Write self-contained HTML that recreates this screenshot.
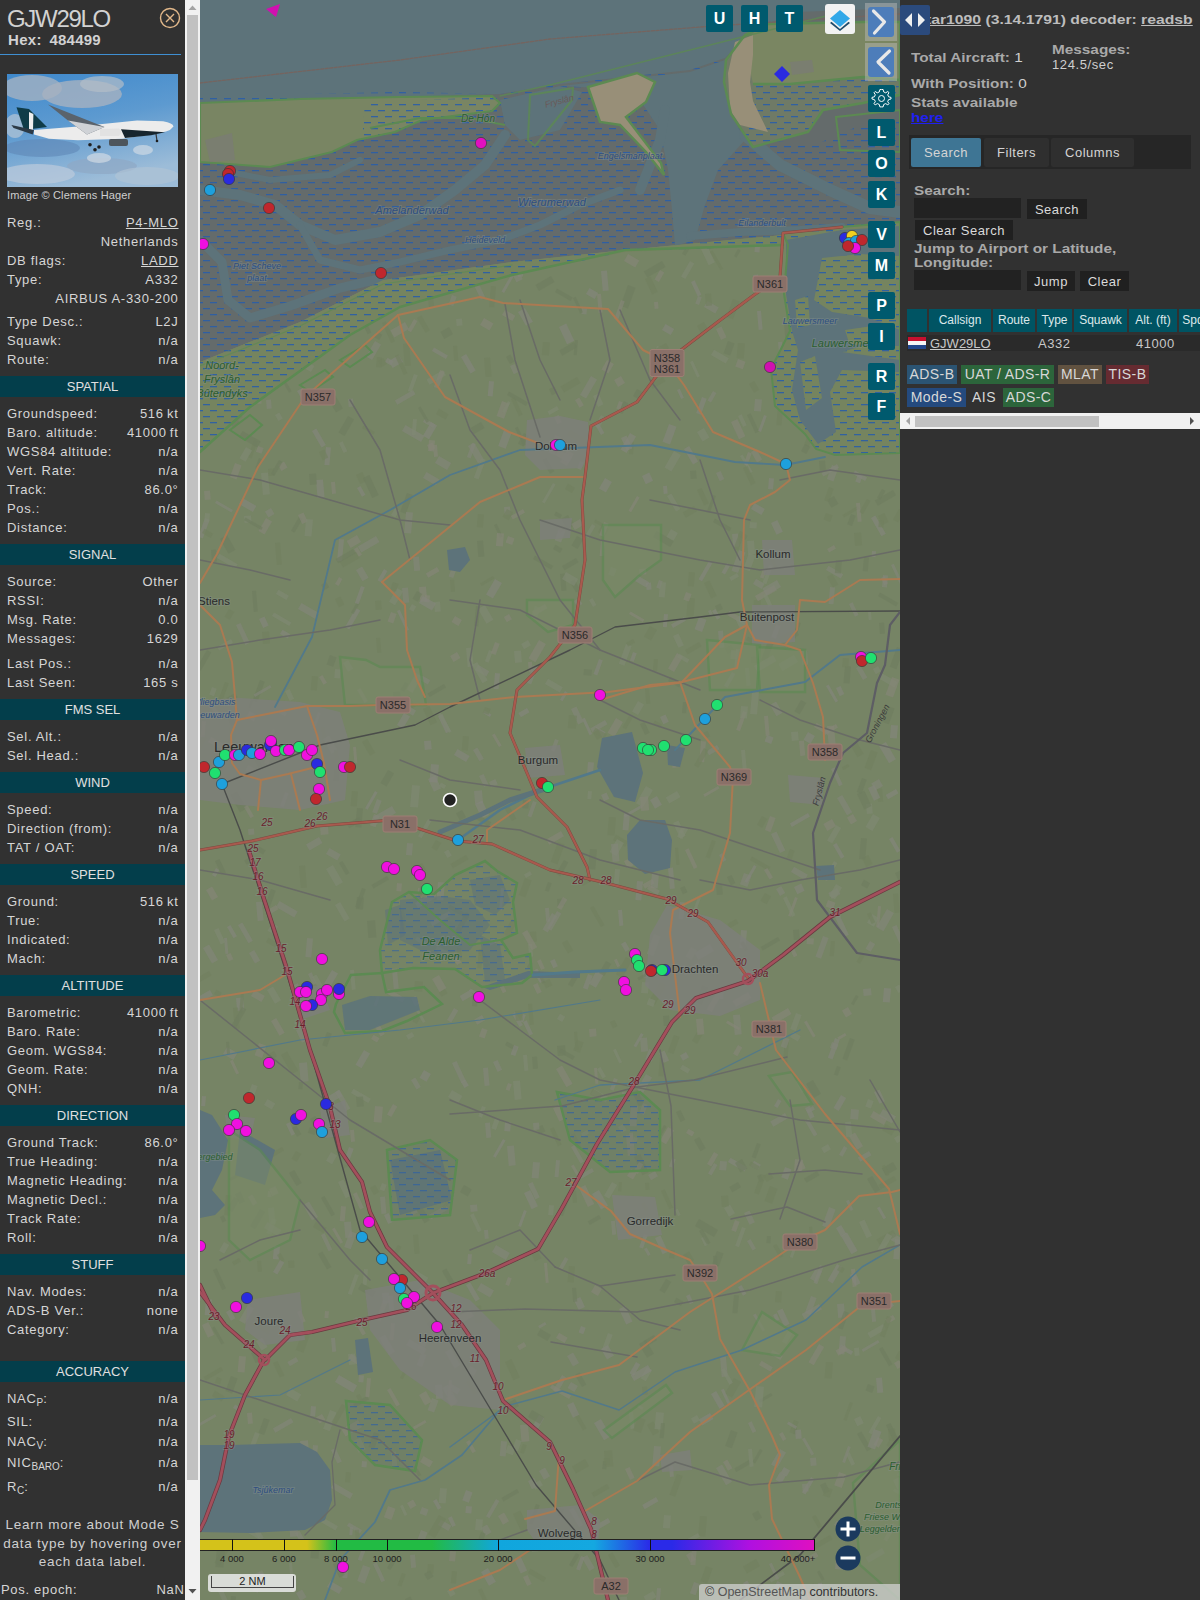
<!DOCTYPE html>
<html><head><meta charset="utf-8">
<style>
html,body{margin:0;padding:0;width:1200px;height:1600px;overflow:hidden;background:#313131;font-family:"Liberation Sans",sans-serif;}
#sb{position:absolute;left:0;top:0;width:185px;height:1600px;background:#313131;color:#d6d6d6;font-size:13px;}
#vscroll{position:absolute;left:185px;top:0;width:15px;height:1600px;background:#f1f1f1;}
#vthumb{position:absolute;left:2px;top:15px;width:11px;height:1465px;background:#c1c1c1;}
#map{position:absolute;left:200px;top:0;width:700px;height:1600px;background:#73825f;overflow:hidden;}
#rp{position:absolute;left:900px;top:0;width:300px;height:1600px;background:#313131;color:#c8c8c8;font-size:13px;}
.r{position:absolute;left:7px;width:171px;height:19px;line-height:19px;white-space:nowrap;letter-spacing:0.7px}
.r sub{font-size:10px;vertical-align:-3px;line-height:0;letter-spacing:0}
.r .v{position:absolute;right:-0.5px;top:0;}
.hd{position:absolute;left:0;width:185px;height:21px;line-height:21px;background:#033e4b;text-align:center;color:#e0e0e0;font-size:13px;}

.b{position:absolute;font-weight:bold;font-size:13px;line-height:15px;color:#a9a9a9;white-space:nowrap;transform-origin:0 50%}
.n{position:absolute;font-size:13px;line-height:18px;color:#cfcfcf;white-space:nowrap}
.tab{position:absolute;top:138px;height:29px;line-height:29px;text-align:center;color:#d4d4d4;font-size:13px;letter-spacing:0.5px;border-radius:2px}
.btn{position:absolute;height:20px;line-height:22px;background:#202020;text-align:center;color:#dadada;font-size:13px;letter-spacing:0.5px}
.th{position:absolute;top:309px;height:23px;line-height:23px;background:#005463;color:#dce8ea;font-size:12px;text-align:center;white-space:nowrap}
.bd{position:absolute;height:19px;line-height:19px;color:#d8d8d8;font-size:14px;text-align:center;letter-spacing:0.4px;white-space:nowrap}
</style></head><body>
<div id="sb">
<div style="position:absolute;left:7px;top:6px;font-size:24px;line-height:26px;color:#d2d2d2;letter-spacing:-1.3px">GJW29LO</div>
<div style="position:absolute;left:8px;top:32px;font:bold 15px 'Liberation Sans',sans-serif;line-height:15px;color:#d2d2d2;white-space:pre;letter-spacing:0.3px">Hex:</div><div style="position:absolute;left:49.5px;top:32px;font:bold 15px 'Liberation Sans',sans-serif;line-height:15px;color:#d2d2d2;letter-spacing:0.2px">484499</div>
<svg style="position:absolute;left:159px;top:7px" width="22" height="22"><circle cx="11" cy="11" r="9.5" fill="none" stroke="#e2b88a" stroke-width="1.4"/><path d="M7,7 L15,15 M15,7 L7,15" stroke="#e2b88a" stroke-width="1.4"/></svg>
<div style="position:absolute;left:0;top:54px;width:181px;height:1px;background:#3f8fd2"></div>
<svg width="171" height="113" viewBox="0 0 171 113" style="position:absolute;left:7px;top:74px">
<defs><linearGradient id="sky" x1="0" y1="0" x2="0.3" y2="1"><stop offset="0" stop-color="#3f89cc"/><stop offset="0.5" stop-color="#5d9ad0"/><stop offset="1" stop-color="#9cbcd8"/></linearGradient></defs>
<rect width="171" height="113" fill="url(#sky)"/>
<ellipse cx="25" cy="14" rx="30" ry="13" fill="#9eafc2" opacity="0.85"/>
<ellipse cx="75" cy="20" rx="40" ry="14" fill="#a6b2c0" opacity="0.8"/>
<ellipse cx="95" cy="10" rx="22" ry="8" fill="#b4bec8" opacity="0.7"/>
<ellipse cx="8" cy="52" rx="10" ry="12" fill="#b6c6d6" opacity="0.7"/>
<ellipse cx="35" cy="74" rx="38" ry="9" fill="#5f87b6" opacity="0.6"/>
<ellipse cx="95" cy="92" rx="35" ry="8" fill="#8ea8c4" opacity="0.7"/>
<ellipse cx="30" cy="100" rx="38" ry="10" fill="#bccbdb" opacity="0.7"/>
<ellipse cx="140" cy="102" rx="32" ry="9" fill="#b2c4d6" opacity="0.6"/>
<ellipse cx="136" cy="76" rx="10" ry="5" fill="#c6d4e2" opacity="0.8"/>
<ellipse cx="92" cy="84" rx="12" ry="5" fill="#d0dae4" opacity="0.7"/>
<path d="M9.5,33.3 L22,35 L40,53 L17,56 Z" fill="#0f3c48"/>
<path d="M22,38 L26.4,40 L26,56 L22,56 Z" fill="#eeeeee"/>
<path d="M4.4,51 L27,56 L25.7,60.4 L6.6,54 Z" fill="#2c3a46"/>
<path d="M27,56 L71,52.4 L130,46.5 L156,47.2 Q166,49 166.5,52.4 Q164,56 159,57.5 L144,60.4 L115,64.8 L71,66.3 L42,64.8 L27,60.4 Z" fill="#ececec"/>
<path d="M114,55.3 L158,58.2 L144,61.2 L118,64.1 Z" fill="#17252e"/>
<path d="M41,30.4 L46,32.5 L97.5,53 L80,60.4 L61,46.5 Z" fill="#5a636c"/>
<path d="M61,46.5 L97.5,53 L80,60.4 Z" fill="#cfd2d6"/>
<path d="M93,55 L112,54.6 Q116,58 112,62 L93,62 Z" fill="#e2e2e2"/>
<rect x="102" y="65" width="19" height="7" rx="2" fill="#4d555c"/>
<circle cx="83" cy="70.7" r="1.8" fill="#1e1e1e"/><circle cx="92" cy="73" r="1.8" fill="#1e1e1e"/><circle cx="88" cy="75.8" r="1.8" fill="#1e1e1e"/>
<path d="M149,60 L150,67" stroke="#333" stroke-width="1.2"/><circle cx="150" cy="67" r="1.3" fill="#1e1e1e"/>
</svg>

<div style="position:absolute;left:7px;top:188px;font-size:11px;line-height:14px;color:#cfcfcf;letter-spacing:0.15px">Image © Clemens Hager</div>
<div class="r" style="top:213px">Reg.:<span class="v"><u>P4-MLO</u></span></div>
<div class="r" style="top:232px"><span class="v">Netherlands</span></div>
<div class="r" style="top:251px">DB flags:<span class="v"><u>LADD</u></span></div>
<div class="r" style="top:269.5px">Type:<span class="v">A332</span></div>
<div class="r" style="top:288.5px"><span class="v">AIRBUS A-330-200</span></div>
<div class="r" style="top:311.5px">Type Desc.:<span class="v">L2J</span></div>
<div class="r" style="top:330.5px">Squawk:<span class="v">n/a</span></div>
<div class="r" style="top:349.5px">Route:<span class="v">n/a</span></div>
<div class="r" style="top:404px">Groundspeed:<span class="v">516 kt</span></div>
<div class="r" style="top:423px">Baro. altitude:<span class="v">41000 ft</span></div>
<div class="r" style="top:442px">WGS84 altitude:<span class="v">n/a</span></div>
<div class="r" style="top:461px">Vert. Rate:<span class="v">n/a</span></div>
<div class="r" style="top:480px">Track:<span class="v">86.0°</span></div>
<div class="r" style="top:499px">Pos.:<span class="v">n/a</span></div>
<div class="r" style="top:518px">Distance:<span class="v">n/a</span></div>
<div class="r" style="top:572px">Source:<span class="v">Other</span></div>
<div class="r" style="top:591px">RSSI:<span class="v">n/a</span></div>
<div class="r" style="top:610px">Msg. Rate:<span class="v">0.0</span></div>
<div class="r" style="top:629px">Messages:<span class="v">1629</span></div>
<div class="r" style="top:654px">Last Pos.:<span class="v">n/a</span></div>
<div class="r" style="top:673px">Last Seen:<span class="v">165 s</span></div>
<div class="r" style="top:727px">Sel. Alt.:<span class="v">n/a</span></div>
<div class="r" style="top:746px">Sel. Head.:<span class="v">n/a</span></div>
<div class="r" style="top:800px">Speed:<span class="v">n/a</span></div>
<div class="r" style="top:819px">Direction (from):<span class="v">n/a</span></div>
<div class="r" style="top:838px">TAT / OAT:<span class="v">n/a</span></div>
<div class="r" style="top:892px">Ground:<span class="v">516 kt</span></div>
<div class="r" style="top:911px">True:<span class="v">n/a</span></div>
<div class="r" style="top:930px">Indicated:<span class="v">n/a</span></div>
<div class="r" style="top:949px">Mach:<span class="v">n/a</span></div>
<div class="r" style="top:1003px">Barometric:<span class="v">41000 ft</span></div>
<div class="r" style="top:1022px">Baro. Rate:<span class="v">n/a</span></div>
<div class="r" style="top:1041px">Geom. WGS84:<span class="v">n/a</span></div>
<div class="r" style="top:1060px">Geom. Rate:<span class="v">n/a</span></div>
<div class="r" style="top:1079px">QNH:<span class="v">n/a</span></div>
<div class="r" style="top:1133px">Ground Track:<span class="v">86.0°</span></div>
<div class="r" style="top:1152px">True Heading:<span class="v">n/a</span></div>
<div class="r" style="top:1171px">Magnetic Heading:<span class="v">n/a</span></div>
<div class="r" style="top:1190px">Magnetic Decl.:<span class="v">n/a</span></div>
<div class="r" style="top:1209px">Track Rate:<span class="v">n/a</span></div>
<div class="r" style="top:1228px">Roll:<span class="v">n/a</span></div>
<div class="r" style="top:1282px">Nav. Modes:<span class="v">n/a</span></div>
<div class="r" style="top:1301px">ADS-B Ver.:<span class="v">none</span></div>
<div class="r" style="top:1320px">Category:<span class="v">n/a</span></div>
<div class="r" style="top:1389px">NAC<sub>P</sub>:<span class="v">n/a</span></div>
<div class="r" style="top:1412px">SIL:<span class="v">n/a</span></div>
<div class="r" style="top:1431.5px">NAC<sub>V</sub>:<span class="v">n/a</span></div>
<div class="r" style="top:1453px">NIC<sub>BARO</sub>:<span class="v">n/a</span></div>
<div class="r" style="top:1476.5px">R<sub>C</sub>:<span class="v">n/a</span></div>
<div class="hd" style="top:376px">SPATIAL</div>
<div class="hd" style="top:544px">SIGNAL</div>
<div class="hd" style="top:699px">FMS SEL</div>
<div class="hd" style="top:772px">WIND</div>
<div class="hd" style="top:864px">SPEED</div>
<div class="hd" style="top:975px">ALTITUDE</div>
<div class="hd" style="top:1105px">DIRECTION</div>
<div class="hd" style="top:1254px">STUFF</div>
<div class="hd" style="top:1361px">ACCURACY</div>
<div style="position:absolute;left:0;top:1516px;width:185px;text-align:center;font-size:13.5px;line-height:18.5px;color:#cfcfcf;letter-spacing:0.75px">Learn more about Mode S<br>data type by hovering over<br>each data label.</div>
<div class="r" style="top:1580px;left:1px;width:183px">Pos. epoch:<span class="v">NaN</span></div>
</div>
<div id="vscroll"><div id="vthumb"></div><svg style="position:absolute;left:0;top:0" width="15" height="1600"><path d="M3.5,10 L7.5,5.5 L11.5,10 Z" fill="#a3a3a3"/><path d="M3.5,1589 L7.5,1593.5 L11.5,1589 Z" fill="#505050"/></svg></div>
<div id="map"><svg width="700" height="1600" viewBox="200 0 700 1600" style="position:absolute;left:0;top:0">
<defs>
<pattern id="dash" width="14" height="12" patternUnits="userSpaceOnUse"><rect x="0" y="2" width="7" height="1.3" fill="#2a5ea8" opacity="0.9"/><rect x="7" y="8" width="7" height="1.3" fill="#2a5ea8" opacity="0.9"/></pattern>
</defs>
<rect x="200" y="0" width="700" height="1600" fill="#768465"/>
<rect x="427" y="445" width="6" height="7" fill="#868678" opacity="0.65" transform="rotate(-25 427 445)"/>
<rect x="456" y="319" width="6" height="7" fill="#7f8873" opacity="0.65" transform="rotate(-5 456 319)"/>
<rect x="249" y="363" width="5" height="19" fill="#84867c" opacity="0.65" transform="rotate(30 249 363)"/>
<rect x="641" y="1033" width="3" height="15" fill="#84867c" opacity="0.65" transform="rotate(30 641 1033)"/>
<rect x="233" y="1408" width="4" height="8" fill="#84867c" opacity="0.65" transform="rotate(-60 233 1408)"/>
<rect x="592" y="1168" width="4" height="15" fill="#82867a" opacity="0.65" transform="rotate(60 592 1168)"/>
<rect x="268" y="1208" width="6" height="16" fill="#7f8873" opacity="0.65" transform="rotate(-5 268 1208)"/>
<rect x="744" y="873" width="8" height="12" fill="#82867a" opacity="0.65" transform="rotate(20 744 873)"/>
<rect x="689" y="572" width="6" height="14" fill="#72805f" opacity="0.65" transform="rotate(5 689 572)"/>
<rect x="402" y="1573" width="4" height="13" fill="#72805f" opacity="0.65" transform="rotate(20 402 1573)"/>
<rect x="853" y="814" width="8" height="7" fill="#868678" opacity="0.65" transform="rotate(60 853 814)"/>
<rect x="438" y="716" width="5" height="19" fill="#84867c" opacity="0.65" transform="rotate(-25 438 716)"/>
<rect x="861" y="885" width="6" height="7" fill="#6f7d60" opacity="0.65" transform="rotate(-60 861 885)"/>
<rect x="653" y="1591" width="7" height="11" fill="#7f8873" opacity="0.65" transform="rotate(60 653 1591)"/>
<rect x="216" y="868" width="4" height="8" fill="#84867c" opacity="0.65" transform="rotate(30 216 868)"/>
<rect x="738" y="416" width="4" height="12" fill="#7f8873" opacity="0.65" transform="rotate(-25 738 416)"/>
<rect x="316" y="786" width="4" height="8" fill="#7f8873" opacity="0.65" transform="rotate(-60 316 786)"/>
<rect x="694" y="1582" width="6" height="12" fill="#82867a" opacity="0.65" transform="rotate(20 694 1582)"/>
<rect x="258" y="446" width="6" height="6" fill="#868678" opacity="0.65" transform="rotate(20 258 446)"/>
<rect x="384" y="246" width="5" height="12" fill="#868678" opacity="0.65" transform="rotate(60 384 246)"/>
<rect x="867" y="1179" width="6" height="16" fill="#6f7d60" opacity="0.65" transform="rotate(-30 867 1179)"/>
<rect x="520" y="1425" width="8" height="17" fill="#868678" opacity="0.65" transform="rotate(-5 520 1425)"/>
<rect x="479" y="776" width="5" height="12" fill="#82867a" opacity="0.65" transform="rotate(-25 479 776)"/>
<rect x="889" y="839" width="4" height="16" fill="#84867c" opacity="0.65" transform="rotate(-30 889 839)"/>
<rect x="597" y="970" width="8" height="16" fill="#84867c" opacity="0.65" transform="rotate(30 597 970)"/>
<rect x="630" y="442" width="4" height="12" fill="#72805f" opacity="0.65" transform="rotate(5 630 442)"/>
<rect x="286" y="1395" width="8" height="13" fill="#7f8873" opacity="0.65" transform="rotate(-60 286 1395)"/>
<rect x="260" y="379" width="5" height="10" fill="#6f7d60" opacity="0.65" transform="rotate(20 260 379)"/>
<rect x="561" y="519" width="8" height="12" fill="#6f7d60" opacity="0.65" transform="rotate(-30 561 519)"/>
<rect x="731" y="645" width="6" height="7" fill="#72805f" opacity="0.65" transform="rotate(60 731 645)"/>
<rect x="836" y="724" width="4" height="15" fill="#868678" opacity="0.65" transform="rotate(60 836 724)"/>
<rect x="646" y="1074" width="7" height="18" fill="#82867a" opacity="0.65" transform="rotate(30 646 1074)"/>
<rect x="773" y="1246" width="4" height="14" fill="#72805f" opacity="0.65" transform="rotate(-30 773 1246)"/>
<rect x="893" y="1315" width="5" height="9" fill="#868678" opacity="0.65" transform="rotate(60 893 1315)"/>
<rect x="513" y="1514" width="8" height="21" fill="#72805f" opacity="0.65" transform="rotate(-25 513 1514)"/>
<rect x="354" y="549" width="4" height="9" fill="#868678" opacity="0.65" transform="rotate(-30 354 549)"/>
<rect x="536" y="1128" width="7" height="7" fill="#6f7d60" opacity="0.65" transform="rotate(-25 536 1128)"/>
<rect x="837" y="1304" width="7" height="14" fill="#82867a" opacity="0.65" transform="rotate(-5 837 1304)"/>
<rect x="752" y="692" width="7" height="22" fill="#7f8873" opacity="0.65" transform="rotate(5 752 692)"/>
<rect x="481" y="1528" width="7" height="9" fill="#82867a" opacity="0.65" transform="rotate(-30 481 1528)"/>
<rect x="306" y="1471" width="7" height="8" fill="#868678" opacity="0.65" transform="rotate(5 306 1471)"/>
<rect x="660" y="717" width="6" height="8" fill="#84867c" opacity="0.65" transform="rotate(-25 660 717)"/>
<rect x="569" y="1510" width="5" height="20" fill="#82867a" opacity="0.65" transform="rotate(-30 569 1510)"/>
<rect x="376" y="638" width="4" height="15" fill="#72805f" opacity="0.65" transform="rotate(-5 376 638)"/>
<rect x="784" y="323" width="7" height="20" fill="#6f7d60" opacity="0.65" transform="rotate(-5 784 323)"/>
<rect x="779" y="1434" width="4" height="8" fill="#868678" opacity="0.65" transform="rotate(-30 779 1434)"/>
<rect x="811" y="1296" width="6" height="18" fill="#82867a" opacity="0.65" transform="rotate(20 811 1296)"/>
<rect x="299" y="1082" width="4" height="7" fill="#6f7d60" opacity="0.65" transform="rotate(5 299 1082)"/>
<rect x="749" y="384" width="6" height="10" fill="#72805f" opacity="0.65" transform="rotate(-30 749 384)"/>
<rect x="741" y="930" width="6" height="18" fill="#84867c" opacity="0.65" transform="rotate(5 741 930)"/>
<rect x="428" y="1564" width="6" height="9" fill="#72805f" opacity="0.65" transform="rotate(5 428 1564)"/>
<rect x="556" y="1338" width="6" height="10" fill="#868678" opacity="0.65" transform="rotate(-60 556 1338)"/>
<rect x="846" y="1454" width="4" height="13" fill="#7f8873" opacity="0.65" transform="rotate(-25 846 1454)"/>
<rect x="475" y="670" width="6" height="13" fill="#82867a" opacity="0.65" transform="rotate(-60 475 670)"/>
<rect x="749" y="1460" width="4" height="17" fill="#6f7d60" opacity="0.65" transform="rotate(60 749 1460)"/>
<rect x="300" y="1441" width="8" height="10" fill="#84867c" opacity="0.65" transform="rotate(-5 300 1441)"/>
<rect x="819" y="461" width="6" height="10" fill="#6f7d60" opacity="0.65" transform="rotate(-5 819 461)"/>
<rect x="896" y="789" width="5" height="12" fill="#84867c" opacity="0.65" transform="rotate(60 896 789)"/>
<rect x="214" y="994" width="5" height="6" fill="#72805f" opacity="0.65" transform="rotate(-60 214 994)"/>
<rect x="559" y="327" width="8" height="19" fill="#84867c" opacity="0.65" transform="rotate(-25 559 327)"/>
<rect x="386" y="294" width="7" height="10" fill="#82867a" opacity="0.65" transform="rotate(-5 386 294)"/>
<rect x="795" y="1159" width="8" height="12" fill="#868678" opacity="0.65" transform="rotate(5 795 1159)"/>
<rect x="690" y="362" width="3" height="17" fill="#7f8873" opacity="0.65" transform="rotate(-25 690 362)"/>
<rect x="388" y="263" width="3" height="10" fill="#868678" opacity="0.65" transform="rotate(30 388 263)"/>
<rect x="247" y="1413" width="5" height="11" fill="#868678" opacity="0.65" transform="rotate(-5 247 1413)"/>
<rect x="849" y="604" width="4" height="14" fill="#82867a" opacity="0.65" transform="rotate(-25 849 604)"/>
<rect x="878" y="596" width="4" height="21" fill="#6f7d60" opacity="0.65" transform="rotate(-60 878 596)"/>
<rect x="572" y="520" width="5" height="17" fill="#72805f" opacity="0.65" transform="rotate(60 572 520)"/>
<rect x="763" y="1593" width="3" height="6" fill="#868678" opacity="0.65" transform="rotate(30 763 1593)"/>
<rect x="560" y="574" width="5" height="17" fill="#6f7d60" opacity="0.65" transform="rotate(-5 560 574)"/>
<rect x="660" y="982" width="7" height="22" fill="#72805f" opacity="0.65" transform="rotate(30 660 982)"/>
<rect x="888" y="706" width="7" height="17" fill="#6f7d60" opacity="0.65" transform="rotate(20 888 706)"/>
<rect x="483" y="713" width="3" height="8" fill="#84867c" opacity="0.65" transform="rotate(-60 483 713)"/>
<rect x="502" y="315" width="6" height="12" fill="#868678" opacity="0.65" transform="rotate(-60 502 315)"/>
<rect x="619" y="1182" width="3" height="9" fill="#72805f" opacity="0.65" transform="rotate(5 619 1182)"/>
<rect x="203" y="735" width="5" height="22" fill="#72805f" opacity="0.65" transform="rotate(30 203 735)"/>
<rect x="224" y="1440" width="4" height="9" fill="#72805f" opacity="0.65" transform="rotate(-5 224 1440)"/>
<rect x="259" y="619" width="6" height="10" fill="#84867c" opacity="0.65" transform="rotate(-25 259 619)"/>
<rect x="385" y="362" width="5" height="7" fill="#84867c" opacity="0.65" transform="rotate(-60 385 362)"/>
<rect x="413" y="557" width="6" height="14" fill="#82867a" opacity="0.65" transform="rotate(-5 413 557)"/>
<rect x="735" y="1220" width="5" height="11" fill="#868678" opacity="0.65" transform="rotate(20 735 1220)"/>
<rect x="231" y="1376" width="7" height="16" fill="#6f7d60" opacity="0.65" transform="rotate(20 231 1376)"/>
<rect x="837" y="1264" width="6" height="19" fill="#84867c" opacity="0.65" transform="rotate(30 837 1264)"/>
<rect x="260" y="297" width="6" height="21" fill="#7f8873" opacity="0.65" transform="rotate(5 260 297)"/>
<rect x="591" y="1094" width="6" height="17" fill="#7f8873" opacity="0.65" transform="rotate(-60 591 1094)"/>
<rect x="202" y="1325" width="7" height="14" fill="#868678" opacity="0.65" transform="rotate(-25 202 1325)"/>
<rect x="662" y="330" width="7" height="10" fill="#84867c" opacity="0.65" transform="rotate(-60 662 330)"/>
<rect x="364" y="1269" width="4" height="16" fill="#7f8873" opacity="0.65" transform="rotate(5 364 1269)"/>
<rect x="792" y="344" width="8" height="11" fill="#84867c" opacity="0.65" transform="rotate(30 792 344)"/>
<rect x="254" y="440" width="4" height="18" fill="#72805f" opacity="0.65" transform="rotate(20 254 440)"/>
<rect x="209" y="322" width="4" height="17" fill="#6f7d60" opacity="0.65" transform="rotate(30 209 322)"/>
<rect x="673" y="636" width="6" height="13" fill="#7f8873" opacity="0.65" transform="rotate(-25 673 636)"/>
<rect x="895" y="987" width="5" height="7" fill="#7f8873" opacity="0.65" transform="rotate(-30 895 987)"/>
<rect x="403" y="344" width="6" height="22" fill="#72805f" opacity="0.65" transform="rotate(-5 403 344)"/>
<rect x="347" y="1526" width="4" height="15" fill="#82867a" opacity="0.65" transform="rotate(-60 347 1526)"/>
<rect x="867" y="420" width="7" height="14" fill="#84867c" opacity="0.65" transform="rotate(60 867 420)"/>
<rect x="362" y="1461" width="5" height="6" fill="#84867c" opacity="0.65" transform="rotate(5 362 1461)"/>
<rect x="677" y="791" width="7" height="13" fill="#7f8873" opacity="0.65" transform="rotate(60 677 791)"/>
<rect x="285" y="691" width="5" height="11" fill="#7f8873" opacity="0.65" transform="rotate(-25 285 691)"/>
<rect x="858" y="506" width="3" height="18" fill="#72805f" opacity="0.65" transform="rotate(60 858 506)"/>
<rect x="245" y="771" width="7" height="7" fill="#7f8873" opacity="0.65" transform="rotate(-60 245 771)"/>
<rect x="798" y="622" width="3" height="17" fill="#6f7d60" opacity="0.65" transform="rotate(20 798 622)"/>
<rect x="375" y="601" width="6" height="9" fill="#72805f" opacity="0.65" transform="rotate(-5 375 601)"/>
<rect x="819" y="1344" width="6" height="21" fill="#868678" opacity="0.65" transform="rotate(30 819 1344)"/>
<rect x="704" y="307" width="7" height="13" fill="#82867a" opacity="0.65" transform="rotate(-60 704 307)"/>
<rect x="540" y="1480" width="6" height="9" fill="#7f8873" opacity="0.65" transform="rotate(60 540 1480)"/>
<rect x="397" y="588" width="7" height="16" fill="#7f8873" opacity="0.65" transform="rotate(30 397 588)"/>
<rect x="411" y="998" width="5" height="9" fill="#82867a" opacity="0.65" transform="rotate(-25 411 998)"/>
<rect x="346" y="1472" width="5" height="10" fill="#72805f" opacity="0.65" transform="rotate(5 346 1472)"/>
<rect x="499" y="985" width="4" height="9" fill="#868678" opacity="0.65" transform="rotate(-25 499 985)"/>
<rect x="424" y="741" width="7" height="9" fill="#84867c" opacity="0.65" transform="rotate(-5 424 741)"/>
<rect x="468" y="1254" width="4" height="10" fill="#84867c" opacity="0.65" transform="rotate(5 468 1254)"/>
<rect x="394" y="1556" width="4" height="14" fill="#6f7d60" opacity="0.65" transform="rotate(30 394 1556)"/>
<rect x="265" y="1460" width="5" height="16" fill="#7f8873" opacity="0.65" transform="rotate(-60 265 1460)"/>
<rect x="794" y="1427" width="3" height="7" fill="#6f7d60" opacity="0.65" transform="rotate(5 794 1427)"/>
<rect x="878" y="906" width="3" height="21" fill="#868678" opacity="0.65" transform="rotate(5 878 906)"/>
<rect x="881" y="578" width="4" height="8" fill="#868678" opacity="0.65" transform="rotate(-25 881 578)"/>
<rect x="859" y="1222" width="6" height="18" fill="#7f8873" opacity="0.65" transform="rotate(-25 859 1222)"/>
<rect x="586" y="294" width="7" height="10" fill="#84867c" opacity="0.65" transform="rotate(-60 586 294)"/>
<rect x="874" y="1092" width="6" height="13" fill="#84867c" opacity="0.65" transform="rotate(-25 874 1092)"/>
<rect x="249" y="953" width="6" height="12" fill="#82867a" opacity="0.65" transform="rotate(-30 249 953)"/>
<rect x="207" y="650" width="5" height="21" fill="#6f7d60" opacity="0.65" transform="rotate(30 207 650)"/>
<rect x="533" y="559" width="4" height="21" fill="#6f7d60" opacity="0.65" transform="rotate(-60 533 559)"/>
<rect x="239" y="504" width="7" height="16" fill="#84867c" opacity="0.65" transform="rotate(-60 239 504)"/>
<rect x="359" y="817" width="5" height="14" fill="#6f7d60" opacity="0.65" transform="rotate(60 359 817)"/>
<rect x="703" y="733" width="5" height="6" fill="#72805f" opacity="0.65" transform="rotate(-25 703 733)"/>
<rect x="344" y="1559" width="5" height="19" fill="#82867a" opacity="0.65" transform="rotate(5 344 1559)"/>
<rect x="355" y="1274" width="4" height="21" fill="#7f8873" opacity="0.65" transform="rotate(20 355 1274)"/>
<rect x="828" y="900" width="8" height="7" fill="#868678" opacity="0.65" transform="rotate(20 828 900)"/>
<rect x="845" y="314" width="3" height="16" fill="#7f8873" opacity="0.65" transform="rotate(-30 845 314)"/>
<rect x="697" y="490" width="5" height="17" fill="#72805f" opacity="0.65" transform="rotate(-25 697 490)"/>
<rect x="898" y="1507" width="5" height="9" fill="#868678" opacity="0.65" transform="rotate(5 898 1507)"/>
<rect x="222" y="1144" width="5" height="12" fill="#72805f" opacity="0.65" transform="rotate(5 222 1144)"/>
<rect x="318" y="244" width="4" height="12" fill="#84867c" opacity="0.65" transform="rotate(30 318 244)"/>
<rect x="466" y="1285" width="5" height="19" fill="#84867c" opacity="0.65" transform="rotate(-30 466 1285)"/>
<rect x="694" y="506" width="6" height="13" fill="#72805f" opacity="0.65" transform="rotate(60 694 506)"/>
<rect x="716" y="885" width="6" height="10" fill="#6f7d60" opacity="0.65" transform="rotate(-5 716 885)"/>
<rect x="228" y="287" width="3" height="21" fill="#72805f" opacity="0.65" transform="rotate(30 228 287)"/>
<rect x="723" y="1462" width="5" height="10" fill="#868678" opacity="0.65" transform="rotate(-30 723 1462)"/>
<rect x="384" y="1215" width="5" height="10" fill="#84867c" opacity="0.65" transform="rotate(-25 384 1215)"/>
<rect x="217" y="558" width="5" height="21" fill="#7f8873" opacity="0.65" transform="rotate(-60 217 558)"/>
<rect x="839" y="1348" width="4" height="14" fill="#84867c" opacity="0.65" transform="rotate(-60 839 1348)"/>
<rect x="776" y="1291" width="6" height="11" fill="#72805f" opacity="0.65" transform="rotate(5 776 1291)"/>
<rect x="453" y="1304" width="3" height="9" fill="#82867a" opacity="0.65" transform="rotate(30 453 1304)"/>
<rect x="485" y="1123" width="5" height="15" fill="#82867a" opacity="0.65" transform="rotate(-5 485 1123)"/>
<rect x="818" y="1583" width="4" height="7" fill="#84867c" opacity="0.65" transform="rotate(-5 818 1583)"/>
<rect x="549" y="1205" width="5" height="10" fill="#7f8873" opacity="0.65" transform="rotate(5 549 1205)"/>
<rect x="634" y="1157" width="7" height="20" fill="#6f7d60" opacity="0.65" transform="rotate(-25 634 1157)"/>
<rect x="746" y="640" width="4" height="10" fill="#72805f" opacity="0.65" transform="rotate(-60 746 640)"/>
<rect x="339" y="577" width="4" height="8" fill="#868678" opacity="0.65" transform="rotate(30 339 577)"/>
<rect x="428" y="779" width="8" height="14" fill="#82867a" opacity="0.65" transform="rotate(-25 428 779)"/>
<rect x="657" y="1588" width="4" height="14" fill="#82867a" opacity="0.65" transform="rotate(5 657 1588)"/>
<rect x="840" y="295" width="4" height="8" fill="#82867a" opacity="0.65" transform="rotate(30 840 295)"/>
<rect x="851" y="746" width="7" height="13" fill="#72805f" opacity="0.65" transform="rotate(-30 851 746)"/>
<rect x="274" y="1051" width="6" height="9" fill="#72805f" opacity="0.65" transform="rotate(60 274 1051)"/>
<rect x="299" y="517" width="4" height="16" fill="#6f7d60" opacity="0.65" transform="rotate(30 299 517)"/>
<rect x="770" y="1354" width="5" height="12" fill="#868678" opacity="0.65" transform="rotate(-60 770 1354)"/>
<rect x="255" y="283" width="5" height="14" fill="#7f8873" opacity="0.65" transform="rotate(-25 255 283)"/>
<rect x="757" y="1143" width="4" height="15" fill="#6f7d60" opacity="0.65" transform="rotate(20 757 1143)"/>
<rect x="478" y="609" width="8" height="17" fill="#7f8873" opacity="0.65" transform="rotate(-30 478 609)"/>
<rect x="419" y="1010" width="5" height="13" fill="#72805f" opacity="0.65" transform="rotate(30 419 1010)"/>
<rect x="474" y="791" width="8" height="13" fill="#82867a" opacity="0.65" transform="rotate(-5 474 791)"/>
<rect x="279" y="363" width="6" height="12" fill="#82867a" opacity="0.65" transform="rotate(20 279 363)"/>
<rect x="210" y="990" width="6" height="21" fill="#84867c" opacity="0.65" transform="rotate(60 210 990)"/>
<rect x="716" y="473" width="5" height="9" fill="#82867a" opacity="0.65" transform="rotate(-25 716 473)"/>
<rect x="276" y="907" width="7" height="21" fill="#82867a" opacity="0.65" transform="rotate(-60 276 907)"/>
<rect x="289" y="1523" width="8" height="14" fill="#84867c" opacity="0.65" transform="rotate(-5 289 1523)"/>
<rect x="260" y="1209" width="6" height="20" fill="#6f7d60" opacity="0.65" transform="rotate(30 260 1209)"/>
<rect x="635" y="1076" width="4" height="14" fill="#868678" opacity="0.65" transform="rotate(30 635 1076)"/>
<rect x="229" y="1516" width="4" height="12" fill="#82867a" opacity="0.65" transform="rotate(30 229 1516)"/>
<rect x="879" y="1349" width="4" height="20" fill="#6f7d60" opacity="0.65" transform="rotate(-30 879 1349)"/>
<rect x="668" y="681" width="5" height="13" fill="#6f7d60" opacity="0.65" transform="rotate(-60 668 681)"/>
<rect x="654" y="659" width="4" height="12" fill="#72805f" opacity="0.65" transform="rotate(5 654 659)"/>
<rect x="553" y="483" width="3" height="22" fill="#7f8873" opacity="0.65" transform="rotate(30 553 483)"/>
<rect x="513" y="1081" width="7" height="19" fill="#7f8873" opacity="0.65" transform="rotate(-5 513 1081)"/>
<rect x="275" y="415" width="5" height="7" fill="#7f8873" opacity="0.65" transform="rotate(-30 275 415)"/>
<rect x="228" y="417" width="8" height="11" fill="#6f7d60" opacity="0.65" transform="rotate(-25 228 417)"/>
<rect x="238" y="925" width="5" height="21" fill="#82867a" opacity="0.65" transform="rotate(-30 238 925)"/>
<rect x="800" y="1595" width="7" height="19" fill="#82867a" opacity="0.65" transform="rotate(20 800 1595)"/>
<rect x="887" y="909" width="8" height="21" fill="#82867a" opacity="0.65" transform="rotate(30 887 909)"/>
<rect x="246" y="717" width="7" height="9" fill="#868678" opacity="0.65" transform="rotate(-60 246 717)"/>
<rect x="834" y="861" width="4" height="21" fill="#7f8873" opacity="0.65" transform="rotate(30 834 861)"/>
<rect x="614" y="1078" width="4" height="12" fill="#82867a" opacity="0.65" transform="rotate(20 614 1078)"/>
<rect x="482" y="1106" width="4" height="11" fill="#7f8873" opacity="0.65" transform="rotate(20 482 1106)"/>
<rect x="754" y="600" width="7" height="7" fill="#72805f" opacity="0.65" transform="rotate(5 754 600)"/>
<rect x="589" y="1029" width="7" height="8" fill="#868678" opacity="0.65" transform="rotate(-5 589 1029)"/>
<rect x="717" y="745" width="5" height="12" fill="#82867a" opacity="0.65" transform="rotate(60 717 745)"/>
<rect x="432" y="351" width="4" height="16" fill="#84867c" opacity="0.65" transform="rotate(-60 432 351)"/>
<rect x="774" y="585" width="6" height="22" fill="#868678" opacity="0.65" transform="rotate(60 774 585)"/>
<rect x="713" y="1256" width="4" height="11" fill="#6f7d60" opacity="0.65" transform="rotate(-5 713 1256)"/>
<rect x="492" y="735" width="3" height="14" fill="#868678" opacity="0.65" transform="rotate(-30 492 735)"/>
<rect x="216" y="244" width="5" height="8" fill="#72805f" opacity="0.65" transform="rotate(30 216 244)"/>
<rect x="489" y="650" width="4" height="12" fill="#7f8873" opacity="0.65" transform="rotate(20 489 650)"/>
<rect x="294" y="1514" width="4" height="8" fill="#84867c" opacity="0.65" transform="rotate(-25 294 1514)"/>
<rect x="647" y="1425" width="7" height="12" fill="#72805f" opacity="0.65" transform="rotate(-30 647 1425)"/>
<rect x="239" y="1356" width="7" height="16" fill="#868678" opacity="0.65" transform="rotate(5 239 1356)"/>
<rect x="621" y="944" width="5" height="9" fill="#84867c" opacity="0.65" transform="rotate(-30 621 944)"/>
<rect x="243" y="274" width="4" height="9" fill="#84867c" opacity="0.65" transform="rotate(-30 243 274)"/>
<rect x="629" y="1133" width="4" height="13" fill="#868678" opacity="0.65" transform="rotate(-5 629 1133)"/>
<rect x="769" y="478" width="5" height="11" fill="#84867c" opacity="0.65" transform="rotate(5 769 478)"/>
<rect x="701" y="249" width="7" height="18" fill="#7f8873" opacity="0.65" transform="rotate(-25 701 249)"/>
<rect x="719" y="855" width="4" height="8" fill="#82867a" opacity="0.65" transform="rotate(-30 719 855)"/>
<rect x="286" y="1452" width="8" height="21" fill="#72805f" opacity="0.65" transform="rotate(-30 286 1452)"/>
<rect x="386" y="993" width="5" height="19" fill="#868678" opacity="0.65" transform="rotate(-60 386 993)"/>
<rect x="407" y="1503" width="7" height="7" fill="#868678" opacity="0.65" transform="rotate(-30 407 1503)"/>
<rect x="319" y="1470" width="7" height="9" fill="#82867a" opacity="0.65" transform="rotate(60 319 1470)"/>
<rect x="334" y="769" width="6" height="12" fill="#6f7d60" opacity="0.65" transform="rotate(5 334 769)"/>
<rect x="530" y="962" width="3" height="6" fill="#6f7d60" opacity="0.65" transform="rotate(30 530 962)"/>
<rect x="599" y="659" width="4" height="16" fill="#84867c" opacity="0.65" transform="rotate(20 599 659)"/>
<rect x="301" y="277" width="4" height="21" fill="#72805f" opacity="0.65" transform="rotate(20 301 277)"/>
<rect x="691" y="282" width="4" height="16" fill="#84867c" opacity="0.65" transform="rotate(-25 691 282)"/>
<rect x="716" y="329" width="6" height="12" fill="#868678" opacity="0.65" transform="rotate(-25 716 329)"/>
<rect x="816" y="1268" width="7" height="12" fill="#82867a" opacity="0.65" transform="rotate(30 816 1268)"/>
<rect x="342" y="286" width="8" height="21" fill="#6f7d60" opacity="0.65" transform="rotate(-25 342 286)"/>
<rect x="778" y="1099" width="4" height="8" fill="#84867c" opacity="0.65" transform="rotate(30 778 1099)"/>
<rect x="406" y="698" width="4" height="12" fill="#72805f" opacity="0.65" transform="rotate(-30 406 698)"/>
<rect x="701" y="741" width="5" height="21" fill="#868678" opacity="0.65" transform="rotate(5 701 741)"/>
<rect x="796" y="1081" width="3" height="13" fill="#7f8873" opacity="0.65" transform="rotate(-25 796 1081)"/>
<rect x="443" y="1198" width="6" height="9" fill="#84867c" opacity="0.65" transform="rotate(-60 443 1198)"/>
<rect x="319" y="242" width="4" height="18" fill="#84867c" opacity="0.65" transform="rotate(-30 319 242)"/>
<rect x="443" y="370" width="6" height="19" fill="#7f8873" opacity="0.65" transform="rotate(60 443 370)"/>
<rect x="870" y="941" width="6" height="9" fill="#82867a" opacity="0.65" transform="rotate(30 870 941)"/>
<rect x="549" y="389" width="6" height="7" fill="#6f7d60" opacity="0.65" transform="rotate(-25 549 389)"/>
<rect x="640" y="724" width="5" height="12" fill="#6f7d60" opacity="0.65" transform="rotate(-25 640 724)"/>
<rect x="495" y="1118" width="5" height="11" fill="#7f8873" opacity="0.65" transform="rotate(20 495 1118)"/>
<rect x="466" y="1442" width="4" height="13" fill="#868678" opacity="0.65" transform="rotate(-30 466 1442)"/>
<rect x="444" y="684" width="4" height="19" fill="#6f7d60" opacity="0.65" transform="rotate(60 444 684)"/>
<rect x="319" y="837" width="7" height="15" fill="#82867a" opacity="0.65" transform="rotate(60 319 837)"/>
<rect x="523" y="1444" width="4" height="9" fill="#72805f" opacity="0.65" transform="rotate(20 523 1444)"/>
<rect x="706" y="1566" width="7" height="16" fill="#72805f" opacity="0.65" transform="rotate(20 706 1566)"/>
<rect x="365" y="1540" width="4" height="21" fill="#84867c" opacity="0.65" transform="rotate(20 365 1540)"/>
<rect x="874" y="378" width="5" height="22" fill="#72805f" opacity="0.65" transform="rotate(-60 874 378)"/>
<rect x="504" y="507" width="6" height="8" fill="#82867a" opacity="0.65" transform="rotate(-5 504 507)"/>
<rect x="525" y="257" width="7" height="13" fill="#82867a" opacity="0.65" transform="rotate(-60 525 257)"/>
<rect x="524" y="433" width="6" height="12" fill="#6f7d60" opacity="0.65" transform="rotate(30 524 433)"/>
<rect x="836" y="825" width="6" height="18" fill="#7f8873" opacity="0.65" transform="rotate(30 836 825)"/>
<rect x="668" y="1127" width="7" height="16" fill="#868678" opacity="0.65" transform="rotate(30 668 1127)"/>
<rect x="676" y="1112" width="5" height="11" fill="#6f7d60" opacity="0.65" transform="rotate(-25 676 1112)"/>
<rect x="826" y="570" width="5" height="17" fill="#82867a" opacity="0.65" transform="rotate(-60 826 570)"/>
<rect x="795" y="897" width="3" height="20" fill="#868678" opacity="0.65" transform="rotate(20 795 897)"/>
<rect x="826" y="686" width="3" height="19" fill="#84867c" opacity="0.65" transform="rotate(-30 826 686)"/>
<rect x="376" y="536" width="7" height="21" fill="#82867a" opacity="0.65" transform="rotate(60 376 536)"/>
<rect x="271" y="1021" width="6" height="17" fill="#868678" opacity="0.65" transform="rotate(-30 271 1021)"/>
<rect x="647" y="1367" width="6" height="13" fill="#7f8873" opacity="0.65" transform="rotate(30 647 1367)"/>
<rect x="893" y="490" width="6" height="21" fill="#6f7d60" opacity="0.65" transform="rotate(60 893 490)"/>
<rect x="646" y="583" width="5" height="7" fill="#84867c" opacity="0.65" transform="rotate(-5 646 583)"/>
<rect x="841" y="1095" width="6" height="15" fill="#84867c" opacity="0.65" transform="rotate(30 841 1095)"/>
<rect x="412" y="785" width="8" height="22" fill="#7f8873" opacity="0.65" transform="rotate(5 412 785)"/>
<rect x="348" y="416" width="7" height="19" fill="#6f7d60" opacity="0.65" transform="rotate(30 348 416)"/>
<rect x="528" y="1004" width="4" height="21" fill="#72805f" opacity="0.65" transform="rotate(-5 528 1004)"/>
<rect x="528" y="640" width="6" height="8" fill="#7f8873" opacity="0.65" transform="rotate(60 528 640)"/>
<rect x="749" y="553" width="7" height="17" fill="#7f8873" opacity="0.65" transform="rotate(20 749 553)"/>
<rect x="537" y="1335" width="7" height="12" fill="#6f7d60" opacity="0.65" transform="rotate(-60 537 1335)"/>
<rect x="424" y="899" width="6" height="7" fill="#72805f" opacity="0.65" transform="rotate(20 424 899)"/>
<rect x="850" y="1402" width="3" height="19" fill="#72805f" opacity="0.65" transform="rotate(20 850 1402)"/>
<rect x="571" y="709" width="6" height="17" fill="#82867a" opacity="0.65" transform="rotate(-25 571 709)"/>
<rect x="659" y="580" width="4" height="8" fill="#82867a" opacity="0.65" transform="rotate(20 659 580)"/>
<rect x="743" y="711" width="4" height="20" fill="#868678" opacity="0.65" transform="rotate(20 743 711)"/>
<rect x="627" y="1176" width="8" height="7" fill="#868678" opacity="0.65" transform="rotate(-60 627 1176)"/>
<rect x="338" y="1182" width="6" height="18" fill="#7f8873" opacity="0.65" transform="rotate(-25 338 1182)"/>
<rect x="589" y="600" width="4" height="8" fill="#7f8873" opacity="0.65" transform="rotate(-30 589 600)"/>
<rect x="539" y="1471" width="7" height="10" fill="#82867a" opacity="0.65" transform="rotate(-30 539 1471)"/>
<rect x="312" y="676" width="6" height="14" fill="#72805f" opacity="0.65" transform="rotate(5 312 676)"/>
<rect x="462" y="810" width="8" height="7" fill="#6f7d60" opacity="0.65" transform="rotate(60 462 810)"/>
<rect x="645" y="279" width="6" height="17" fill="#72805f" opacity="0.65" transform="rotate(-25 645 279)"/>
<rect x="557" y="899" width="7" height="7" fill="#6f7d60" opacity="0.65" transform="rotate(-5 557 899)"/>
<rect x="638" y="701" width="7" height="12" fill="#7f8873" opacity="0.65" transform="rotate(30 638 701)"/>
<rect x="399" y="705" width="4" height="7" fill="#72805f" opacity="0.65" transform="rotate(-60 399 705)"/>
<rect x="449" y="911" width="5" height="22" fill="#868678" opacity="0.65" transform="rotate(60 449 911)"/>
<rect x="882" y="1130" width="7" height="11" fill="#72805f" opacity="0.65" transform="rotate(-60 882 1130)"/>
<rect x="289" y="1563" width="3" height="22" fill="#7f8873" opacity="0.65" transform="rotate(-5 289 1563)"/>
<rect x="582" y="308" width="5" height="6" fill="#82867a" opacity="0.65" transform="rotate(5 582 308)"/>
<rect x="626" y="1135" width="7" height="21" fill="#868678" opacity="0.65" transform="rotate(-5 626 1135)"/>
<rect x="632" y="1092" width="6" height="16" fill="#6f7d60" opacity="0.65" transform="rotate(-25 632 1092)"/>
<rect x="349" y="1147" width="5" height="18" fill="#84867c" opacity="0.65" transform="rotate(20 349 1147)"/>
<rect x="808" y="813" width="4" height="21" fill="#84867c" opacity="0.65" transform="rotate(60 808 813)"/>
<rect x="810" y="429" width="5" height="17" fill="#72805f" opacity="0.65" transform="rotate(20 810 429)"/>
<rect x="495" y="673" width="5" height="16" fill="#84867c" opacity="0.65" transform="rotate(5 495 673)"/>
<rect x="597" y="294" width="4" height="19" fill="#868678" opacity="0.65" transform="rotate(-5 597 294)"/>
<rect x="513" y="259" width="5" height="15" fill="#6f7d60" opacity="0.65" transform="rotate(20 513 259)"/>
<rect x="533" y="801" width="4" height="16" fill="#82867a" opacity="0.65" transform="rotate(20 533 801)"/>
<rect x="639" y="821" width="3" height="17" fill="#84867c" opacity="0.65" transform="rotate(30 639 821)"/>
<rect x="809" y="415" width="3" height="18" fill="#82867a" opacity="0.65" transform="rotate(5 809 415)"/>
<rect x="713" y="495" width="3" height="18" fill="#6f7d60" opacity="0.65" transform="rotate(20 713 495)"/>
<rect x="711" y="355" width="6" height="17" fill="#7f8873" opacity="0.65" transform="rotate(-60 711 355)"/>
<rect x="839" y="312" width="3" height="7" fill="#6f7d60" opacity="0.65" transform="rotate(-25 839 312)"/>
<rect x="472" y="665" width="6" height="21" fill="#7f8873" opacity="0.65" transform="rotate(-30 472 665)"/>
<rect x="421" y="1530" width="7" height="14" fill="#82867a" opacity="0.65" transform="rotate(20 421 1530)"/>
<rect x="876" y="399" width="8" height="9" fill="#7f8873" opacity="0.65" transform="rotate(5 876 399)"/>
<rect x="470" y="1309" width="8" height="19" fill="#868678" opacity="0.65" transform="rotate(60 470 1309)"/>
<rect x="405" y="322" width="8" height="17" fill="#868678" opacity="0.65" transform="rotate(60 405 322)"/>
<rect x="809" y="1227" width="3" height="8" fill="#72805f" opacity="0.65" transform="rotate(-5 809 1227)"/>
<rect x="883" y="575" width="5" height="12" fill="#82867a" opacity="0.65" transform="rotate(5 883 575)"/>
<rect x="398" y="242" width="4" height="13" fill="#868678" opacity="0.65" transform="rotate(-30 398 242)"/>
<rect x="402" y="431" width="7" height="22" fill="#82867a" opacity="0.65" transform="rotate(-60 402 431)"/>
<rect x="883" y="1324" width="6" height="18" fill="#7f8873" opacity="0.65" transform="rotate(60 883 1324)"/>
<rect x="574" y="974" width="5" height="12" fill="#6f7d60" opacity="0.65" transform="rotate(30 574 974)"/>
<rect x="417" y="318" width="5" height="17" fill="#72805f" opacity="0.65" transform="rotate(-30 417 318)"/>
<rect x="754" y="865" width="3" height="19" fill="#84867c" opacity="0.65" transform="rotate(30 754 865)"/>
<rect x="479" y="949" width="4" height="19" fill="#72805f" opacity="0.65" transform="rotate(5 479 949)"/>
<rect x="554" y="515" width="4" height="7" fill="#6f7d60" opacity="0.65" transform="rotate(-60 554 515)"/>
<rect x="454" y="1008" width="5" height="14" fill="#82867a" opacity="0.65" transform="rotate(30 454 1008)"/>
<rect x="231" y="1596" width="5" height="8" fill="#6f7d60" opacity="0.65" transform="rotate(5 231 1596)"/>
<rect x="751" y="452" width="6" height="12" fill="#868678" opacity="0.65" transform="rotate(-30 751 452)"/>
<rect x="266" y="518" width="7" height="15" fill="#868678" opacity="0.65" transform="rotate(30 266 518)"/>
<rect x="383" y="1300" width="5" height="21" fill="#868678" opacity="0.65" transform="rotate(20 383 1300)"/>
<rect x="378" y="292" width="4" height="9" fill="#84867c" opacity="0.65" transform="rotate(-30 378 292)"/>
<rect x="236" y="998" width="7" height="13" fill="#84867c" opacity="0.65" transform="rotate(-5 236 998)"/>
<rect x="846" y="1201" width="3" height="11" fill="#82867a" opacity="0.65" transform="rotate(-25 846 1201)"/>
<rect x="869" y="1151" width="5" height="13" fill="#82867a" opacity="0.65" transform="rotate(60 869 1151)"/>
<rect x="876" y="1589" width="4" height="7" fill="#72805f" opacity="0.65" transform="rotate(60 876 1589)"/>
<rect x="241" y="992" width="3" height="21" fill="#72805f" opacity="0.65" transform="rotate(5 241 992)"/>
<rect x="239" y="437" width="7" height="21" fill="#6f7d60" opacity="0.65" transform="rotate(-60 239 437)"/>
<rect x="613" y="840" width="6" height="14" fill="#72805f" opacity="0.65" transform="rotate(-60 613 840)"/>
<rect x="473" y="750" width="5" height="13" fill="#82867a" opacity="0.65" transform="rotate(-30 473 750)"/>
<rect x="528" y="1481" width="7" height="9" fill="#82867a" opacity="0.65" transform="rotate(-25 528 1481)"/>
<rect x="854" y="1419" width="7" height="8" fill="#7f8873" opacity="0.65" transform="rotate(-25 854 1419)"/>
<rect x="848" y="764" width="3" height="7" fill="#72805f" opacity="0.65" transform="rotate(60 848 764)"/>
<rect x="776" y="889" width="6" height="8" fill="#82867a" opacity="0.65" transform="rotate(-30 776 889)"/>
<rect x="326" y="854" width="7" height="13" fill="#82867a" opacity="0.65" transform="rotate(-60 326 854)"/>
<rect x="493" y="576" width="3" height="15" fill="#72805f" opacity="0.65" transform="rotate(60 493 576)"/>
<rect x="763" y="595" width="4" height="13" fill="#7f8873" opacity="0.65" transform="rotate(-25 763 595)"/>
<rect x="307" y="938" width="6" height="19" fill="#82867a" opacity="0.65" transform="rotate(5 307 938)"/>
<rect x="785" y="402" width="7" height="22" fill="#7f8873" opacity="0.65" transform="rotate(-60 785 402)"/>
<rect x="899" y="1498" width="3" height="11" fill="#82867a" opacity="0.65" transform="rotate(-30 899 1498)"/>
<rect x="783" y="1571" width="4" height="16" fill="#7f8873" opacity="0.65" transform="rotate(60 783 1571)"/>
<rect x="558" y="842" width="7" height="21" fill="#72805f" opacity="0.65" transform="rotate(20 558 842)"/>
<rect x="452" y="295" width="5" height="10" fill="#82867a" opacity="0.65" transform="rotate(20 452 295)"/>
<rect x="790" y="949" width="4" height="9" fill="#868678" opacity="0.65" transform="rotate(-25 790 949)"/>
<rect x="780" y="1449" width="7" height="18" fill="#82867a" opacity="0.65" transform="rotate(30 780 1449)"/>
<rect x="296" y="1151" width="6" height="9" fill="#72805f" opacity="0.65" transform="rotate(30 296 1151)"/>
<rect x="207" y="1181" width="6" height="19" fill="#84867c" opacity="0.65" transform="rotate(60 207 1181)"/>
<rect x="435" y="1385" width="7" height="14" fill="#84867c" opacity="0.65" transform="rotate(-5 435 1385)"/>
<rect x="837" y="888" width="7" height="10" fill="#82867a" opacity="0.65" transform="rotate(60 837 888)"/>
<rect x="226" y="1195" width="6" height="20" fill="#72805f" opacity="0.65" transform="rotate(5 226 1195)"/>
<rect x="878" y="337" width="5" height="10" fill="#72805f" opacity="0.65" transform="rotate(-5 878 337)"/>
<rect x="603" y="1461" width="4" height="8" fill="#6f7d60" opacity="0.65" transform="rotate(5 603 1461)"/>
<rect x="513" y="275" width="7" height="8" fill="#82867a" opacity="0.65" transform="rotate(-25 513 275)"/>
<rect x="357" y="488" width="4" height="10" fill="#84867c" opacity="0.65" transform="rotate(-30 357 488)"/>
<rect x="268" y="1191" width="4" height="6" fill="#868678" opacity="0.65" transform="rotate(5 268 1191)"/>
<rect x="566" y="1196" width="4" height="20" fill="#6f7d60" opacity="0.65" transform="rotate(20 566 1196)"/>
<rect x="232" y="407" width="5" height="14" fill="#72805f" opacity="0.65" transform="rotate(-25 232 407)"/>
<rect x="285" y="792" width="4" height="15" fill="#82867a" opacity="0.65" transform="rotate(20 285 792)"/>
<rect x="668" y="868" width="5" height="21" fill="#84867c" opacity="0.65" transform="rotate(-5 668 868)"/>
<rect x="686" y="1052" width="6" height="7" fill="#84867c" opacity="0.65" transform="rotate(60 686 1052)"/>
<rect x="437" y="567" width="5" height="13" fill="#868678" opacity="0.65" transform="rotate(60 437 567)"/>
<rect x="771" y="1393" width="3" height="14" fill="#6f7d60" opacity="0.65" transform="rotate(60 771 1393)"/>
<rect x="374" y="814" width="6" height="12" fill="#868678" opacity="0.65" transform="rotate(20 374 814)"/>
<rect x="248" y="829" width="6" height="6" fill="#82867a" opacity="0.65" transform="rotate(-5 248 829)"/>
<rect x="879" y="1296" width="8" height="16" fill="#84867c" opacity="0.65" transform="rotate(-30 879 1296)"/>
<rect x="806" y="1084" width="8" height="16" fill="#6f7d60" opacity="0.65" transform="rotate(-30 806 1084)"/>
<rect x="635" y="581" width="6" height="13" fill="#84867c" opacity="0.65" transform="rotate(-60 635 581)"/>
<rect x="279" y="713" width="4" height="7" fill="#868678" opacity="0.65" transform="rotate(-60 279 713)"/>
<rect x="259" y="1043" width="8" height="13" fill="#868678" opacity="0.65" transform="rotate(20 259 1043)"/>
<rect x="820" y="1485" width="6" height="10" fill="#6f7d60" opacity="0.65" transform="rotate(-25 820 1485)"/>
<rect x="718" y="631" width="5" height="17" fill="#82867a" opacity="0.65" transform="rotate(-5 718 631)"/>
<rect x="341" y="1206" width="5" height="15" fill="#868678" opacity="0.65" transform="rotate(5 341 1206)"/>
<rect x="528" y="662" width="4" height="10" fill="#868678" opacity="0.65" transform="rotate(-5 528 662)"/>
<rect x="879" y="779" width="8" height="9" fill="#82867a" opacity="0.65" transform="rotate(60 879 779)"/>
<rect x="590" y="908" width="4" height="22" fill="#72805f" opacity="0.65" transform="rotate(-30 590 908)"/>
<rect x="740" y="456" width="3" height="20" fill="#7f8873" opacity="0.65" transform="rotate(-30 740 456)"/>
<rect x="562" y="1375" width="5" height="18" fill="#868678" opacity="0.65" transform="rotate(30 562 1375)"/>
<rect x="893" y="1162" width="8" height="13" fill="#6f7d60" opacity="0.65" transform="rotate(60 893 1162)"/>
<rect x="298" y="515" width="6" height="10" fill="#868678" opacity="0.65" transform="rotate(-25 298 515)"/>
<rect x="717" y="1251" width="7" height="14" fill="#6f7d60" opacity="0.65" transform="rotate(20 717 1251)"/>
<rect x="489" y="381" width="5" height="15" fill="#84867c" opacity="0.65" transform="rotate(5 489 381)"/>
<rect x="478" y="1590" width="4" height="20" fill="#72805f" opacity="0.65" transform="rotate(-25 478 1590)"/>
<rect x="466" y="855" width="5" height="18" fill="#72805f" opacity="0.65" transform="rotate(60 466 855)"/>
<rect x="473" y="995" width="5" height="11" fill="#6f7d60" opacity="0.65" transform="rotate(5 473 995)"/>
<rect x="466" y="648" width="6" height="19" fill="#7f8873" opacity="0.65" transform="rotate(-5 466 648)"/>
<rect x="607" y="360" width="8" height="11" fill="#868678" opacity="0.65" transform="rotate(30 607 360)"/>
<rect x="871" y="518" width="5" height="21" fill="#84867c" opacity="0.65" transform="rotate(-30 871 518)"/>
<rect x="233" y="1008" width="5" height="21" fill="#72805f" opacity="0.65" transform="rotate(-5 233 1008)"/>
<rect x="562" y="943" width="6" height="12" fill="#72805f" opacity="0.65" transform="rotate(-30 562 943)"/>
<rect x="616" y="718" width="8" height="17" fill="#868678" opacity="0.65" transform="rotate(30 616 718)"/>
<rect x="269" y="749" width="5" height="15" fill="#868678" opacity="0.65" transform="rotate(20 269 749)"/>
<rect x="816" y="1552" width="5" height="13" fill="#868678" opacity="0.65" transform="rotate(60 816 1552)"/>
<rect x="684" y="1255" width="3" height="12" fill="#72805f" opacity="0.65" transform="rotate(-25 684 1255)"/>
<rect x="778" y="937" width="4" height="20" fill="#6f7d60" opacity="0.65" transform="rotate(60 778 937)"/>
<rect x="774" y="1587" width="7" height="13" fill="#82867a" opacity="0.65" transform="rotate(-60 774 1587)"/>
<rect x="771" y="523" width="7" height="13" fill="#84867c" opacity="0.65" transform="rotate(-25 771 523)"/>
<rect x="447" y="1591" width="6" height="7" fill="#7f8873" opacity="0.65" transform="rotate(-30 447 1591)"/>
<rect x="751" y="657" width="6" height="6" fill="#72805f" opacity="0.65" transform="rotate(-5 751 657)"/>
<rect x="790" y="1037" width="6" height="9" fill="#7f8873" opacity="0.65" transform="rotate(-60 790 1037)"/>
<rect x="810" y="1458" width="6" height="8" fill="#82867a" opacity="0.65" transform="rotate(-5 810 1458)"/>
<rect x="621" y="438" width="6" height="14" fill="#84867c" opacity="0.65" transform="rotate(-25 621 438)"/>
<rect x="253" y="1529" width="5" height="13" fill="#7f8873" opacity="0.65" transform="rotate(-30 253 1529)"/>
<rect x="655" y="1171" width="6" height="8" fill="#82867a" opacity="0.65" transform="rotate(60 655 1171)"/>
<rect x="393" y="285" width="6" height="20" fill="#868678" opacity="0.65" transform="rotate(-25 393 285)"/>
<rect x="444" y="852" width="5" height="7" fill="#7f8873" opacity="0.65" transform="rotate(-30 444 852)"/>
<rect x="508" y="1083" width="4" height="7" fill="#868678" opacity="0.65" transform="rotate(20 508 1083)"/>
<rect x="420" y="1462" width="7" height="11" fill="#868678" opacity="0.65" transform="rotate(-60 420 1462)"/>
<rect x="872" y="914" width="8" height="10" fill="#7f8873" opacity="0.65" transform="rotate(30 872 914)"/>
<rect x="489" y="782" width="7" height="6" fill="#82867a" opacity="0.65" transform="rotate(-25 489 782)"/>
<rect x="321" y="727" width="4" height="22" fill="#72805f" opacity="0.65" transform="rotate(-5 321 727)"/>
<rect x="593" y="396" width="6" height="12" fill="#7f8873" opacity="0.65" transform="rotate(-25 593 396)"/>
<rect x="873" y="814" width="8" height="15" fill="#7f8873" opacity="0.65" transform="rotate(30 873 814)"/>
<rect x="527" y="708" width="5" height="10" fill="#84867c" opacity="0.65" transform="rotate(60 527 708)"/>
<rect x="763" y="569" width="4" height="9" fill="#868678" opacity="0.65" transform="rotate(20 763 569)"/>
<rect x="588" y="875" width="7" height="10" fill="#72805f" opacity="0.65" transform="rotate(60 588 875)"/>
<rect x="352" y="791" width="6" height="15" fill="#72805f" opacity="0.65" transform="rotate(5 352 791)"/>
<rect x="553" y="549" width="5" height="8" fill="#6f7d60" opacity="0.65" transform="rotate(-60 553 549)"/>
<rect x="617" y="839" width="8" height="15" fill="#7f8873" opacity="0.65" transform="rotate(30 617 839)"/>
<rect x="288" y="1261" width="6" height="7" fill="#72805f" opacity="0.65" transform="rotate(-5 288 1261)"/>
<rect x="220" y="1217" width="4" height="6" fill="#6f7d60" opacity="0.65" transform="rotate(-25 220 1217)"/>
<rect x="686" y="1296" width="4" height="9" fill="#84867c" opacity="0.65" transform="rotate(-25 686 1296)"/>
<rect x="593" y="732" width="6" height="11" fill="#84867c" opacity="0.65" transform="rotate(-60 593 732)"/>
<rect x="262" y="632" width="7" height="12" fill="#72805f" opacity="0.65" transform="rotate(-5 262 632)"/>
<rect x="791" y="872" width="6" height="16" fill="#82867a" opacity="0.65" transform="rotate(-60 791 872)"/>
<rect x="323" y="739" width="7" height="17" fill="#7f8873" opacity="0.65" transform="rotate(-30 323 739)"/>
<rect x="661" y="1191" width="4" height="20" fill="#72805f" opacity="0.65" transform="rotate(-25 661 1191)"/>
<rect x="327" y="397" width="8" height="18" fill="#6f7d60" opacity="0.65" transform="rotate(-30 327 397)"/>
<rect x="483" y="1068" width="5" height="18" fill="#82867a" opacity="0.65" transform="rotate(-5 483 1068)"/>
<rect x="717" y="991" width="6" height="21" fill="#868678" opacity="0.65" transform="rotate(30 717 991)"/>
<rect x="599" y="1215" width="4" height="13" fill="#6f7d60" opacity="0.65" transform="rotate(60 599 1215)"/>
<rect x="855" y="392" width="7" height="16" fill="#84867c" opacity="0.65" transform="rotate(-30 855 392)"/>
<rect x="882" y="1166" width="3" height="11" fill="#72805f" opacity="0.65" transform="rotate(-25 882 1166)"/>
<rect x="492" y="1252" width="8" height="16" fill="#82867a" opacity="0.65" transform="rotate(-60 492 1252)"/>
<rect x="569" y="715" width="8" height="13" fill="#72805f" opacity="0.65" transform="rotate(5 569 715)"/>
<rect x="556" y="1160" width="4" height="17" fill="#82867a" opacity="0.65" transform="rotate(5 556 1160)"/>
<rect x="733" y="299" width="7" height="19" fill="#72805f" opacity="0.65" transform="rotate(20 733 299)"/>
<rect x="582" y="1558" width="6" height="15" fill="#82867a" opacity="0.65" transform="rotate(-30 582 1558)"/>
<rect x="318" y="712" width="3" height="16" fill="#82867a" opacity="0.65" transform="rotate(20 318 712)"/>
<rect x="680" y="902" width="5" height="17" fill="#84867c" opacity="0.65" transform="rotate(5 680 902)"/>
<rect x="293" y="1112" width="6" height="8" fill="#6f7d60" opacity="0.65" transform="rotate(20 293 1112)"/>
<rect x="611" y="567" width="6" height="8" fill="#7f8873" opacity="0.65" transform="rotate(20 611 567)"/>
<rect x="674" y="451" width="8" height="19" fill="#7f8873" opacity="0.65" transform="rotate(30 674 451)"/>
<rect x="280" y="634" width="5" height="9" fill="#84867c" opacity="0.65" transform="rotate(-60 280 634)"/>
<rect x="413" y="390" width="5" height="21" fill="#82867a" opacity="0.65" transform="rotate(60 413 390)"/>
<rect x="512" y="1014" width="4" height="15" fill="#84867c" opacity="0.65" transform="rotate(-30 512 1014)"/>
<rect x="528" y="1573" width="5" height="18" fill="#72805f" opacity="0.65" transform="rotate(-60 528 1573)"/>
<rect x="276" y="905" width="5" height="9" fill="#868678" opacity="0.65" transform="rotate(60 276 905)"/>
<rect x="206" y="1491" width="6" height="16" fill="#6f7d60" opacity="0.65" transform="rotate(-60 206 1491)"/>
<rect x="657" y="346" width="7" height="6" fill="#7f8873" opacity="0.65" transform="rotate(20 657 346)"/>
<rect x="407" y="493" width="6" height="20" fill="#6f7d60" opacity="0.65" transform="rotate(20 407 493)"/>
<rect x="272" y="1218" width="5" height="16" fill="#7f8873" opacity="0.65" transform="rotate(20 272 1218)"/>
<rect x="653" y="724" width="4" height="8" fill="#72805f" opacity="0.65" transform="rotate(-60 653 724)"/>
<rect x="368" y="296" width="6" height="16" fill="#6f7d60" opacity="0.65" transform="rotate(-5 368 296)"/>
<rect x="834" y="1525" width="5" height="14" fill="#82867a" opacity="0.65" transform="rotate(-60 834 1525)"/>
<rect x="622" y="1092" width="4" height="10" fill="#82867a" opacity="0.65" transform="rotate(5 622 1092)"/>
<rect x="646" y="786" width="8" height="20" fill="#7f8873" opacity="0.65" transform="rotate(30 646 786)"/>
<rect x="353" y="747" width="3" height="16" fill="#868678" opacity="0.65" transform="rotate(-5 353 747)"/>
<rect x="300" y="338" width="3" height="17" fill="#72805f" opacity="0.65" transform="rotate(-25 300 338)"/>
<rect x="507" y="1146" width="7" height="20" fill="#82867a" opacity="0.65" transform="rotate(-5 507 1146)"/>
<rect x="407" y="843" width="6" height="12" fill="#82867a" opacity="0.65" transform="rotate(5 407 843)"/>
<rect x="260" y="680" width="5" height="22" fill="#6f7d60" opacity="0.65" transform="rotate(20 260 680)"/>
<rect x="882" y="1548" width="6" height="19" fill="#84867c" opacity="0.65" transform="rotate(60 882 1548)"/>
<rect x="626" y="644" width="6" height="21" fill="#7f8873" opacity="0.65" transform="rotate(20 626 644)"/>
<rect x="410" y="707" width="7" height="6" fill="#82867a" opacity="0.65" transform="rotate(30 410 707)"/>
<rect x="675" y="848" width="3" height="17" fill="#72805f" opacity="0.65" transform="rotate(-5 675 848)"/>
<rect x="452" y="567" width="5" height="10" fill="#82867a" opacity="0.65" transform="rotate(20 452 567)"/>
<rect x="878" y="516" width="7" height="10" fill="#72805f" opacity="0.65" transform="rotate(-25 878 516)"/>
<rect x="331" y="1152" width="7" height="10" fill="#7f8873" opacity="0.65" transform="rotate(30 331 1152)"/>
<rect x="579" y="1188" width="7" height="21" fill="#868678" opacity="0.65" transform="rotate(-25 579 1188)"/>
<rect x="796" y="1164" width="7" height="8" fill="#868678" opacity="0.65" transform="rotate(-25 796 1164)"/>
<rect x="639" y="1546" width="6" height="13" fill="#6f7d60" opacity="0.65" transform="rotate(-5 639 1546)"/>
<rect x="581" y="1556" width="4" height="14" fill="#84867c" opacity="0.65" transform="rotate(20 581 1556)"/>
<rect x="461" y="1082" width="5" height="7" fill="#84867c" opacity="0.65" transform="rotate(-30 461 1082)"/>
<rect x="691" y="1540" width="5" height="8" fill="#82867a" opacity="0.65" transform="rotate(-5 691 1540)"/>
<rect x="836" y="359" width="8" height="9" fill="#84867c" opacity="0.65" transform="rotate(60 836 359)"/>
<rect x="318" y="1254" width="5" height="18" fill="#6f7d60" opacity="0.65" transform="rotate(-30 318 1254)"/>
<rect x="778" y="407" width="5" height="18" fill="#72805f" opacity="0.65" transform="rotate(5 778 407)"/>
<rect x="230" y="1061" width="3" height="15" fill="#868678" opacity="0.65" transform="rotate(-25 230 1061)"/>
<rect x="224" y="1478" width="4" height="12" fill="#6f7d60" opacity="0.65" transform="rotate(5 224 1478)"/>
<rect x="215" y="1585" width="5" height="19" fill="#7f8873" opacity="0.65" transform="rotate(-25 215 1585)"/>
<rect x="252" y="591" width="4" height="21" fill="#6f7d60" opacity="0.65" transform="rotate(-5 252 591)"/>
<rect x="785" y="1040" width="4" height="22" fill="#72805f" opacity="0.65" transform="rotate(5 785 1040)"/>
<rect x="210" y="706" width="4" height="14" fill="#84867c" opacity="0.65" transform="rotate(-30 210 706)"/>
<rect x="252" y="1084" width="6" height="16" fill="#7f8873" opacity="0.65" transform="rotate(20 252 1084)"/>
<rect x="685" y="850" width="4" height="21" fill="#868678" opacity="0.65" transform="rotate(-25 685 850)"/>
<rect x="453" y="958" width="5" height="8" fill="#868678" opacity="0.65" transform="rotate(-30 453 958)"/>
<rect x="348" y="1354" width="7" height="11" fill="#7f8873" opacity="0.65" transform="rotate(-5 348 1354)"/>
<rect x="856" y="668" width="5" height="14" fill="#82867a" opacity="0.65" transform="rotate(-30 856 668)"/>
<rect x="374" y="1432" width="6" height="16" fill="#6f7d60" opacity="0.65" transform="rotate(20 374 1432)"/>
<rect x="391" y="612" width="6" height="10" fill="#868678" opacity="0.65" transform="rotate(20 391 612)"/>
<rect x="895" y="286" width="6" height="18" fill="#82867a" opacity="0.65" transform="rotate(-5 895 286)"/>
<rect x="643" y="1103" width="5" height="11" fill="#82867a" opacity="0.65" transform="rotate(20 643 1103)"/>
<rect x="677" y="653" width="7" height="18" fill="#868678" opacity="0.65" transform="rotate(30 677 653)"/>
<rect x="445" y="989" width="5" height="7" fill="#72805f" opacity="0.65" transform="rotate(60 445 989)"/>
<rect x="819" y="1304" width="6" height="20" fill="#82867a" opacity="0.65" transform="rotate(60 819 1304)"/>
<rect x="306" y="519" width="7" height="17" fill="#7f8873" opacity="0.65" transform="rotate(5 306 519)"/>
<rect x="477" y="1290" width="8" height="15" fill="#82867a" opacity="0.65" transform="rotate(-60 477 1290)"/>
<rect x="704" y="583" width="6" height="17" fill="#72805f" opacity="0.65" transform="rotate(-25 704 583)"/>
<rect x="845" y="1033" width="3" height="9" fill="#868678" opacity="0.65" transform="rotate(60 845 1033)"/>
<rect x="891" y="725" width="7" height="13" fill="#84867c" opacity="0.65" transform="rotate(5 891 725)"/>
<rect x="423" y="478" width="7" height="15" fill="#82867a" opacity="0.65" transform="rotate(-60 423 478)"/>
<rect x="366" y="267" width="3" height="13" fill="#868678" opacity="0.65" transform="rotate(-60 366 267)"/>
<rect x="805" y="1121" width="4" height="18" fill="#82867a" opacity="0.65" transform="rotate(-30 805 1121)"/>
<rect x="256" y="1341" width="7" height="11" fill="#82867a" opacity="0.65" transform="rotate(-30 256 1341)"/>
<rect x="332" y="970" width="7" height="16" fill="#84867c" opacity="0.65" transform="rotate(30 332 970)"/>
<rect x="425" y="1420" width="3" height="14" fill="#868678" opacity="0.65" transform="rotate(60 425 1420)"/>
<rect x="322" y="1414" width="7" height="7" fill="#868678" opacity="0.65" transform="rotate(60 322 1414)"/>
<rect x="743" y="1583" width="5" height="21" fill="#84867c" opacity="0.65" transform="rotate(-30 743 1583)"/>
<rect x="848" y="1007" width="8" height="7" fill="#868678" opacity="0.65" transform="rotate(60 848 1007)"/>
<rect x="310" y="265" width="4" height="14" fill="#84867c" opacity="0.65" transform="rotate(60 310 265)"/>
<rect x="770" y="816" width="6" height="15" fill="#868678" opacity="0.65" transform="rotate(20 770 816)"/>
<rect x="660" y="1058" width="5" height="18" fill="#72805f" opacity="0.65" transform="rotate(5 660 1058)"/>
<rect x="734" y="1295" width="5" height="18" fill="#6f7d60" opacity="0.65" transform="rotate(5 734 1295)"/>
<rect x="592" y="731" width="6" height="10" fill="#72805f" opacity="0.65" transform="rotate(-30 592 731)"/>
<rect x="591" y="376" width="7" height="22" fill="#82867a" opacity="0.65" transform="rotate(30 591 376)"/>
<rect x="481" y="1572" width="8" height="16" fill="#84867c" opacity="0.65" transform="rotate(-30 481 1572)"/>
<rect x="580" y="519" width="7" height="10" fill="#868678" opacity="0.65" transform="rotate(60 580 519)"/>
<rect x="716" y="1468" width="7" height="20" fill="#82867a" opacity="0.65" transform="rotate(-30 716 1468)"/>
<rect x="446" y="1205" width="5" height="20" fill="#82867a" opacity="0.65" transform="rotate(60 446 1205)"/>
<rect x="831" y="769" width="4" height="19" fill="#84867c" opacity="0.65" transform="rotate(-25 831 769)"/>
<rect x="662" y="261" width="7" height="21" fill="#6f7d60" opacity="0.65" transform="rotate(60 662 261)"/>
<rect x="242" y="1007" width="5" height="21" fill="#6f7d60" opacity="0.65" transform="rotate(30 242 1007)"/>
<rect x="221" y="268" width="7" height="10" fill="#72805f" opacity="0.65" transform="rotate(30 221 268)"/>
<rect x="428" y="819" width="4" height="20" fill="#7f8873" opacity="0.65" transform="rotate(30 428 819)"/>
<rect x="887" y="1316" width="5" height="21" fill="#72805f" opacity="0.65" transform="rotate(20 887 1316)"/>
<rect x="776" y="624" width="5" height="14" fill="#82867a" opacity="0.65" transform="rotate(20 776 624)"/>
<rect x="424" y="1070" width="8" height="9" fill="#84867c" opacity="0.65" transform="rotate(30 424 1070)"/>
<rect x="796" y="1240" width="3" height="18" fill="#7f8873" opacity="0.65" transform="rotate(20 796 1240)"/>
<rect x="504" y="430" width="8" height="17" fill="#84867c" opacity="0.65" transform="rotate(20 504 430)"/>
<rect x="882" y="253" width="8" height="8" fill="#6f7d60" opacity="0.65" transform="rotate(60 882 253)"/>
<rect x="268" y="469" width="6" height="7" fill="#72805f" opacity="0.65" transform="rotate(-5 268 469)"/>
<rect x="817" y="1572" width="3" height="10" fill="#6f7d60" opacity="0.65" transform="rotate(-30 817 1572)"/>
<rect x="227" y="927" width="4" height="13" fill="#84867c" opacity="0.65" transform="rotate(-30 227 927)"/>
<rect x="234" y="1456" width="3" height="8" fill="#7f8873" opacity="0.65" transform="rotate(20 234 1456)"/>
<rect x="568" y="243" width="4" height="15" fill="#6f7d60" opacity="0.65" transform="rotate(-25 568 243)"/>
<rect x="571" y="1382" width="8" height="7" fill="#82867a" opacity="0.65" transform="rotate(30 571 1382)"/>
<rect x="712" y="611" width="4" height="10" fill="#84867c" opacity="0.65" transform="rotate(-30 712 611)"/>
<rect x="338" y="305" width="7" height="21" fill="#72805f" opacity="0.65" transform="rotate(-30 338 305)"/>
<rect x="428" y="296" width="5" height="11" fill="#72805f" opacity="0.65" transform="rotate(-5 428 296)"/>
<rect x="888" y="1429" width="7" height="12" fill="#72805f" opacity="0.65" transform="rotate(-5 888 1429)"/>
<rect x="468" y="446" width="7" height="20" fill="#82867a" opacity="0.65" transform="rotate(-30 468 446)"/>
<rect x="367" y="921" width="8" height="17" fill="#6f7d60" opacity="0.65" transform="rotate(-5 367 921)"/>
<rect x="894" y="1363" width="6" height="7" fill="#868678" opacity="0.65" transform="rotate(-30 894 1363)"/>
<rect x="836" y="307" width="6" height="11" fill="#6f7d60" opacity="0.65" transform="rotate(5 836 307)"/>
<rect x="584" y="669" width="8" height="6" fill="#6f7d60" opacity="0.65" transform="rotate(5 584 669)"/>
<rect x="557" y="1046" width="8" height="10" fill="#6f7d60" opacity="0.65" transform="rotate(-5 557 1046)"/>
<rect x="449" y="327" width="8" height="10" fill="#6f7d60" opacity="0.65" transform="rotate(60 449 327)"/>
<rect x="250" y="1324" width="6" height="21" fill="#72805f" opacity="0.65" transform="rotate(-60 250 1324)"/>
<rect x="836" y="884" width="7" height="14" fill="#7f8873" opacity="0.65" transform="rotate(30 836 884)"/>
<rect x="900" y="330" width="7" height="12" fill="#82867a" opacity="0.65" transform="rotate(20 900 330)"/>
<rect x="769" y="565" width="4" height="19" fill="#7f8873" opacity="0.65" transform="rotate(20 769 565)"/>
<rect x="648" y="1365" width="7" height="20" fill="#84867c" opacity="0.65" transform="rotate(60 648 1365)"/>
<rect x="467" y="1372" width="7" height="8" fill="#82867a" opacity="0.65" transform="rotate(-60 467 1372)"/>
<rect x="463" y="736" width="6" height="14" fill="#72805f" opacity="0.65" transform="rotate(5 463 736)"/>
<rect x="664" y="614" width="4" height="13" fill="#84867c" opacity="0.65" transform="rotate(5 664 614)"/>
<rect x="644" y="1234" width="4" height="14" fill="#84867c" opacity="0.65" transform="rotate(20 644 1234)"/>
<rect x="457" y="948" width="4" height="12" fill="#72805f" opacity="0.65" transform="rotate(-5 457 948)"/>
<rect x="377" y="996" width="3" height="10" fill="#868678" opacity="0.65" transform="rotate(20 377 996)"/>
<rect x="415" y="981" width="8" height="10" fill="#72805f" opacity="0.65" transform="rotate(5 415 981)"/>
<rect x="264" y="1105" width="7" height="9" fill="#7f8873" opacity="0.65" transform="rotate(-60 264 1105)"/>
<rect x="633" y="745" width="3" height="13" fill="#72805f" opacity="0.65" transform="rotate(-30 633 745)"/>
<rect x="699" y="642" width="5" height="16" fill="#72805f" opacity="0.65" transform="rotate(60 699 642)"/>
<rect x="367" y="1396" width="4" height="16" fill="#6f7d60" opacity="0.65" transform="rotate(60 367 1396)"/>
<rect x="244" y="516" width="7" height="7" fill="#7f8873" opacity="0.65" transform="rotate(-5 244 516)"/>
<rect x="475" y="804" width="8" height="16" fill="#84867c" opacity="0.65" transform="rotate(-25 475 804)"/>
<rect x="615" y="869" width="5" height="19" fill="#7f8873" opacity="0.65" transform="rotate(5 615 869)"/>
<rect x="323" y="329" width="5" height="8" fill="#84867c" opacity="0.65" transform="rotate(30 323 329)"/>
<rect x="718" y="786" width="3" height="17" fill="#868678" opacity="0.65" transform="rotate(60 718 786)"/>
<rect x="738" y="1287" width="4" height="10" fill="#84867c" opacity="0.65" transform="rotate(-30 738 1287)"/>
<rect x="271" y="360" width="7" height="15" fill="#84867c" opacity="0.65" transform="rotate(30 271 360)"/>
<rect x="698" y="897" width="3" height="17" fill="#7f8873" opacity="0.65" transform="rotate(20 698 897)"/>
<rect x="899" y="1351" width="7" height="8" fill="#72805f" opacity="0.65" transform="rotate(30 899 1351)"/>
<rect x="563" y="248" width="8" height="10" fill="#72805f" opacity="0.65" transform="rotate(-25 563 248)"/>
<rect x="419" y="587" width="7" height="15" fill="#868678" opacity="0.65" transform="rotate(-5 419 587)"/>
<rect x="677" y="657" width="4" height="12" fill="#7f8873" opacity="0.65" transform="rotate(-60 677 657)"/>
<rect x="413" y="419" width="4" height="16" fill="#7f8873" opacity="0.65" transform="rotate(5 413 419)"/>
<rect x="697" y="432" width="8" height="11" fill="#7f8873" opacity="0.65" transform="rotate(-30 697 432)"/>
<rect x="710" y="252" width="3" height="21" fill="#72805f" opacity="0.65" transform="rotate(-30 710 252)"/>
<rect x="391" y="1323" width="4" height="17" fill="#868678" opacity="0.65" transform="rotate(5 391 1323)"/>
<rect x="484" y="1230" width="4" height="9" fill="#82867a" opacity="0.65" transform="rotate(-5 484 1230)"/>
<rect x="801" y="409" width="4" height="20" fill="#868678" opacity="0.65" transform="rotate(5 801 409)"/>
<rect x="326" y="1494" width="6" height="19" fill="#7f8873" opacity="0.65" transform="rotate(30 326 1494)"/>
<rect x="672" y="1158" width="4" height="9" fill="#82867a" opacity="0.65" transform="rotate(20 672 1158)"/>
<rect x="744" y="1213" width="6" height="13" fill="#82867a" opacity="0.65" transform="rotate(-25 744 1213)"/>
<rect x="866" y="804" width="6" height="10" fill="#7f8873" opacity="0.65" transform="rotate(-5 866 804)"/>
<rect x="308" y="317" width="6" height="7" fill="#7f8873" opacity="0.65" transform="rotate(-60 308 317)"/>
<rect x="731" y="1430" width="7" height="17" fill="#6f7d60" opacity="0.65" transform="rotate(20 731 1430)"/>
<rect x="417" y="591" width="6" height="9" fill="#6f7d60" opacity="0.65" transform="rotate(30 417 591)"/>
<rect x="474" y="285" width="5" height="16" fill="#82867a" opacity="0.65" transform="rotate(-25 474 285)"/>
<rect x="339" y="443" width="4" height="11" fill="#7f8873" opacity="0.65" transform="rotate(-25 339 443)"/>
<rect x="227" y="718" width="6" height="9" fill="#6f7d60" opacity="0.65" transform="rotate(-25 227 718)"/>
<rect x="404" y="713" width="7" height="14" fill="#84867c" opacity="0.65" transform="rotate(30 404 713)"/>
<rect x="539" y="1415" width="6" height="15" fill="#84867c" opacity="0.65" transform="rotate(30 539 1415)"/>
<rect x="298" y="609" width="7" height="20" fill="#82867a" opacity="0.65" transform="rotate(-60 298 609)"/>
<rect x="223" y="1054" width="8" height="12" fill="#82867a" opacity="0.65" transform="rotate(-60 223 1054)"/>
<rect x="235" y="693" width="5" height="10" fill="#6f7d60" opacity="0.65" transform="rotate(60 235 693)"/>
<rect x="325" y="1311" width="4" height="7" fill="#868678" opacity="0.65" transform="rotate(5 325 1311)"/>
<rect x="267" y="990" width="7" height="16" fill="#7f8873" opacity="0.65" transform="rotate(-30 267 990)"/>
<rect x="224" y="938" width="3" height="16" fill="#82867a" opacity="0.65" transform="rotate(-5 224 938)"/>
<rect x="605" y="720" width="5" height="17" fill="#82867a" opacity="0.65" transform="rotate(60 605 720)"/>
<rect x="319" y="1521" width="5" height="19" fill="#7f8873" opacity="0.65" transform="rotate(-60 319 1521)"/>
<rect x="304" y="368" width="7" height="8" fill="#7f8873" opacity="0.65" transform="rotate(-60 304 368)"/>
<rect x="575" y="400" width="5" height="9" fill="#868678" opacity="0.65" transform="rotate(-30 575 400)"/>
<rect x="555" y="739" width="4" height="12" fill="#82867a" opacity="0.65" transform="rotate(20 555 739)"/>
<rect x="836" y="1228" width="6" height="10" fill="#84867c" opacity="0.65" transform="rotate(-30 836 1228)"/>
<rect x="274" y="313" width="7" height="17" fill="#82867a" opacity="0.65" transform="rotate(30 274 313)"/>
<rect x="261" y="473" width="7" height="22" fill="#7f8873" opacity="0.65" transform="rotate(-5 261 473)"/>
<rect x="637" y="389" width="6" height="8" fill="#6f7d60" opacity="0.65" transform="rotate(30 637 389)"/>
<rect x="364" y="1050" width="7" height="17" fill="#84867c" opacity="0.65" transform="rotate(30 364 1050)"/>
<rect x="251" y="699" width="3" height="9" fill="#6f7d60" opacity="0.65" transform="rotate(20 251 699)"/>
<rect x="770" y="705" width="7" height="13" fill="#82867a" opacity="0.65" transform="rotate(-30 770 705)"/>
<rect x="422" y="1507" width="7" height="7" fill="#82867a" opacity="0.65" transform="rotate(20 422 1507)"/>
<rect x="714" y="1163" width="4" height="12" fill="#82867a" opacity="0.65" transform="rotate(30 714 1163)"/>
<rect x="339" y="539" width="5" height="22" fill="#84867c" opacity="0.65" transform="rotate(5 339 539)"/>
<rect x="226" y="955" width="5" height="7" fill="#868678" opacity="0.65" transform="rotate(-25 226 955)"/>
<rect x="339" y="1090" width="7" height="19" fill="#84867c" opacity="0.65" transform="rotate(60 339 1090)"/>
<rect x="608" y="1333" width="5" height="18" fill="#7f8873" opacity="0.65" transform="rotate(20 608 1333)"/>
<rect x="382" y="1183" width="5" height="7" fill="#7f8873" opacity="0.65" transform="rotate(20 382 1183)"/>
<rect x="505" y="1362" width="7" height="20" fill="#72805f" opacity="0.65" transform="rotate(-25 505 1362)"/>
<rect x="248" y="1305" width="7" height="18" fill="#82867a" opacity="0.65" transform="rotate(30 248 1305)"/>
<rect x="339" y="863" width="4" height="14" fill="#6f7d60" opacity="0.65" transform="rotate(-30 339 863)"/>
<rect x="474" y="1306" width="7" height="17" fill="#72805f" opacity="0.65" transform="rotate(-5 474 1306)"/>
<rect x="484" y="358" width="6" height="19" fill="#72805f" opacity="0.65" transform="rotate(-5 484 358)"/>
<rect x="755" y="246" width="5" height="6" fill="#84867c" opacity="0.65" transform="rotate(5 755 246)"/>
<rect x="493" y="1062" width="5" height="11" fill="#82867a" opacity="0.65" transform="rotate(-25 493 1062)"/>
<rect x="448" y="1389" width="6" height="11" fill="#84867c" opacity="0.65" transform="rotate(-60 448 1389)"/>
<rect x="331" y="1450" width="5" height="15" fill="#82867a" opacity="0.65" transform="rotate(-25 331 1450)"/>
<rect x="351" y="1093" width="5" height="20" fill="#7f8873" opacity="0.65" transform="rotate(-60 351 1093)"/>
<rect x="433" y="445" width="4" height="12" fill="#868678" opacity="0.65" transform="rotate(-5 433 445)"/>
<rect x="416" y="673" width="7" height="19" fill="#868678" opacity="0.65" transform="rotate(30 416 673)"/>
<rect x="800" y="1557" width="5" height="6" fill="#82867a" opacity="0.65" transform="rotate(-25 800 1557)"/>
<rect x="862" y="858" width="7" height="10" fill="#72805f" opacity="0.65" transform="rotate(-25 862 858)"/>
<rect x="889" y="1239" width="7" height="17" fill="#82867a" opacity="0.65" transform="rotate(-60 889 1239)"/>
<rect x="666" y="343" width="6" height="13" fill="#72805f" opacity="0.65" transform="rotate(60 666 343)"/>
<rect x="414" y="1205" width="6" height="21" fill="#6f7d60" opacity="0.65" transform="rotate(-30 414 1205)"/>
<rect x="835" y="917" width="5" height="22" fill="#84867c" opacity="0.65" transform="rotate(-25 835 917)"/>
<rect x="590" y="849" width="7" height="20" fill="#6f7d60" opacity="0.65" transform="rotate(5 590 849)"/>
<rect x="225" y="682" width="4" height="21" fill="#72805f" opacity="0.65" transform="rotate(20 225 682)"/>
<rect x="331" y="1488" width="6" height="22" fill="#82867a" opacity="0.65" transform="rotate(-60 331 1488)"/>
<rect x="639" y="569" width="7" height="6" fill="#868678" opacity="0.65" transform="rotate(-5 639 569)"/>
<rect x="654" y="1335" width="6" height="12" fill="#6f7d60" opacity="0.65" transform="rotate(60 654 1335)"/>
<rect x="684" y="617" width="4" height="15" fill="#84867c" opacity="0.65" transform="rotate(60 684 617)"/>
<rect x="826" y="513" width="7" height="7" fill="#72805f" opacity="0.65" transform="rotate(20 826 513)"/>
<rect x="677" y="1474" width="6" height="22" fill="#72805f" opacity="0.65" transform="rotate(20 677 1474)"/>
<rect x="391" y="1452" width="5" height="16" fill="#7f8873" opacity="0.65" transform="rotate(-5 391 1452)"/>
<rect x="276" y="594" width="5" height="12" fill="#7f8873" opacity="0.65" transform="rotate(-60 276 594)"/>
<rect x="279" y="1499" width="6" height="14" fill="#7f8873" opacity="0.65" transform="rotate(20 279 1499)"/>
<rect x="745" y="668" width="4" height="18" fill="#7f8873" opacity="0.65" transform="rotate(-5 745 668)"/>
<rect x="727" y="615" width="5" height="21" fill="#868678" opacity="0.65" transform="rotate(-60 727 615)"/>
<rect x="796" y="405" width="5" height="6" fill="#868678" opacity="0.65" transform="rotate(-60 796 405)"/>
<rect x="448" y="1518" width="4" height="10" fill="#84867c" opacity="0.65" transform="rotate(-25 448 1518)"/>
<rect x="728" y="1162" width="5" height="19" fill="#84867c" opacity="0.65" transform="rotate(-60 728 1162)"/>
<rect x="316" y="480" width="7" height="18" fill="#84867c" opacity="0.65" transform="rotate(-5 316 480)"/>
<rect x="476" y="1519" width="7" height="11" fill="#7f8873" opacity="0.65" transform="rotate(5 476 1519)"/>
<rect x="764" y="716" width="4" height="20" fill="#868678" opacity="0.65" transform="rotate(-5 764 716)"/>
<rect x="669" y="1466" width="4" height="11" fill="#84867c" opacity="0.65" transform="rotate(-5 669 1466)"/>
<rect x="247" y="244" width="6" height="10" fill="#7f8873" opacity="0.65" transform="rotate(-5 247 244)"/>
<rect x="350" y="1231" width="7" height="17" fill="#82867a" opacity="0.65" transform="rotate(20 350 1231)"/>
<rect x="356" y="1396" width="4" height="8" fill="#72805f" opacity="0.65" transform="rotate(-30 356 1396)"/>
<rect x="720" y="1357" width="6" height="20" fill="#82867a" opacity="0.65" transform="rotate(-5 720 1357)"/>
<rect x="629" y="614" width="3" height="16" fill="#868678" opacity="0.65" transform="rotate(-60 629 614)"/>
<rect x="625" y="1469" width="5" height="12" fill="#868678" opacity="0.65" transform="rotate(-25 625 1469)"/>
<rect x="452" y="1191" width="3" height="19" fill="#72805f" opacity="0.65" transform="rotate(30 452 1191)"/>
<rect x="202" y="1096" width="4" height="10" fill="#84867c" opacity="0.65" transform="rotate(5 202 1096)"/>
<rect x="613" y="1050" width="3" height="15" fill="#7f8873" opacity="0.65" transform="rotate(-25 613 1050)"/>
<rect x="539" y="640" width="8" height="21" fill="#868678" opacity="0.65" transform="rotate(30 539 640)"/>
<rect x="353" y="1319" width="4" height="19" fill="#868678" opacity="0.65" transform="rotate(-30 353 1319)"/>
<rect x="356" y="475" width="7" height="10" fill="#72805f" opacity="0.65" transform="rotate(-25 356 475)"/>
<rect x="868" y="612" width="3" height="8" fill="#7f8873" opacity="0.65" transform="rotate(-5 868 612)"/>
<rect x="358" y="1420" width="8" height="19" fill="#868678" opacity="0.65" transform="rotate(60 358 1420)"/>
<rect x="660" y="582" width="6" height="15" fill="#7f8873" opacity="0.65" transform="rotate(5 660 582)"/>
<rect x="878" y="1437" width="6" height="9" fill="#868678" opacity="0.65" transform="rotate(30 878 1437)"/>
<rect x="278" y="465" width="7" height="7" fill="#868678" opacity="0.65" transform="rotate(-30 278 465)"/>
<rect x="507" y="509" width="7" height="9" fill="#72805f" opacity="0.65" transform="rotate(30 507 509)"/>
<rect x="592" y="1194" width="8" height="18" fill="#84867c" opacity="0.65" transform="rotate(-30 592 1194)"/>
<rect x="244" y="520" width="3" height="20" fill="#6f7d60" opacity="0.65" transform="rotate(-60 244 520)"/>
<rect x="590" y="1094" width="6" height="11" fill="#72805f" opacity="0.65" transform="rotate(-60 590 1094)"/>
<rect x="274" y="1246" width="6" height="13" fill="#84867c" opacity="0.65" transform="rotate(5 274 1246)"/>
<rect x="741" y="706" width="7" height="12" fill="#7f8873" opacity="0.65" transform="rotate(5 741 706)"/>
<rect x="893" y="1480" width="7" height="14" fill="#82867a" opacity="0.65" transform="rotate(-25 893 1480)"/>
<rect x="570" y="582" width="5" height="12" fill="#6f7d60" opacity="0.65" transform="rotate(-30 570 582)"/>
<rect x="856" y="503" width="4" height="19" fill="#868678" opacity="0.65" transform="rotate(-5 856 503)"/>
<rect x="742" y="1227" width="4" height="20" fill="#7f8873" opacity="0.65" transform="rotate(20 742 1227)"/>
<rect x="297" y="391" width="7" height="15" fill="#84867c" opacity="0.65" transform="rotate(-30 297 391)"/>
<rect x="769" y="1564" width="3" height="18" fill="#82867a" opacity="0.65" transform="rotate(-25 769 1564)"/>
<rect x="801" y="700" width="6" height="13" fill="#6f7d60" opacity="0.65" transform="rotate(30 801 700)"/>
<rect x="205" y="518" width="5" height="20" fill="#84867c" opacity="0.65" transform="rotate(20 205 518)"/>
<rect x="861" y="838" width="6" height="21" fill="#6f7d60" opacity="0.65" transform="rotate(5 861 838)"/>
<rect x="733" y="1015" width="7" height="20" fill="#82867a" opacity="0.65" transform="rotate(-5 733 1015)"/>
<rect x="656" y="1412" width="8" height="17" fill="#7f8873" opacity="0.65" transform="rotate(5 656 1412)"/>
<rect x="624" y="401" width="5" height="12" fill="#6f7d60" opacity="0.65" transform="rotate(30 624 401)"/>
<rect x="760" y="1449" width="3" height="15" fill="#6f7d60" opacity="0.65" transform="rotate(30 760 1449)"/>
<rect x="644" y="1249" width="3" height="8" fill="#82867a" opacity="0.65" transform="rotate(-30 644 1249)"/>
<rect x="227" y="306" width="4" height="21" fill="#82867a" opacity="0.65" transform="rotate(-30 227 306)"/>
<rect x="851" y="1109" width="8" height="10" fill="#82867a" opacity="0.65" transform="rotate(5 851 1109)"/>
<rect x="213" y="1270" width="4" height="22" fill="#6f7d60" opacity="0.65" transform="rotate(-25 213 1270)"/>
<rect x="331" y="1338" width="4" height="14" fill="#84867c" opacity="0.65" transform="rotate(-5 331 1338)"/>
<rect x="841" y="243" width="7" height="15" fill="#84867c" opacity="0.65" transform="rotate(-25 841 243)"/>
<rect x="694" y="1140" width="6" height="13" fill="#6f7d60" opacity="0.65" transform="rotate(-30 694 1140)"/>
<rect x="592" y="524" width="4" height="14" fill="#7f8873" opacity="0.65" transform="rotate(30 592 524)"/>
<rect x="286" y="1124" width="4" height="13" fill="#84867c" opacity="0.65" transform="rotate(-25 286 1124)"/>
<rect x="582" y="719" width="3" height="18" fill="#84867c" opacity="0.65" transform="rotate(-25 582 719)"/>
<rect x="457" y="652" width="7" height="8" fill="#868678" opacity="0.65" transform="rotate(60 457 652)"/>
<rect x="738" y="249" width="3" height="8" fill="#6f7d60" opacity="0.65" transform="rotate(30 738 249)"/>
<rect x="564" y="860" width="5" height="16" fill="#6f7d60" opacity="0.65" transform="rotate(30 564 860)"/>
<rect x="841" y="1236" width="7" height="21" fill="#84867c" opacity="0.65" transform="rotate(-30 841 1236)"/>
<rect x="669" y="424" width="8" height="19" fill="#84867c" opacity="0.65" transform="rotate(20 669 424)"/>
<rect x="633" y="639" width="4" height="8" fill="#72805f" opacity="0.65" transform="rotate(60 633 639)"/>
<rect x="220" y="760" width="4" height="9" fill="#6f7d60" opacity="0.65" transform="rotate(5 220 760)"/>
<rect x="734" y="1378" width="8" height="18" fill="#72805f" opacity="0.65" transform="rotate(30 734 1378)"/>
<rect x="209" y="971" width="5" height="15" fill="#72805f" opacity="0.65" transform="rotate(60 209 971)"/>
<rect x="201" y="1289" width="4" height="11" fill="#84867c" opacity="0.65" transform="rotate(20 201 1289)"/>
<rect x="273" y="1363" width="5" height="16" fill="#72805f" opacity="0.65" transform="rotate(-25 273 1363)"/>
<rect x="576" y="1553" width="4" height="14" fill="#6f7d60" opacity="0.65" transform="rotate(30 576 1553)"/>
<rect x="857" y="794" width="8" height="17" fill="#6f7d60" opacity="0.65" transform="rotate(-25 857 794)"/>
<rect x="653" y="537" width="7" height="20" fill="#6f7d60" opacity="0.65" transform="rotate(-60 653 537)"/>
<rect x="502" y="401" width="8" height="16" fill="#868678" opacity="0.65" transform="rotate(20 502 401)"/>
<rect x="683" y="1255" width="7" height="10" fill="#72805f" opacity="0.65" transform="rotate(-30 683 1255)"/>
<rect x="264" y="1418" width="6" height="16" fill="#6f7d60" opacity="0.65" transform="rotate(20 264 1418)"/>
<rect x="659" y="1053" width="6" height="11" fill="#84867c" opacity="0.65" transform="rotate(-25 659 1053)"/>
<rect x="575" y="340" width="3" height="15" fill="#6f7d60" opacity="0.65" transform="rotate(5 575 340)"/>
<rect x="654" y="934" width="7" height="21" fill="#7f8873" opacity="0.65" transform="rotate(20 654 934)"/>
<rect x="830" y="587" width="5" height="17" fill="#82867a" opacity="0.65" transform="rotate(5 830 587)"/>
<rect x="893" y="1434" width="7" height="13" fill="#72805f" opacity="0.65" transform="rotate(30 893 1434)"/>
<rect x="221" y="1367" width="4" height="20" fill="#72805f" opacity="0.65" transform="rotate(60 221 1367)"/>
<rect x="394" y="253" width="4" height="20" fill="#82867a" opacity="0.65" transform="rotate(-60 394 253)"/>
<rect x="663" y="486" width="4" height="8" fill="#84867c" opacity="0.65" transform="rotate(-5 663 486)"/>
<rect x="378" y="361" width="6" height="7" fill="#72805f" opacity="0.65" transform="rotate(-30 378 361)"/>
<rect x="388" y="1506" width="8" height="12" fill="#868678" opacity="0.65" transform="rotate(20 388 1506)"/>
<rect x="297" y="1312" width="4" height="12" fill="#868678" opacity="0.65" transform="rotate(-25 297 1312)"/>
<rect x="811" y="1477" width="4" height="18" fill="#84867c" opacity="0.65" transform="rotate(30 811 1477)"/>
<rect x="654" y="1446" width="7" height="20" fill="#82867a" opacity="0.65" transform="rotate(5 654 1446)"/>
<rect x="384" y="250" width="3" height="12" fill="#72805f" opacity="0.65" transform="rotate(30 384 250)"/>
<rect x="397" y="883" width="5" height="8" fill="#868678" opacity="0.65" transform="rotate(5 397 883)"/>
<rect x="266" y="400" width="5" height="9" fill="#82867a" opacity="0.65" transform="rotate(-5 266 400)"/>
<rect x="508" y="401" width="3" height="12" fill="#7f8873" opacity="0.65" transform="rotate(30 508 401)"/>
<rect x="856" y="995" width="3" height="10" fill="#6f7d60" opacity="0.65" transform="rotate(30 856 995)"/>
<rect x="594" y="1423" width="8" height="20" fill="#84867c" opacity="0.65" transform="rotate(-30 594 1423)"/>
<rect x="861" y="954" width="4" height="9" fill="#72805f" opacity="0.65" transform="rotate(30 861 954)"/>
<rect x="271" y="889" width="5" height="21" fill="#6f7d60" opacity="0.65" transform="rotate(20 271 889)"/>
<rect x="252" y="856" width="5" height="9" fill="#6f7d60" opacity="0.65" transform="rotate(60 252 856)"/>
<rect x="248" y="1197" width="5" height="10" fill="#868678" opacity="0.65" transform="rotate(-30 248 1197)"/>
<rect x="639" y="1344" width="8" height="16" fill="#6f7d60" opacity="0.65" transform="rotate(-30 639 1344)"/>
<rect x="576" y="558" width="5" height="16" fill="#6f7d60" opacity="0.65" transform="rotate(60 576 558)"/>
<rect x="302" y="1333" width="8" height="18" fill="#72805f" opacity="0.65" transform="rotate(20 302 1333)"/>
<rect x="690" y="261" width="5" height="18" fill="#7f8873" opacity="0.65" transform="rotate(30 690 261)"/>
<rect x="795" y="628" width="8" height="19" fill="#72805f" opacity="0.65" transform="rotate(60 795 628)"/>
<rect x="608" y="1518" width="5" height="17" fill="#84867c" opacity="0.65" transform="rotate(60 608 1518)"/>
<rect x="864" y="557" width="5" height="14" fill="#6f7d60" opacity="0.65" transform="rotate(5 864 557)"/>
<rect x="671" y="529" width="8" height="9" fill="#7f8873" opacity="0.65" transform="rotate(30 671 529)"/>
<rect x="417" y="1307" width="4" height="22" fill="#72805f" opacity="0.65" transform="rotate(-30 417 1307)"/>
<rect x="485" y="707" width="6" height="6" fill="#72805f" opacity="0.65" transform="rotate(20 485 707)"/>
<rect x="367" y="1378" width="4" height="19" fill="#868678" opacity="0.65" transform="rotate(5 367 1378)"/>
<rect x="533" y="985" width="5" height="10" fill="#868678" opacity="0.65" transform="rotate(-25 533 985)"/>
<rect x="392" y="806" width="8" height="22" fill="#82867a" opacity="0.65" transform="rotate(60 392 806)"/>
<rect x="821" y="317" width="4" height="9" fill="#868678" opacity="0.65" transform="rotate(5 821 317)"/>
<rect x="753" y="584" width="6" height="10" fill="#82867a" opacity="0.65" transform="rotate(-60 753 584)"/>
<rect x="877" y="1208" width="3" height="13" fill="#84867c" opacity="0.65" transform="rotate(-30 877 1208)"/>
<rect x="833" y="336" width="7" height="9" fill="#82867a" opacity="0.65" transform="rotate(-5 833 336)"/>
<rect x="251" y="753" width="5" height="17" fill="#6f7d60" opacity="0.65" transform="rotate(-25 251 753)"/>
<rect x="512" y="919" width="6" height="17" fill="#72805f" opacity="0.65" transform="rotate(30 512 919)"/>
<rect x="505" y="1045" width="4" height="12" fill="#6f7d60" opacity="0.65" transform="rotate(-60 505 1045)"/>
<rect x="650" y="800" width="8" height="10" fill="#84867c" opacity="0.65" transform="rotate(-30 650 800)"/>
<rect x="637" y="881" width="6" height="19" fill="#84867c" opacity="0.65" transform="rotate(5 637 881)"/>
<rect x="533" y="1162" width="7" height="16" fill="#82867a" opacity="0.65" transform="rotate(5 533 1162)"/>
<rect x="871" y="1309" width="4" height="13" fill="#82867a" opacity="0.65" transform="rotate(-5 871 1309)"/>
<rect x="481" y="422" width="7" height="12" fill="#6f7d60" opacity="0.65" transform="rotate(60 481 422)"/>
<rect x="466" y="912" width="5" height="22" fill="#6f7d60" opacity="0.65" transform="rotate(30 466 912)"/>
<rect x="815" y="394" width="6" height="20" fill="#868678" opacity="0.65" transform="rotate(-5 815 394)"/>
<rect x="652" y="879" width="5" height="11" fill="#868678" opacity="0.65" transform="rotate(60 652 879)"/>
<rect x="442" y="1271" width="5" height="19" fill="#6f7d60" opacity="0.65" transform="rotate(-30 442 1271)"/>
<rect x="674" y="1302" width="5" height="8" fill="#6f7d60" opacity="0.65" transform="rotate(-60 674 1302)"/>
<rect x="785" y="1113" width="6" height="17" fill="#82867a" opacity="0.65" transform="rotate(60 785 1113)"/>
<rect x="736" y="649" width="4" height="19" fill="#868678" opacity="0.65" transform="rotate(5 736 649)"/>
<rect x="795" y="1430" width="6" height="9" fill="#84867c" opacity="0.65" transform="rotate(-5 795 1430)"/>
<rect x="708" y="611" width="3" height="6" fill="#82867a" opacity="0.65" transform="rotate(-25 708 611)"/>
<rect x="687" y="245" width="4" height="10" fill="#6f7d60" opacity="0.65" transform="rotate(30 687 245)"/>
<rect x="214" y="395" width="8" height="22" fill="#82867a" opacity="0.65" transform="rotate(5 214 395)"/>
<rect x="435" y="950" width="5" height="13" fill="#7f8873" opacity="0.65" transform="rotate(-60 435 950)"/>
<rect x="433" y="1501" width="4" height="10" fill="#84867c" opacity="0.65" transform="rotate(-30 433 1501)"/>
<rect x="688" y="598" width="7" height="18" fill="#72805f" opacity="0.65" transform="rotate(5 688 598)"/>
<rect x="299" y="1063" width="8" height="19" fill="#82867a" opacity="0.65" transform="rotate(-5 299 1063)"/>
<rect x="470" y="1215" width="4" height="19" fill="#7f8873" opacity="0.65" transform="rotate(-25 470 1215)"/>
<rect x="246" y="447" width="7" height="13" fill="#7f8873" opacity="0.65" transform="rotate(30 246 447)"/>
<rect x="636" y="1362" width="5" height="13" fill="#84867c" opacity="0.65" transform="rotate(30 636 1362)"/>
<rect x="854" y="533" width="7" height="13" fill="#72805f" opacity="0.65" transform="rotate(-5 854 533)"/>
<rect x="565" y="691" width="3" height="10" fill="#84867c" opacity="0.65" transform="rotate(30 565 691)"/>
<rect x="559" y="528" width="7" height="13" fill="#82867a" opacity="0.65" transform="rotate(20 559 528)"/>
<rect x="343" y="663" width="6" height="10" fill="#82867a" opacity="0.65" transform="rotate(-30 343 663)"/>
<rect x="358" y="1289" width="7" height="17" fill="#6f7d60" opacity="0.65" transform="rotate(-60 358 1289)"/>
<rect x="478" y="951" width="5" height="18" fill="#72805f" opacity="0.65" transform="rotate(-25 478 951)"/>
<rect x="405" y="682" width="4" height="9" fill="#6f7d60" opacity="0.65" transform="rotate(30 405 682)"/>
<rect x="523" y="509" width="4" height="14" fill="#868678" opacity="0.65" transform="rotate(60 523 509)"/>
<rect x="680" y="888" width="5" height="7" fill="#6f7d60" opacity="0.65" transform="rotate(-25 680 888)"/>
<rect x="637" y="835" width="3" height="19" fill="#868678" opacity="0.65" transform="rotate(30 637 835)"/>
<rect x="515" y="1399" width="8" height="13" fill="#6f7d60" opacity="0.65" transform="rotate(60 515 1399)"/>
<rect x="574" y="1300" width="7" height="11" fill="#84867c" opacity="0.65" transform="rotate(-25 574 1300)"/>
<rect x="738" y="359" width="8" height="8" fill="#868678" opacity="0.65" transform="rotate(20 738 359)"/>
<rect x="244" y="1170" width="3" height="17" fill="#6f7d60" opacity="0.65" transform="rotate(60 244 1170)"/>
<rect x="506" y="357" width="5" height="8" fill="#6f7d60" opacity="0.65" transform="rotate(-30 506 357)"/>
<rect x="222" y="1477" width="6" height="14" fill="#6f7d60" opacity="0.65" transform="rotate(-25 222 1477)"/>
<rect x="421" y="1353" width="6" height="13" fill="#82867a" opacity="0.65" transform="rotate(20 421 1353)"/>
<rect x="471" y="1337" width="7" height="12" fill="#82867a" opacity="0.65" transform="rotate(5 471 1337)"/>
<rect x="880" y="399" width="4" height="18" fill="#6f7d60" opacity="0.65" transform="rotate(-5 880 399)"/>
<rect x="531" y="1541" width="6" height="11" fill="#7f8873" opacity="0.65" transform="rotate(-5 531 1541)"/>
<rect x="701" y="1238" width="4" height="9" fill="#7f8873" opacity="0.65" transform="rotate(-25 701 1238)"/>
<rect x="807" y="938" width="7" height="6" fill="#868678" opacity="0.65" transform="rotate(5 807 938)"/>
<rect x="770" y="1186" width="8" height="16" fill="#72805f" opacity="0.65" transform="rotate(20 770 1186)"/>
<rect x="711" y="1394" width="6" height="17" fill="#84867c" opacity="0.65" transform="rotate(-30 711 1394)"/>
<rect x="804" y="1022" width="3" height="18" fill="#868678" opacity="0.65" transform="rotate(-30 804 1022)"/>
<rect x="830" y="1535" width="5" height="20" fill="#72805f" opacity="0.65" transform="rotate(60 830 1535)"/>
<rect x="411" y="1080" width="5" height="11" fill="#82867a" opacity="0.65" transform="rotate(-30 411 1080)"/>
<rect x="837" y="798" width="6" height="20" fill="#82867a" opacity="0.65" transform="rotate(-30 837 798)"/>
<rect x="893" y="1230" width="7" height="19" fill="#72805f" opacity="0.65" transform="rotate(60 893 1230)"/>
<rect x="466" y="1382" width="4" height="15" fill="#72805f" opacity="0.65" transform="rotate(-30 466 1382)"/>
<rect x="442" y="1388" width="7" height="20" fill="#82867a" opacity="0.65" transform="rotate(-30 442 1388)"/>
<rect x="756" y="1386" width="8" height="21" fill="#7f8873" opacity="0.65" transform="rotate(5 756 1386)"/>
<rect x="748" y="1423" width="4" height="11" fill="#82867a" opacity="0.65" transform="rotate(-25 748 1423)"/>
<rect x="270" y="685" width="3" height="19" fill="#82867a" opacity="0.65" transform="rotate(60 270 685)"/>
<rect x="249" y="332" width="7" height="9" fill="#7f8873" opacity="0.65" transform="rotate(-5 249 332)"/>
<rect x="418" y="888" width="5" height="16" fill="#868678" opacity="0.65" transform="rotate(5 418 888)"/>
<rect x="423" y="709" width="7" height="18" fill="#72805f" opacity="0.65" transform="rotate(-25 423 709)"/>
<rect x="620" y="1597" width="7" height="7" fill="#7f8873" opacity="0.65" transform="rotate(-5 620 1597)"/>
<rect x="208" y="1540" width="4" height="9" fill="#868678" opacity="0.65" transform="rotate(60 208 1540)"/>
<rect x="849" y="1136" width="7" height="16" fill="#868678" opacity="0.65" transform="rotate(-30 849 1136)"/>
<rect x="523" y="1014" width="3" height="8" fill="#84867c" opacity="0.65" transform="rotate(20 523 1014)"/>
<rect x="567" y="1356" width="7" height="12" fill="#82867a" opacity="0.65" transform="rotate(-30 567 1356)"/>
<rect x="353" y="1441" width="8" height="13" fill="#7f8873" opacity="0.65" transform="rotate(-25 353 1441)"/>
<rect x="851" y="514" width="5" height="11" fill="#6f7d60" opacity="0.65" transform="rotate(20 851 514)"/>
<rect x="544" y="1263" width="3" height="20" fill="#868678" opacity="0.65" transform="rotate(-5 544 1263)"/>
<rect x="900" y="1003" width="7" height="9" fill="#6f7d60" opacity="0.65" transform="rotate(-25 900 1003)"/>
<rect x="808" y="732" width="8" height="9" fill="#84867c" opacity="0.65" transform="rotate(30 808 732)"/>
<rect x="558" y="1508" width="6" height="8" fill="#6f7d60" opacity="0.65" transform="rotate(5 558 1508)"/>
<rect x="762" y="816" width="6" height="10" fill="#72805f" opacity="0.65" transform="rotate(30 762 816)"/>
<rect x="494" y="938" width="5" height="7" fill="#84867c" opacity="0.65" transform="rotate(60 494 938)"/>
<rect x="832" y="465" width="7" height="15" fill="#82867a" opacity="0.65" transform="rotate(20 832 465)"/>
<rect x="363" y="478" width="7" height="22" fill="#6f7d60" opacity="0.65" transform="rotate(-25 363 478)"/>
<rect x="724" y="1208" width="7" height="10" fill="#7f8873" opacity="0.65" transform="rotate(-30 724 1208)"/>
<rect x="542" y="242" width="7" height="20" fill="#868678" opacity="0.65" transform="rotate(-5 542 242)"/>
<rect x="299" y="866" width="6" height="22" fill="#72805f" opacity="0.65" transform="rotate(-5 299 866)"/>
<rect x="737" y="573" width="4" height="9" fill="#7f8873" opacity="0.65" transform="rotate(60 737 573)"/>
<rect x="633" y="652" width="4" height="9" fill="#84867c" opacity="0.65" transform="rotate(20 633 652)"/>
<rect x="335" y="669" width="6" height="9" fill="#7f8873" opacity="0.65" transform="rotate(5 335 669)"/>
<rect x="738" y="1045" width="5" height="10" fill="#868678" opacity="0.65" transform="rotate(30 738 1045)"/>
<rect x="530" y="932" width="6" height="10" fill="#72805f" opacity="0.65" transform="rotate(-5 530 932)"/>
<rect x="877" y="789" width="5" height="13" fill="#72805f" opacity="0.65" transform="rotate(-5 877 789)"/>
<rect x="652" y="873" width="7" height="15" fill="#84867c" opacity="0.65" transform="rotate(5 652 873)"/>
<rect x="448" y="1097" width="8" height="12" fill="#7f8873" opacity="0.65" transform="rotate(-60 448 1097)"/>
<rect x="310" y="1127" width="7" height="6" fill="#6f7d60" opacity="0.65" transform="rotate(20 310 1127)"/>
<rect x="639" y="1162" width="5" height="11" fill="#868678" opacity="0.65" transform="rotate(30 639 1162)"/>
<rect x="438" y="1525" width="6" height="12" fill="#82867a" opacity="0.65" transform="rotate(-60 438 1525)"/>
<rect x="281" y="1461" width="7" height="6" fill="#72805f" opacity="0.65" transform="rotate(5 281 1461)"/>
<rect x="509" y="614" width="6" height="6" fill="#868678" opacity="0.65" transform="rotate(60 509 614)"/>
<rect x="647" y="889" width="5" height="12" fill="#868678" opacity="0.65" transform="rotate(-60 647 889)"/>
<rect x="212" y="1328" width="3" height="19" fill="#6f7d60" opacity="0.65" transform="rotate(-30 212 1328)"/>
<rect x="393" y="692" width="7" height="9" fill="#6f7d60" opacity="0.65" transform="rotate(-5 393 692)"/>
<rect x="215" y="503" width="3" height="19" fill="#82867a" opacity="0.65" transform="rotate(-60 215 503)"/>
<rect x="360" y="318" width="4" height="18" fill="#6f7d60" opacity="0.65" transform="rotate(-25 360 318)"/>
<rect x="863" y="989" width="8" height="7" fill="#82867a" opacity="0.65" transform="rotate(-5 863 989)"/>
<rect x="786" y="294" width="5" height="18" fill="#7f8873" opacity="0.65" transform="rotate(-25 786 294)"/>
<rect x="641" y="1204" width="4" height="8" fill="#72805f" opacity="0.65" transform="rotate(-30 641 1204)"/>
<rect x="259" y="458" width="3" height="11" fill="#6f7d60" opacity="0.65" transform="rotate(20 259 458)"/>
<rect x="279" y="460" width="4" height="16" fill="#6f7d60" opacity="0.65" transform="rotate(30 279 460)"/>
<rect x="452" y="1571" width="5" height="12" fill="#72805f" opacity="0.65" transform="rotate(5 452 1571)"/>
<rect x="363" y="1565" width="8" height="17" fill="#82867a" opacity="0.65" transform="rotate(20 363 1565)"/>
<rect x="326" y="447" width="5" height="18" fill="#84867c" opacity="0.65" transform="rotate(5 326 447)"/>
<rect x="571" y="1166" width="3" height="13" fill="#868678" opacity="0.65" transform="rotate(-30 571 1166)"/>
<rect x="516" y="1439" width="6" height="11" fill="#7f8873" opacity="0.65" transform="rotate(20 516 1439)"/>
<rect x="802" y="1484" width="6" height="8" fill="#82867a" opacity="0.65" transform="rotate(-5 802 1484)"/>
<rect x="310" y="1119" width="6" height="21" fill="#6f7d60" opacity="0.65" transform="rotate(-30 310 1119)"/>
<rect x="791" y="732" width="7" height="9" fill="#7f8873" opacity="0.65" transform="rotate(-5 791 732)"/>
<rect x="434" y="892" width="6" height="22" fill="#82867a" opacity="0.65" transform="rotate(60 434 892)"/>
<rect x="827" y="500" width="8" height="9" fill="#6f7d60" opacity="0.65" transform="rotate(-30 827 500)"/>
<rect x="894" y="1176" width="5" height="18" fill="#72805f" opacity="0.65" transform="rotate(60 894 1176)"/>
<rect x="311" y="1406" width="5" height="10" fill="#84867c" opacity="0.65" transform="rotate(5 311 1406)"/>
<rect x="851" y="1269" width="4" height="18" fill="#868678" opacity="0.65" transform="rotate(-5 851 1269)"/>
<rect x="835" y="1038" width="5" height="21" fill="#84867c" opacity="0.65" transform="rotate(20 835 1038)"/>
<rect x="272" y="616" width="4" height="20" fill="#7f8873" opacity="0.65" transform="rotate(-60 272 616)"/>
<rect x="257" y="851" width="5" height="7" fill="#6f7d60" opacity="0.65" transform="rotate(-60 257 851)"/>
<rect x="350" y="1130" width="4" height="12" fill="#868678" opacity="0.65" transform="rotate(-5 350 1130)"/>
<rect x="738" y="1182" width="6" height="10" fill="#6f7d60" opacity="0.65" transform="rotate(60 738 1182)"/>
<rect x="481" y="1532" width="5" height="8" fill="#6f7d60" opacity="0.65" transform="rotate(20 481 1532)"/>
<rect x="768" y="641" width="6" height="20" fill="#6f7d60" opacity="0.65" transform="rotate(20 768 641)"/>
<rect x="446" y="1398" width="7" height="10" fill="#868678" opacity="0.65" transform="rotate(-30 446 1398)"/>
<rect x="511" y="275" width="3" height="19" fill="#84867c" opacity="0.65" transform="rotate(30 511 275)"/>
<rect x="525" y="878" width="7" height="18" fill="#72805f" opacity="0.65" transform="rotate(20 525 878)"/>
<rect x="870" y="1117" width="7" height="16" fill="#868678" opacity="0.65" transform="rotate(-60 870 1117)"/>
<rect x="435" y="463" width="8" height="14" fill="#82867a" opacity="0.65" transform="rotate(-60 435 463)"/>
<rect x="382" y="323" width="4" height="22" fill="#72805f" opacity="0.65" transform="rotate(-25 382 323)"/>
<rect x="642" y="965" width="7" height="13" fill="#84867c" opacity="0.65" transform="rotate(-5 642 965)"/>
<rect x="840" y="1336" width="6" height="18" fill="#82867a" opacity="0.65" transform="rotate(5 840 1336)"/>
<rect x="537" y="961" width="4" height="10" fill="#868678" opacity="0.65" transform="rotate(-25 537 961)"/>
<rect x="588" y="791" width="4" height="8" fill="#7f8873" opacity="0.65" transform="rotate(5 588 791)"/>
<rect x="545" y="604" width="5" height="15" fill="#868678" opacity="0.65" transform="rotate(60 545 604)"/>
<rect x="313" y="1445" width="5" height="21" fill="#82867a" opacity="0.65" transform="rotate(5 313 1445)"/>
<rect x="608" y="1555" width="5" height="15" fill="#72805f" opacity="0.65" transform="rotate(-30 608 1555)"/>
<rect x="422" y="863" width="8" height="13" fill="#72805f" opacity="0.65" transform="rotate(60 422 863)"/>
<rect x="536" y="1504" width="4" height="21" fill="#6f7d60" opacity="0.65" transform="rotate(20 536 1504)"/>
<rect x="452" y="1063" width="5" height="22" fill="#82867a" opacity="0.65" transform="rotate(-25 452 1063)"/>
<rect x="494" y="525" width="3" height="14" fill="#6f7d60" opacity="0.65" transform="rotate(-25 494 525)"/>
<rect x="727" y="563" width="4" height="11" fill="#84867c" opacity="0.65" transform="rotate(30 727 563)"/>
<rect x="675" y="1210" width="3" height="7" fill="#7f8873" opacity="0.65" transform="rotate(-25 675 1210)"/>
<rect x="878" y="666" width="6" height="6" fill="#7f8873" opacity="0.65" transform="rotate(60 878 666)"/>
<rect x="832" y="1042" width="7" height="6" fill="#82867a" opacity="0.65" transform="rotate(20 832 1042)"/>
<rect x="834" y="545" width="4" height="8" fill="#868678" opacity="0.65" transform="rotate(60 834 545)"/>
<rect x="672" y="762" width="8" height="6" fill="#868678" opacity="0.65" transform="rotate(-5 672 762)"/>
<rect x="277" y="1255" width="4" height="8" fill="#72805f" opacity="0.65" transform="rotate(-30 277 1255)"/>
<rect x="867" y="1592" width="8" height="16" fill="#6f7d60" opacity="0.65" transform="rotate(-5 867 1592)"/>
<rect x="313" y="1227" width="6" height="12" fill="#72805f" opacity="0.65" transform="rotate(-60 313 1227)"/>
<rect x="580" y="461" width="4" height="8" fill="#84867c" opacity="0.65" transform="rotate(20 580 461)"/>
<rect x="416" y="1011" width="3" height="14" fill="#7f8873" opacity="0.65" transform="rotate(-30 416 1011)"/>
<rect x="709" y="561" width="4" height="21" fill="#84867c" opacity="0.65" transform="rotate(30 709 561)"/>
<rect x="827" y="726" width="7" height="19" fill="#868678" opacity="0.65" transform="rotate(-5 827 726)"/>
<rect x="501" y="888" width="3" height="22" fill="#84867c" opacity="0.65" transform="rotate(5 501 888)"/>
<rect x="891" y="565" width="3" height="21" fill="#82867a" opacity="0.65" transform="rotate(-25 891 565)"/>
<rect x="382" y="1293" width="7" height="11" fill="#84867c" opacity="0.65" transform="rotate(-5 382 1293)"/>
<rect x="728" y="341" width="7" height="13" fill="#6f7d60" opacity="0.65" transform="rotate(20 728 341)"/>
<rect x="320" y="827" width="8" height="8" fill="#868678" opacity="0.65" transform="rotate(-5 320 827)"/>
<rect x="850" y="1038" width="5" height="22" fill="#6f7d60" opacity="0.65" transform="rotate(20 850 1038)"/>
<rect x="773" y="1315" width="4" height="7" fill="#84867c" opacity="0.65" transform="rotate(-25 773 1315)"/>
<rect x="565" y="1257" width="4" height="12" fill="#82867a" opacity="0.65" transform="rotate(30 565 1257)"/>
<rect x="503" y="1139" width="3" height="20" fill="#84867c" opacity="0.65" transform="rotate(30 503 1139)"/>
<rect x="663" y="377" width="5" height="15" fill="#72805f" opacity="0.65" transform="rotate(60 663 377)"/>
<rect x="434" y="602" width="6" height="10" fill="#7f8873" opacity="0.65" transform="rotate(-5 434 602)"/>
<rect x="682" y="826" width="4" height="7" fill="#868678" opacity="0.65" transform="rotate(30 682 826)"/>
<rect x="893" y="1491" width="3" height="14" fill="#7f8873" opacity="0.65" transform="rotate(-60 893 1491)"/>
<rect x="336" y="1151" width="5" height="19" fill="#72805f" opacity="0.65" transform="rotate(-25 336 1151)"/>
<rect x="854" y="1348" width="5" height="8" fill="#7f8873" opacity="0.65" transform="rotate(-5 854 1348)"/>
<rect x="289" y="1173" width="6" height="15" fill="#6f7d60" opacity="0.65" transform="rotate(-30 289 1173)"/>
<rect x="753" y="1315" width="3" height="19" fill="#82867a" opacity="0.65" transform="rotate(-30 753 1315)"/>
<rect x="355" y="1530" width="4" height="9" fill="#72805f" opacity="0.65" transform="rotate(-5 355 1530)"/>
<rect x="699" y="617" width="8" height="13" fill="#84867c" opacity="0.65" transform="rotate(20 699 617)"/>
<rect x="264" y="1228" width="7" height="16" fill="#82867a" opacity="0.65" transform="rotate(-60 264 1228)"/>
<rect x="702" y="397" width="5" height="17" fill="#84867c" opacity="0.65" transform="rotate(20 702 397)"/>
<rect x="230" y="721" width="7" height="22" fill="#72805f" opacity="0.65" transform="rotate(5 230 721)"/>
<rect x="879" y="1116" width="8" height="15" fill="#82867a" opacity="0.65" transform="rotate(-60 879 1116)"/>
<rect x="563" y="897" width="5" height="12" fill="#868678" opacity="0.65" transform="rotate(30 563 897)"/>
<rect x="634" y="1137" width="4" height="6" fill="#7f8873" opacity="0.65" transform="rotate(20 634 1137)"/>
<rect x="231" y="639" width="4" height="16" fill="#7f8873" opacity="0.65" transform="rotate(60 231 639)"/>
<rect x="562" y="579" width="8" height="14" fill="#7f8873" opacity="0.65" transform="rotate(-60 562 579)"/>
<rect x="405" y="1369" width="3" height="10" fill="#72805f" opacity="0.65" transform="rotate(30 405 1369)"/>
<rect x="710" y="1413" width="7" height="13" fill="#84867c" opacity="0.65" transform="rotate(60 710 1413)"/>
<rect x="713" y="522" width="4" height="19" fill="#6f7d60" opacity="0.65" transform="rotate(-60 713 522)"/>
<rect x="645" y="1183" width="4" height="7" fill="#72805f" opacity="0.65" transform="rotate(-5 645 1183)"/>
<rect x="223" y="1548" width="6" height="17" fill="#72805f" opacity="0.65" transform="rotate(30 223 1548)"/>
<rect x="438" y="882" width="7" height="18" fill="#82867a" opacity="0.65" transform="rotate(5 438 882)"/>
<rect x="271" y="508" width="7" height="7" fill="#82867a" opacity="0.65" transform="rotate(60 271 508)"/>
<rect x="794" y="1420" width="5" height="13" fill="#72805f" opacity="0.65" transform="rotate(20 794 1420)"/>
<rect x="882" y="489" width="4" height="10" fill="#6f7d60" opacity="0.65" transform="rotate(30 882 489)"/>
<rect x="432" y="1398" width="7" height="13" fill="#82867a" opacity="0.65" transform="rotate(20 432 1398)"/>
<rect x="741" y="750" width="4" height="20" fill="#7f8873" opacity="0.65" transform="rotate(-5 741 750)"/>
<rect x="897" y="1584" width="8" height="12" fill="#82867a" opacity="0.65" transform="rotate(-5 897 1584)"/>
<rect x="747" y="1241" width="4" height="11" fill="#82867a" opacity="0.65" transform="rotate(-30 747 1241)"/>
<rect x="637" y="496" width="3" height="17" fill="#868678" opacity="0.65" transform="rotate(30 637 496)"/>
<rect x="406" y="512" width="7" height="21" fill="#82867a" opacity="0.65" transform="rotate(5 406 512)"/>
<rect x="610" y="1022" width="5" height="7" fill="#72805f" opacity="0.65" transform="rotate(-25 610 1022)"/>
<rect x="557" y="406" width="4" height="11" fill="#7f8873" opacity="0.65" transform="rotate(60 557 406)"/>
<rect x="211" y="550" width="5" height="12" fill="#6f7d60" opacity="0.65" transform="rotate(-5 211 550)"/>
<rect x="371" y="1039" width="5" height="7" fill="#868678" opacity="0.65" transform="rotate(-60 371 1039)"/>
<rect x="388" y="1296" width="5" height="22" fill="#84867c" opacity="0.65" transform="rotate(-5 388 1296)"/>
<rect x="523" y="1055" width="4" height="16" fill="#7f8873" opacity="0.65" transform="rotate(-5 523 1055)"/>
<rect x="312" y="1540" width="8" height="18" fill="#6f7d60" opacity="0.65" transform="rotate(5 312 1540)"/>
<rect x="857" y="1434" width="5" height="20" fill="#6f7d60" opacity="0.65" transform="rotate(-30 857 1434)"/>
<rect x="247" y="1471" width="4" height="6" fill="#7f8873" opacity="0.65" transform="rotate(5 247 1471)"/>
<rect x="403" y="1195" width="6" height="22" fill="#82867a" opacity="0.65" transform="rotate(-25 403 1195)"/>
<rect x="557" y="911" width="5" height="20" fill="#82867a" opacity="0.65" transform="rotate(30 557 911)"/>
<rect x="814" y="727" width="5" height="16" fill="#868678" opacity="0.65" transform="rotate(-60 814 727)"/>
<rect x="399" y="355" width="8" height="12" fill="#84867c" opacity="0.65" transform="rotate(60 399 355)"/>
<rect x="660" y="964" width="5" height="11" fill="#84867c" opacity="0.65" transform="rotate(60 660 964)"/>
<rect x="313" y="271" width="7" height="10" fill="#84867c" opacity="0.65" transform="rotate(20 313 271)"/>
<rect x="899" y="509" width="6" height="12" fill="#72805f" opacity="0.65" transform="rotate(30 899 509)"/>
<rect x="321" y="1198" width="4" height="21" fill="#6f7d60" opacity="0.65" transform="rotate(-30 321 1198)"/>
<rect x="220" y="539" width="8" height="17" fill="#6f7d60" opacity="0.65" transform="rotate(-30 220 539)"/>
<rect x="548" y="882" width="4" height="9" fill="#6f7d60" opacity="0.65" transform="rotate(20 548 882)"/>
<rect x="686" y="592" width="6" height="8" fill="#868678" opacity="0.65" transform="rotate(20 686 592)"/>
<rect x="661" y="1423" width="4" height="15" fill="#6f7d60" opacity="0.65" transform="rotate(5 661 1423)"/>
<rect x="713" y="391" width="4" height="11" fill="#82867a" opacity="0.65" transform="rotate(30 713 391)"/>
<rect x="670" y="1250" width="5" height="8" fill="#72805f" opacity="0.65" transform="rotate(5 670 1250)"/>
<rect x="514" y="1559" width="7" height="16" fill="#84867c" opacity="0.65" transform="rotate(-25 514 1559)"/>
<rect x="628" y="285" width="8" height="22" fill="#6f7d60" opacity="0.65" transform="rotate(20 628 285)"/>
<rect x="387" y="1390" width="4" height="19" fill="#868678" opacity="0.65" transform="rotate(-30 387 1390)"/>
<rect x="211" y="1451" width="5" height="19" fill="#6f7d60" opacity="0.65" transform="rotate(5 211 1451)"/>
<rect x="573" y="1413" width="4" height="20" fill="#72805f" opacity="0.65" transform="rotate(-30 573 1413)"/>
<rect x="292" y="747" width="8" height="6" fill="#6f7d60" opacity="0.65" transform="rotate(-25 292 747)"/>
<rect x="235" y="1194" width="6" height="11" fill="#6f7d60" opacity="0.65" transform="rotate(-25 235 1194)"/>
<rect x="809" y="1586" width="5" height="19" fill="#72805f" opacity="0.65" transform="rotate(-30 809 1586)"/>
<rect x="767" y="1236" width="4" height="7" fill="#6f7d60" opacity="0.65" transform="rotate(5 767 1236)"/>
<rect x="629" y="1412" width="4" height="17" fill="#7f8873" opacity="0.65" transform="rotate(-5 629 1412)"/>
<rect x="750" y="860" width="4" height="21" fill="#72805f" opacity="0.65" transform="rotate(-60 750 860)"/>
<rect x="721" y="1370" width="4" height="17" fill="#7f8873" opacity="0.65" transform="rotate(-30 721 1370)"/>
<rect x="357" y="535" width="8" height="12" fill="#868678" opacity="0.65" transform="rotate(60 357 535)"/>
<rect x="551" y="276" width="7" height="18" fill="#6f7d60" opacity="0.65" transform="rotate(60 551 276)"/>
<rect x="481" y="458" width="5" height="21" fill="#7f8873" opacity="0.65" transform="rotate(20 481 458)"/>
<rect x="567" y="450" width="8" height="14" fill="#868678" opacity="0.65" transform="rotate(30 567 450)"/>
<rect x="751" y="509" width="7" height="12" fill="#84867c" opacity="0.65" transform="rotate(-60 751 509)"/>
<rect x="393" y="1104" width="5" height="12" fill="#868678" opacity="0.65" transform="rotate(30 393 1104)"/>
<rect x="421" y="1338" width="7" height="11" fill="#82867a" opacity="0.65" transform="rotate(20 421 1338)"/>
<rect x="690" y="471" width="6" height="8" fill="#6f7d60" opacity="0.65" transform="rotate(-5 690 471)"/>
<rect x="771" y="834" width="6" height="21" fill="#82867a" opacity="0.65" transform="rotate(-25 771 834)"/>
<rect x="309" y="474" width="7" height="11" fill="#6f7d60" opacity="0.65" transform="rotate(-5 309 474)"/>
<rect x="472" y="443" width="4" height="15" fill="#82867a" opacity="0.65" transform="rotate(20 472 443)"/>
<rect x="533" y="971" width="5" height="14" fill="#84867c" opacity="0.65" transform="rotate(-30 533 971)"/>
<rect x="886" y="1425" width="5" height="20" fill="#6f7d60" opacity="0.65" transform="rotate(-25 886 1425)"/>
<rect x="577" y="536" width="7" height="11" fill="#6f7d60" opacity="0.65" transform="rotate(30 577 536)"/>
<rect x="858" y="474" width="5" height="8" fill="#84867c" opacity="0.65" transform="rotate(20 858 474)"/>
<rect x="684" y="449" width="6" height="18" fill="#84867c" opacity="0.65" transform="rotate(-30 684 449)"/>
<rect x="787" y="1424" width="3" height="10" fill="#84867c" opacity="0.65" transform="rotate(-60 787 1424)"/>
<rect x="377" y="357" width="5" height="10" fill="#72805f" opacity="0.65" transform="rotate(5 377 357)"/>
<rect x="356" y="570" width="7" height="13" fill="#82867a" opacity="0.65" transform="rotate(-30 356 570)"/>
<rect x="280" y="1260" width="5" height="14" fill="#84867c" opacity="0.65" transform="rotate(30 280 1260)"/>
<rect x="346" y="290" width="7" height="13" fill="#868678" opacity="0.65" transform="rotate(-5 346 290)"/>
<rect x="357" y="808" width="6" height="19" fill="#6f7d60" opacity="0.65" transform="rotate(5 357 808)"/>
<rect x="674" y="1035" width="6" height="18" fill="#72805f" opacity="0.65" transform="rotate(20 674 1035)"/>
<rect x="780" y="1472" width="7" height="9" fill="#84867c" opacity="0.65" transform="rotate(30 780 1472)"/>
<rect x="523" y="1022" width="4" height="15" fill="#84867c" opacity="0.65" transform="rotate(-25 523 1022)"/>
<rect x="679" y="1463" width="5" height="6" fill="#72805f" opacity="0.65" transform="rotate(5 679 1463)"/>
<rect x="642" y="1387" width="5" height="8" fill="#72805f" opacity="0.65" transform="rotate(-5 642 1387)"/>
<rect x="699" y="1231" width="4" height="16" fill="#6f7d60" opacity="0.65" transform="rotate(-30 699 1231)"/>
<rect x="660" y="270" width="5" height="11" fill="#868678" opacity="0.65" transform="rotate(30 660 270)"/>
<rect x="436" y="414" width="6" height="11" fill="#72805f" opacity="0.65" transform="rotate(-60 436 414)"/>
<rect x="757" y="1176" width="4" height="7" fill="#6f7d60" opacity="0.65" transform="rotate(-25 757 1176)"/>
<rect x="897" y="647" width="7" height="21" fill="#6f7d60" opacity="0.65" transform="rotate(20 897 647)"/>
<rect x="631" y="1106" width="7" height="20" fill="#84867c" opacity="0.65" transform="rotate(5 631 1106)"/>
<rect x="410" y="1555" width="5" height="13" fill="#82867a" opacity="0.65" transform="rotate(-5 410 1555)"/>
<rect x="878" y="678" width="6" height="19" fill="#7f8873" opacity="0.65" transform="rotate(-60 878 678)"/>
<rect x="784" y="1037" width="6" height="10" fill="#82867a" opacity="0.65" transform="rotate(20 784 1037)"/>
<rect x="508" y="1277" width="4" height="8" fill="#868678" opacity="0.65" transform="rotate(20 508 1277)"/>
<rect x="498" y="1516" width="7" height="10" fill="#868678" opacity="0.65" transform="rotate(-30 498 1516)"/>
<rect x="491" y="286" width="5" height="21" fill="#72805f" opacity="0.65" transform="rotate(5 491 286)"/>
<rect x="697" y="326" width="8" height="8" fill="#72805f" opacity="0.65" transform="rotate(-30 697 326)"/>
<rect x="767" y="735" width="7" height="7" fill="#84867c" opacity="0.65" transform="rotate(20 767 735)"/>
<rect x="553" y="1108" width="7" height="15" fill="#868678" opacity="0.65" transform="rotate(-25 553 1108)"/>
<rect x="296" y="1357" width="5" height="10" fill="#82867a" opacity="0.65" transform="rotate(60 296 1357)"/>
<rect x="788" y="304" width="7" height="8" fill="#6f7d60" opacity="0.65" transform="rotate(-5 788 304)"/>
<rect x="414" y="319" width="4" height="13" fill="#868678" opacity="0.65" transform="rotate(30 414 319)"/>
<rect x="611" y="1221" width="4" height="14" fill="#82867a" opacity="0.65" transform="rotate(-5 611 1221)"/>
<rect x="215" y="861" width="5" height="15" fill="#6f7d60" opacity="0.65" transform="rotate(-25 215 861)"/>
<rect x="266" y="942" width="5" height="12" fill="#72805f" opacity="0.65" transform="rotate(-60 266 942)"/>
<rect x="704" y="748" width="5" height="20" fill="#72805f" opacity="0.65" transform="rotate(30 704 748)"/>
<rect x="893" y="1523" width="4" height="19" fill="#868678" opacity="0.65" transform="rotate(30 893 1523)"/>
<rect x="294" y="985" width="4" height="19" fill="#84867c" opacity="0.65" transform="rotate(-25 294 985)"/>
<rect x="380" y="1197" width="5" height="17" fill="#82867a" opacity="0.65" transform="rotate(-5 380 1197)"/>
<rect x="524" y="1210" width="3" height="17" fill="#84867c" opacity="0.65" transform="rotate(20 524 1210)"/>
<rect x="533" y="1123" width="6" height="7" fill="#82867a" opacity="0.65" transform="rotate(-5 533 1123)"/>
<rect x="474" y="818" width="5" height="17" fill="#6f7d60" opacity="0.65" transform="rotate(-60 474 818)"/>
<rect x="482" y="1015" width="6" height="9" fill="#82867a" opacity="0.65" transform="rotate(60 482 1015)"/>
<rect x="895" y="873" width="7" height="10" fill="#6f7d60" opacity="0.65" transform="rotate(-25 895 873)"/>
<rect x="700" y="1516" width="7" height="20" fill="#72805f" opacity="0.65" transform="rotate(5 700 1516)"/>
<rect x="533" y="665" width="5" height="19" fill="#82867a" opacity="0.65" transform="rotate(20 533 665)"/>
<rect x="319" y="452" width="6" height="9" fill="#72805f" opacity="0.65" transform="rotate(-25 319 452)"/>
<rect x="567" y="435" width="6" height="22" fill="#72805f" opacity="0.65" transform="rotate(-60 567 435)"/>
<rect x="412" y="604" width="5" height="6" fill="#7f8873" opacity="0.65" transform="rotate(30 412 604)"/>
<rect x="466" y="257" width="7" height="12" fill="#84867c" opacity="0.65" transform="rotate(-25 466 257)"/>
<rect x="872" y="551" width="4" height="6" fill="#84867c" opacity="0.65" transform="rotate(5 872 551)"/>
<rect x="697" y="1032" width="6" height="10" fill="#72805f" opacity="0.65" transform="rotate(30 697 1032)"/>
<rect x="879" y="746" width="8" height="20" fill="#84867c" opacity="0.65" transform="rotate(-30 879 746)"/>
<rect x="640" y="1038" width="7" height="14" fill="#82867a" opacity="0.65" transform="rotate(-5 640 1038)"/>
<rect x="308" y="974" width="4" height="12" fill="#82867a" opacity="0.65" transform="rotate(-25 308 974)"/>
<rect x="696" y="1019" width="7" height="16" fill="#868678" opacity="0.65" transform="rotate(-5 696 1019)"/>
<rect x="845" y="1345" width="6" height="11" fill="#868678" opacity="0.65" transform="rotate(60 845 1345)"/>
<rect x="555" y="292" width="4" height="18" fill="#6f7d60" opacity="0.65" transform="rotate(-60 555 292)"/>
<rect x="664" y="1515" width="7" height="13" fill="#7f8873" opacity="0.65" transform="rotate(5 664 1515)"/>
<rect x="732" y="672" width="4" height="16" fill="#84867c" opacity="0.65" transform="rotate(30 732 672)"/>
<rect x="720" y="1161" width="7" height="9" fill="#82867a" opacity="0.65" transform="rotate(5 720 1161)"/>
<rect x="667" y="496" width="5" height="18" fill="#7f8873" opacity="0.65" transform="rotate(-30 667 496)"/>
<rect x="642" y="476" width="8" height="9" fill="#84867c" opacity="0.65" transform="rotate(-25 642 476)"/>
<rect x="517" y="264" width="5" height="13" fill="#84867c" opacity="0.65" transform="rotate(-5 517 264)"/>
<rect x="362" y="428" width="3" height="13" fill="#72805f" opacity="0.65" transform="rotate(-60 362 428)"/>
<rect x="641" y="805" width="3" height="20" fill="#84867c" opacity="0.65" transform="rotate(60 641 805)"/>
<rect x="226" y="1312" width="5" height="10" fill="#84867c" opacity="0.65" transform="rotate(-30 226 1312)"/>
<rect x="266" y="315" width="5" height="19" fill="#6f7d60" opacity="0.65" transform="rotate(5 266 315)"/>
<rect x="876" y="1378" width="6" height="15" fill="#84867c" opacity="0.65" transform="rotate(-5 876 1378)"/>
<rect x="640" y="797" width="8" height="14" fill="#868678" opacity="0.65" transform="rotate(-5 640 797)"/>
<rect x="273" y="373" width="6" height="14" fill="#7f8873" opacity="0.65" transform="rotate(-30 273 373)"/>
<rect x="281" y="1055" width="7" height="22" fill="#72805f" opacity="0.65" transform="rotate(-30 281 1055)"/>
<rect x="624" y="813" width="6" height="17" fill="#84867c" opacity="0.65" transform="rotate(5 624 813)"/>
<rect x="827" y="577" width="6" height="12" fill="#72805f" opacity="0.65" transform="rotate(-30 827 577)"/>
<rect x="432" y="979" width="8" height="15" fill="#868678" opacity="0.65" transform="rotate(-30 432 979)"/>
<rect x="501" y="1441" width="6" height="15" fill="#82867a" opacity="0.65" transform="rotate(5 501 1441)"/>
<rect x="413" y="1467" width="3" height="11" fill="#6f7d60" opacity="0.65" transform="rotate(-30 413 1467)"/>
<rect x="303" y="1205" width="7" height="18" fill="#82867a" opacity="0.65" transform="rotate(-30 303 1205)"/>
<rect x="837" y="464" width="4" height="18" fill="#82867a" opacity="0.65" transform="rotate(60 837 464)"/>
<rect x="630" y="433" width="7" height="19" fill="#84867c" opacity="0.65" transform="rotate(30 630 433)"/>
<rect x="508" y="1445" width="8" height="8" fill="#7f8873" opacity="0.65" transform="rotate(20 508 1445)"/>
<rect x="791" y="1548" width="4" height="12" fill="#868678" opacity="0.65" transform="rotate(-60 791 1548)"/>
<rect x="757" y="311" width="4" height="19" fill="#84867c" opacity="0.65" transform="rotate(-5 757 311)"/>
<rect x="785" y="1167" width="7" height="11" fill="#84867c" opacity="0.65" transform="rotate(20 785 1167)"/>
<rect x="466" y="1506" width="6" height="7" fill="#84867c" opacity="0.65" transform="rotate(5 466 1506)"/>
<rect x="555" y="435" width="7" height="19" fill="#82867a" opacity="0.65" transform="rotate(20 555 435)"/>
<rect x="767" y="552" width="3" height="20" fill="#72805f" opacity="0.65" transform="rotate(-25 767 552)"/>
<rect x="829" y="487" width="5" height="14" fill="#72805f" opacity="0.65" transform="rotate(20 829 487)"/>
<rect x="845" y="666" width="6" height="17" fill="#6f7d60" opacity="0.65" transform="rotate(5 845 666)"/>
<rect x="393" y="582" width="6" height="8" fill="#72805f" opacity="0.65" transform="rotate(20 393 582)"/>
<rect x="370" y="1188" width="6" height="8" fill="#72805f" opacity="0.65" transform="rotate(-30 370 1188)"/>
<rect x="414" y="374" width="4" height="18" fill="#7f8873" opacity="0.65" transform="rotate(20 414 374)"/>
<rect x="510" y="366" width="5" height="9" fill="#82867a" opacity="0.65" transform="rotate(-25 510 366)"/>
<rect x="853" y="249" width="8" height="12" fill="#82867a" opacity="0.65" transform="rotate(30 853 249)"/>
<rect x="518" y="312" width="8" height="16" fill="#84867c" opacity="0.65" transform="rotate(-30 518 312)"/>
<rect x="478" y="514" width="6" height="13" fill="#72805f" opacity="0.65" transform="rotate(5 478 514)"/>
<rect x="572" y="1191" width="4" height="12" fill="#72805f" opacity="0.65" transform="rotate(-5 572 1191)"/>
<rect x="398" y="1245" width="4" height="11" fill="#72805f" opacity="0.65" transform="rotate(30 398 1245)"/>
<rect x="805" y="1108" width="5" height="12" fill="#84867c" opacity="0.65" transform="rotate(-25 805 1108)"/>
<rect x="515" y="1011" width="7" height="10" fill="#72805f" opacity="0.65" transform="rotate(-5 515 1011)"/>
<rect x="272" y="923" width="7" height="9" fill="#7f8873" opacity="0.65" transform="rotate(30 272 923)"/>
<rect x="893" y="894" width="5" height="19" fill="#72805f" opacity="0.65" transform="rotate(-5 893 894)"/>
<rect x="649" y="998" width="7" height="7" fill="#7f8873" opacity="0.65" transform="rotate(20 649 998)"/>
<rect x="415" y="940" width="4" height="13" fill="#7f8873" opacity="0.65" transform="rotate(-60 415 940)"/>
<rect x="839" y="1472" width="8" height="14" fill="#868678" opacity="0.65" transform="rotate(20 839 1472)"/>
<rect x="321" y="585" width="6" height="6" fill="#6f7d60" opacity="0.65" transform="rotate(-30 321 585)"/>
<rect x="392" y="969" width="5" height="20" fill="#82867a" opacity="0.65" transform="rotate(-5 392 969)"/>
<rect x="727" y="877" width="5" height="9" fill="#6f7d60" opacity="0.65" transform="rotate(-25 727 877)"/>
<rect x="262" y="1570" width="4" height="12" fill="#7f8873" opacity="0.65" transform="rotate(60 262 1570)"/>
<rect x="604" y="1451" width="8" height="16" fill="#72805f" opacity="0.65" transform="rotate(-5 604 1451)"/>
<rect x="275" y="334" width="6" height="15" fill="#7f8873" opacity="0.65" transform="rotate(-5 275 334)"/>
<rect x="663" y="1016" width="6" height="10" fill="#6f7d60" opacity="0.65" transform="rotate(-5 663 1016)"/>
<rect x="431" y="764" width="8" height="18" fill="#84867c" opacity="0.65" transform="rotate(5 431 764)"/>
<rect x="594" y="522" width="3" height="9" fill="#72805f" opacity="0.65" transform="rotate(-60 594 522)"/>
<rect x="748" y="1449" width="4" height="18" fill="#7f8873" opacity="0.65" transform="rotate(-5 748 1449)"/>
<rect x="573" y="298" width="3" height="17" fill="#6f7d60" opacity="0.65" transform="rotate(-25 573 298)"/>
<rect x="466" y="1490" width="7" height="11" fill="#84867c" opacity="0.65" transform="rotate(20 466 1490)"/>
<rect x="587" y="1130" width="4" height="7" fill="#7f8873" opacity="0.65" transform="rotate(60 587 1130)"/>
<rect x="224" y="1242" width="6" height="10" fill="#7f8873" opacity="0.65" transform="rotate(30 224 1242)"/>
<rect x="387" y="876" width="4" height="18" fill="#6f7d60" opacity="0.65" transform="rotate(60 387 876)"/>
<rect x="731" y="422" width="7" height="19" fill="#868678" opacity="0.65" transform="rotate(-25 731 422)"/>
<rect x="333" y="1564" width="6" height="15" fill="#6f7d60" opacity="0.65" transform="rotate(-25 333 1564)"/>
<rect x="588" y="762" width="6" height="11" fill="#84867c" opacity="0.65" transform="rotate(5 588 762)"/>
<rect x="683" y="826" width="6" height="12" fill="#7f8873" opacity="0.65" transform="rotate(30 683 826)"/>
<rect x="601" y="540" width="4" height="16" fill="#868678" opacity="0.65" transform="rotate(5 601 540)"/>
<rect x="601" y="1349" width="8" height="12" fill="#84867c" opacity="0.65" transform="rotate(-30 601 1349)"/>
<rect x="612" y="1182" width="6" height="16" fill="#7f8873" opacity="0.65" transform="rotate(30 612 1182)"/>
<rect x="505" y="1122" width="6" height="9" fill="#84867c" opacity="0.65" transform="rotate(5 505 1122)"/>
<rect x="740" y="537" width="5" height="6" fill="#72805f" opacity="0.65" transform="rotate(-60 740 537)"/>
<rect x="666" y="1279" width="6" height="13" fill="#6f7d60" opacity="0.65" transform="rotate(30 666 1279)"/>
<rect x="400" y="909" width="4" height="21" fill="#72805f" opacity="0.65" transform="rotate(-5 400 909)"/>
<rect x="440" y="370" width="5" height="18" fill="#868678" opacity="0.65" transform="rotate(20 440 370)"/>
<rect x="321" y="1235" width="4" height="18" fill="#82867a" opacity="0.65" transform="rotate(-25 321 1235)"/>
<rect x="412" y="1274" width="5" height="16" fill="#7f8873" opacity="0.65" transform="rotate(-60 412 1274)"/>
<rect x="735" y="1163" width="8" height="11" fill="#6f7d60" opacity="0.65" transform="rotate(-30 735 1163)"/>
<rect x="356" y="552" width="7" height="19" fill="#72805f" opacity="0.65" transform="rotate(60 356 552)"/>
<rect x="217" y="1377" width="5" height="6" fill="#72805f" opacity="0.65" transform="rotate(20 217 1377)"/>
<rect x="348" y="399" width="5" height="8" fill="#82867a" opacity="0.65" transform="rotate(-5 348 399)"/>
<rect x="375" y="1027" width="5" height="11" fill="#868678" opacity="0.65" transform="rotate(-30 375 1027)"/>
<rect x="440" y="1488" width="7" height="15" fill="#7f8873" opacity="0.65" transform="rotate(5 440 1488)"/>
<rect x="431" y="422" width="7" height="16" fill="#84867c" opacity="0.65" transform="rotate(30 431 422)"/>
<rect x="848" y="1446" width="3" height="17" fill="#82867a" opacity="0.65" transform="rotate(20 848 1446)"/>
<rect x="575" y="1375" width="5" height="14" fill="#6f7d60" opacity="0.65" transform="rotate(-30 575 1375)"/>
<rect x="335" y="1092" width="5" height="22" fill="#82867a" opacity="0.65" transform="rotate(-30 335 1092)"/>
<rect x="698" y="296" width="4" height="8" fill="#82867a" opacity="0.65" transform="rotate(20 698 296)"/>
<rect x="868" y="1099" width="6" height="8" fill="#7f8873" opacity="0.65" transform="rotate(20 868 1099)"/>
<rect x="412" y="1032" width="5" height="7" fill="#7f8873" opacity="0.65" transform="rotate(60 412 1032)"/>
<rect x="750" y="522" width="7" height="6" fill="#7f8873" opacity="0.65" transform="rotate(5 750 522)"/>
<rect x="340" y="982" width="8" height="8" fill="#7f8873" opacity="0.65" transform="rotate(30 340 982)"/>
<rect x="621" y="376" width="8" height="8" fill="#868678" opacity="0.65" transform="rotate(60 621 376)"/>
<rect x="453" y="346" width="4" height="15" fill="#72805f" opacity="0.65" transform="rotate(-5 453 346)"/>
<rect x="764" y="870" width="4" height="11" fill="#868678" opacity="0.65" transform="rotate(-30 764 870)"/>
<rect x="331" y="482" width="4" height="12" fill="#868678" opacity="0.65" transform="rotate(-5 331 482)"/>
<rect x="332" y="1229" width="3" height="17" fill="#868678" opacity="0.65" transform="rotate(-30 332 1229)"/>
<rect x="624" y="261" width="8" height="13" fill="#868678" opacity="0.65" transform="rotate(-60 624 261)"/>
<rect x="393" y="280" width="8" height="10" fill="#84867c" opacity="0.65" transform="rotate(-60 393 280)"/>
<rect x="296" y="1593" width="7" height="9" fill="#82867a" opacity="0.65" transform="rotate(-30 296 1593)"/>
<rect x="828" y="1144" width="6" height="8" fill="#7f8873" opacity="0.65" transform="rotate(60 828 1144)"/>
<rect x="863" y="244" width="5" height="7" fill="#84867c" opacity="0.65" transform="rotate(5 863 244)"/>
<rect x="868" y="1384" width="7" height="7" fill="#6f7d60" opacity="0.65" transform="rotate(20 868 1384)"/>
<rect x="545" y="908" width="4" height="14" fill="#82867a" opacity="0.65" transform="rotate(-5 545 908)"/>
<rect x="395" y="356" width="4" height="21" fill="#72805f" opacity="0.65" transform="rotate(-25 395 356)"/>
<rect x="823" y="936" width="6" height="22" fill="#82867a" opacity="0.65" transform="rotate(20 823 936)"/>
<rect x="212" y="687" width="5" height="8" fill="#7f8873" opacity="0.65" transform="rotate(20 212 687)"/>
<rect x="224" y="1492" width="5" height="20" fill="#6f7d60" opacity="0.65" transform="rotate(30 224 1492)"/>
<rect x="731" y="650" width="7" height="9" fill="#868678" opacity="0.65" transform="rotate(5 731 650)"/>
<rect x="743" y="468" width="5" height="19" fill="#72805f" opacity="0.65" transform="rotate(-25 743 468)"/>
<rect x="712" y="840" width="4" height="18" fill="#72805f" opacity="0.65" transform="rotate(20 712 840)"/>
<rect x="845" y="1122" width="6" height="15" fill="#7f8873" opacity="0.65" transform="rotate(-5 845 1122)"/>
<rect x="601" y="415" width="5" height="13" fill="#7f8873" opacity="0.65" transform="rotate(30 601 415)"/>
<rect x="593" y="732" width="5" height="13" fill="#72805f" opacity="0.65" transform="rotate(-60 593 732)"/>
<rect x="880" y="363" width="3" height="18" fill="#7f8873" opacity="0.65" transform="rotate(5 880 363)"/>
<rect x="514" y="1045" width="5" height="10" fill="#84867c" opacity="0.65" transform="rotate(20 514 1045)"/>
<rect x="812" y="1517" width="4" height="13" fill="#72805f" opacity="0.65" transform="rotate(-30 812 1517)"/>
<rect x="836" y="560" width="6" height="13" fill="#6f7d60" opacity="0.65" transform="rotate(5 836 560)"/>
<rect x="511" y="399" width="4" height="19" fill="#72805f" opacity="0.65" transform="rotate(-25 511 399)"/>
<rect x="445" y="1352" width="7" height="19" fill="#82867a" opacity="0.65" transform="rotate(-30 445 1352)"/>
<rect x="497" y="533" width="7" height="13" fill="#868678" opacity="0.65" transform="rotate(5 497 533)"/>
<rect x="752" y="1514" width="7" height="8" fill="#6f7d60" opacity="0.65" transform="rotate(-30 752 1514)"/>
<rect x="495" y="579" width="8" height="18" fill="#84867c" opacity="0.65" transform="rotate(30 495 579)"/>
<rect x="508" y="536" width="7" height="7" fill="#868678" opacity="0.65" transform="rotate(20 508 536)"/>
<rect x="710" y="944" width="8" height="18" fill="#84867c" opacity="0.65" transform="rotate(60 710 944)"/>
<rect x="810" y="266" width="4" height="21" fill="#82867a" opacity="0.65" transform="rotate(60 810 266)"/>
<rect x="790" y="849" width="5" height="9" fill="#72805f" opacity="0.65" transform="rotate(20 790 849)"/>
<rect x="831" y="941" width="4" height="15" fill="#72805f" opacity="0.65" transform="rotate(5 831 941)"/>
<rect x="748" y="452" width="4" height="13" fill="#868678" opacity="0.65" transform="rotate(20 748 452)"/>
<rect x="611" y="844" width="7" height="18" fill="#82867a" opacity="0.65" transform="rotate(-5 611 844)"/>
<rect x="773" y="655" width="7" height="22" fill="#82867a" opacity="0.65" transform="rotate(60 773 655)"/>
<rect x="832" y="819" width="8" height="10" fill="#868678" opacity="0.65" transform="rotate(60 832 819)"/>
<rect x="677" y="759" width="4" height="8" fill="#72805f" opacity="0.65" transform="rotate(5 677 759)"/>
<rect x="559" y="1052" width="4" height="16" fill="#6f7d60" opacity="0.65" transform="rotate(-60 559 1052)"/>
<rect x="202" y="1207" width="5" height="7" fill="#72805f" opacity="0.65" transform="rotate(-25 202 1207)"/>
<rect x="348" y="1359" width="6" height="11" fill="#82867a" opacity="0.65" transform="rotate(-60 348 1359)"/>
<rect x="777" y="1311" width="6" height="17" fill="#84867c" opacity="0.65" transform="rotate(-25 777 1311)"/>
<rect x="601" y="271" width="6" height="20" fill="#84867c" opacity="0.65" transform="rotate(-5 601 271)"/>
<rect x="335" y="905" width="6" height="19" fill="#7f8873" opacity="0.65" transform="rotate(-30 335 905)"/>
<rect x="794" y="655" width="8" height="18" fill="#7f8873" opacity="0.65" transform="rotate(60 794 655)"/>
<rect x="748" y="992" width="7" height="18" fill="#868678" opacity="0.65" transform="rotate(60 748 992)"/>
<rect x="397" y="611" width="3" height="22" fill="#84867c" opacity="0.65" transform="rotate(-25 397 611)"/>
<rect x="629" y="716" width="4" height="13" fill="#72805f" opacity="0.65" transform="rotate(30 629 716)"/>
<rect x="638" y="1417" width="8" height="14" fill="#72805f" opacity="0.65" transform="rotate(20 638 1417)"/>
<rect x="604" y="1458" width="6" height="6" fill="#72805f" opacity="0.65" transform="rotate(5 604 1458)"/>
<rect x="295" y="1533" width="5" height="15" fill="#82867a" opacity="0.65" transform="rotate(-30 295 1533)"/>
<rect x="461" y="357" width="6" height="19" fill="#84867c" opacity="0.65" transform="rotate(-30 461 357)"/>
<rect x="747" y="415" width="4" height="20" fill="#6f7d60" opacity="0.65" transform="rotate(-25 747 415)"/>
<rect x="555" y="455" width="7" height="16" fill="#868678" opacity="0.65" transform="rotate(-60 555 455)"/>
<rect x="423" y="422" width="4" height="12" fill="#82867a" opacity="0.65" transform="rotate(-60 423 422)"/>
<rect x="470" y="990" width="6" height="12" fill="#84867c" opacity="0.65" transform="rotate(60 470 990)"/>
<rect x="624" y="861" width="7" height="8" fill="#868678" opacity="0.65" transform="rotate(-25 624 861)"/>
<rect x="597" y="1069" width="4" height="11" fill="#7f8873" opacity="0.65" transform="rotate(-30 597 1069)"/>
<rect x="577" y="377" width="7" height="19" fill="#72805f" opacity="0.65" transform="rotate(60 577 377)"/>
<rect x="239" y="1258" width="4" height="8" fill="#72805f" opacity="0.65" transform="rotate(60 239 1258)"/>
<rect x="656" y="1497" width="5" height="16" fill="#84867c" opacity="0.65" transform="rotate(60 656 1497)"/>
<rect x="413" y="1204" width="4" height="11" fill="#84867c" opacity="0.65" transform="rotate(60 413 1204)"/>
<rect x="698" y="962" width="6" height="12" fill="#868678" opacity="0.65" transform="rotate(60 698 962)"/>
<rect x="515" y="428" width="3" height="20" fill="#6f7d60" opacity="0.65" transform="rotate(-25 515 428)"/>
<rect x="686" y="1133" width="5" height="7" fill="#868678" opacity="0.65" transform="rotate(-60 686 1133)"/>
<rect x="588" y="974" width="5" height="15" fill="#84867c" opacity="0.65" transform="rotate(20 588 974)"/>
<rect x="844" y="380" width="4" height="17" fill="#6f7d60" opacity="0.65" transform="rotate(-30 844 380)"/>
<rect x="851" y="310" width="3" height="10" fill="#82867a" opacity="0.65" transform="rotate(-5 851 310)"/>
<rect x="572" y="1288" width="4" height="14" fill="#6f7d60" opacity="0.65" transform="rotate(-5 572 1288)"/>
<rect x="878" y="1340" width="3" height="19" fill="#82867a" opacity="0.65" transform="rotate(60 878 1340)"/>
<rect x="413" y="1235" width="5" height="19" fill="#72805f" opacity="0.65" transform="rotate(-5 413 1235)"/>
<rect x="817" y="1171" width="5" height="15" fill="#6f7d60" opacity="0.65" transform="rotate(60 817 1171)"/>
<rect x="872" y="250" width="7" height="17" fill="#7f8873" opacity="0.65" transform="rotate(20 872 250)"/>
<rect x="206" y="890" width="7" height="12" fill="#868678" opacity="0.65" transform="rotate(-30 206 890)"/>
<rect x="654" y="302" width="4" height="7" fill="#868678" opacity="0.65" transform="rotate(-5 654 302)"/>
<rect x="425" y="595" width="5" height="7" fill="#868678" opacity="0.65" transform="rotate(5 425 595)"/>
<rect x="606" y="961" width="6" height="14" fill="#6f7d60" opacity="0.65" transform="rotate(30 606 961)"/>
<rect x="778" y="342" width="4" height="12" fill="#82867a" opacity="0.65" transform="rotate(-5 778 342)"/>
<rect x="844" y="1146" width="4" height="10" fill="#82867a" opacity="0.65" transform="rotate(30 844 1146)"/>
<rect x="439" y="786" width="4" height="6" fill="#7f8873" opacity="0.65" transform="rotate(-60 439 786)"/>
<rect x="844" y="1311" width="5" height="18" fill="#6f7d60" opacity="0.65" transform="rotate(20 844 1311)"/>
<rect x="530" y="871" width="4" height="7" fill="#7f8873" opacity="0.65" transform="rotate(60 530 871)"/>
<rect x="330" y="1410" width="7" height="20" fill="#7f8873" opacity="0.65" transform="rotate(20 330 1410)"/>
<rect x="362" y="742" width="6" height="16" fill="#72805f" opacity="0.65" transform="rotate(-30 362 742)"/>
<rect x="607" y="1484" width="5" height="18" fill="#72805f" opacity="0.65" transform="rotate(60 607 1484)"/>
<rect x="836" y="688" width="5" height="9" fill="#84867c" opacity="0.65" transform="rotate(-25 836 688)"/>
<rect x="523" y="1577" width="5" height="10" fill="#868678" opacity="0.65" transform="rotate(-25 523 1577)"/>
<rect x="202" y="533" width="5" height="10" fill="#72805f" opacity="0.65" transform="rotate(-60 202 533)"/>
<rect x="574" y="342" width="6" height="17" fill="#6f7d60" opacity="0.65" transform="rotate(60 574 342)"/>
<rect x="251" y="996" width="7" height="12" fill="#868678" opacity="0.65" transform="rotate(-60 251 996)"/>
<rect x="837" y="1270" width="5" height="6" fill="#72805f" opacity="0.65" transform="rotate(-60 837 1270)"/>
<rect x="211" y="307" width="3" height="15" fill="#868678" opacity="0.65" transform="rotate(5 211 307)"/>
<rect x="267" y="1491" width="3" height="17" fill="#72805f" opacity="0.65" transform="rotate(-25 267 1491)"/>
<rect x="301" y="346" width="8" height="19" fill="#7f8873" opacity="0.65" transform="rotate(5 301 346)"/>
<rect x="756" y="1559" width="8" height="15" fill="#72805f" opacity="0.65" transform="rotate(60 756 1559)"/>
<rect x="887" y="1233" width="6" height="19" fill="#7f8873" opacity="0.65" transform="rotate(30 887 1233)"/>
<rect x="259" y="1572" width="6" height="20" fill="#84867c" opacity="0.65" transform="rotate(20 259 1572)"/>
<rect x="759" y="1365" width="5" height="13" fill="#868678" opacity="0.65" transform="rotate(-60 759 1365)"/>
<rect x="500" y="244" width="3" height="17" fill="#82867a" opacity="0.65" transform="rotate(20 500 244)"/>
<rect x="379" y="1338" width="7" height="20" fill="#82867a" opacity="0.65" transform="rotate(-30 379 1338)"/>
<rect x="889" y="277" width="7" height="11" fill="#84867c" opacity="0.65" transform="rotate(-5 889 277)"/>
<rect x="384" y="569" width="4" height="13" fill="#84867c" opacity="0.65" transform="rotate(30 384 569)"/>
<rect x="275" y="543" width="5" height="22" fill="#72805f" opacity="0.65" transform="rotate(-5 275 543)"/>
<rect x="421" y="886" width="4" height="12" fill="#6f7d60" opacity="0.65" transform="rotate(20 421 886)"/>
<rect x="427" y="1323" width="4" height="8" fill="#6f7d60" opacity="0.65" transform="rotate(-25 427 1323)"/>
<rect x="517" y="1489" width="4" height="18" fill="#6f7d60" opacity="0.65" transform="rotate(60 517 1489)"/>
<rect x="797" y="354" width="6" height="13" fill="#7f8873" opacity="0.65" transform="rotate(-5 797 354)"/>
<rect x="680" y="1069" width="5" height="9" fill="#7f8873" opacity="0.65" transform="rotate(-60 680 1069)"/>
<rect x="585" y="1459" width="8" height="15" fill="#72805f" opacity="0.65" transform="rotate(60 585 1459)"/>
<rect x="356" y="1097" width="7" height="10" fill="#6f7d60" opacity="0.65" transform="rotate(-5 356 1097)"/>
<rect x="552" y="913" width="6" height="19" fill="#82867a" opacity="0.65" transform="rotate(30 552 913)"/>
<rect x="359" y="1375" width="5" height="7" fill="#84867c" opacity="0.65" transform="rotate(5 359 1375)"/>
<rect x="326" y="869" width="8" height="20" fill="#7f8873" opacity="0.65" transform="rotate(-30 326 869)"/>
<rect x="482" y="1028" width="6" height="9" fill="#868678" opacity="0.65" transform="rotate(20 482 1028)"/>
<rect x="342" y="1404" width="5" height="21" fill="#72805f" opacity="0.65" transform="rotate(30 342 1404)"/>
<rect x="579" y="598" width="7" height="6" fill="#82867a" opacity="0.65" transform="rotate(60 579 598)"/>
<rect x="721" y="1390" width="3" height="17" fill="#84867c" opacity="0.65" transform="rotate(-25 721 1390)"/>
<rect x="217" y="1548" width="8" height="19" fill="#6f7d60" opacity="0.65" transform="rotate(5 217 1548)"/>
<rect x="449" y="1380" width="3" height="16" fill="#868678" opacity="0.65" transform="rotate(5 449 1380)"/>
<rect x="299" y="288" width="7" height="17" fill="#6f7d60" opacity="0.65" transform="rotate(5 299 288)"/>
<rect x="419" y="603" width="8" height="15" fill="#84867c" opacity="0.65" transform="rotate(-60 419 603)"/>
<rect x="438" y="714" width="3" height="22" fill="#7f8873" opacity="0.65" transform="rotate(-30 438 714)"/>
<rect x="567" y="1405" width="7" height="14" fill="#84867c" opacity="0.65" transform="rotate(-25 567 1405)"/>
<rect x="388" y="770" width="7" height="15" fill="#6f7d60" opacity="0.65" transform="rotate(30 388 770)"/>
<rect x="477" y="541" width="6" height="16" fill="#6f7d60" opacity="0.65" transform="rotate(-5 477 541)"/>
<rect x="686" y="1555" width="6" height="9" fill="#868678" opacity="0.65" transform="rotate(-30 686 1555)"/>
<rect x="257" y="1261" width="4" height="11" fill="#72805f" opacity="0.65" transform="rotate(-5 257 1261)"/>
<rect x="892" y="322" width="5" height="8" fill="#7f8873" opacity="0.65" transform="rotate(30 892 322)"/>
<rect x="691" y="947" width="7" height="11" fill="#7f8873" opacity="0.65" transform="rotate(30 691 947)"/>
<rect x="721" y="1196" width="7" height="11" fill="#72805f" opacity="0.65" transform="rotate(-5 721 1196)"/>
<rect x="601" y="795" width="6" height="7" fill="#84867c" opacity="0.65" transform="rotate(-25 601 795)"/>
<rect x="418" y="408" width="3" height="17" fill="#6f7d60" opacity="0.65" transform="rotate(-30 418 408)"/>
<rect x="344" y="1222" width="7" height="16" fill="#82867a" opacity="0.65" transform="rotate(-5 344 1222)"/>
<rect x="476" y="606" width="4" height="20" fill="#6f7d60" opacity="0.65" transform="rotate(5 476 606)"/>
<rect x="853" y="474" width="4" height="14" fill="#84867c" opacity="0.65" transform="rotate(-60 853 474)"/>
<rect x="353" y="549" width="5" height="20" fill="#6f7d60" opacity="0.65" transform="rotate(60 353 549)"/>
<rect x="655" y="1238" width="6" height="18" fill="#84867c" opacity="0.65" transform="rotate(-25 655 1238)"/>
<rect x="895" y="1239" width="6" height="20" fill="#82867a" opacity="0.65" transform="rotate(5 895 1239)"/>
<rect x="312" y="977" width="5" height="19" fill="#7f8873" opacity="0.65" transform="rotate(-30 312 977)"/>
<rect x="770" y="1172" width="7" height="8" fill="#72805f" opacity="0.65" transform="rotate(60 770 1172)"/>
<rect x="429" y="440" width="6" height="11" fill="#868678" opacity="0.65" transform="rotate(5 429 440)"/>
<rect x="664" y="1125" width="3" height="14" fill="#6f7d60" opacity="0.65" transform="rotate(30 664 1125)"/>
<rect x="783" y="898" width="4" height="21" fill="#7f8873" opacity="0.65" transform="rotate(-25 783 898)"/>
<rect x="204" y="491" width="6" height="9" fill="#868678" opacity="0.65" transform="rotate(-5 204 491)"/>
<rect x="571" y="1135" width="4" height="15" fill="#72805f" opacity="0.65" transform="rotate(-25 571 1135)"/>
<rect x="820" y="397" width="5" height="8" fill="#868678" opacity="0.65" transform="rotate(-5 820 397)"/>
<rect x="395" y="508" width="5" height="8" fill="#7f8873" opacity="0.65" transform="rotate(30 395 508)"/>
<rect x="377" y="799" width="5" height="14" fill="#82867a" opacity="0.65" transform="rotate(20 377 799)"/>
<rect x="805" y="444" width="6" height="8" fill="#6f7d60" opacity="0.65" transform="rotate(30 805 444)"/>
<rect x="546" y="1536" width="4" height="9" fill="#7f8873" opacity="0.65" transform="rotate(-25 546 1536)"/>
<rect x="528" y="1184" width="5" height="17" fill="#82867a" opacity="0.65" transform="rotate(-25 528 1184)"/>
<rect x="614" y="960" width="3" height="8" fill="#868678" opacity="0.65" transform="rotate(-25 614 960)"/>
<rect x="274" y="743" width="8" height="13" fill="#72805f" opacity="0.65" transform="rotate(60 274 743)"/>
<rect x="862" y="778" width="5" height="15" fill="#6f7d60" opacity="0.65" transform="rotate(20 862 778)"/>
<rect x="739" y="973" width="7" height="16" fill="#84867c" opacity="0.65" transform="rotate(-60 739 973)"/>
<rect x="732" y="534" width="6" height="13" fill="#82867a" opacity="0.65" transform="rotate(-5 732 534)"/>
<rect x="747" y="541" width="7" height="14" fill="#7f8873" opacity="0.65" transform="rotate(-5 747 541)"/>
<rect x="695" y="1226" width="8" height="22" fill="#6f7d60" opacity="0.65" transform="rotate(-60 695 1226)"/>
<rect x="697" y="1415" width="6" height="7" fill="#7f8873" opacity="0.65" transform="rotate(60 697 1415)"/>
<rect x="550" y="1129" width="4" height="19" fill="#72805f" opacity="0.65" transform="rotate(-25 550 1129)"/>
<rect x="543" y="342" width="7" height="13" fill="#72805f" opacity="0.65" transform="rotate(5 543 342)"/>
<rect x="550" y="961" width="5" height="8" fill="#84867c" opacity="0.65" transform="rotate(-25 550 961)"/>
<rect x="879" y="623" width="5" height="11" fill="#6f7d60" opacity="0.65" transform="rotate(-5 879 623)"/>
<rect x="545" y="1322" width="3" height="8" fill="#82867a" opacity="0.65" transform="rotate(60 545 1322)"/>
<rect x="357" y="690" width="4" height="15" fill="#868678" opacity="0.65" transform="rotate(-30 357 690)"/>
<rect x="649" y="1049" width="7" height="11" fill="#84867c" opacity="0.65" transform="rotate(20 649 1049)"/>
<rect x="574" y="1032" width="3" height="18" fill="#72805f" opacity="0.65" transform="rotate(-5 574 1032)"/>
<rect x="650" y="626" width="8" height="12" fill="#72805f" opacity="0.65" transform="rotate(30 650 626)"/>
<rect x="356" y="608" width="5" height="22" fill="#84867c" opacity="0.65" transform="rotate(30 356 608)"/>
<rect x="528" y="1417" width="8" height="14" fill="#6f7d60" opacity="0.65" transform="rotate(-60 528 1417)"/>
<rect x="755" y="399" width="7" height="12" fill="#82867a" opacity="0.65" transform="rotate(5 755 399)"/>
<rect x="255" y="1432" width="5" height="20" fill="#7f8873" opacity="0.65" transform="rotate(20 255 1432)"/>
<rect x="235" y="463" width="7" height="15" fill="#868678" opacity="0.65" transform="rotate(20 235 463)"/>
<rect x="357" y="602" width="3" height="12" fill="#6f7d60" opacity="0.65" transform="rotate(30 357 602)"/>
<rect x="556" y="1069" width="7" height="21" fill="#868678" opacity="0.65" transform="rotate(-30 556 1069)"/>
<rect x="375" y="1106" width="8" height="16" fill="#868678" opacity="0.65" transform="rotate(5 375 1106)"/>
<rect x="294" y="253" width="4" height="19" fill="#72805f" opacity="0.65" transform="rotate(-60 294 253)"/>
<rect x="400" y="1506" width="3" height="11" fill="#7f8873" opacity="0.65" transform="rotate(-25 400 1506)"/>
<rect x="361" y="586" width="4" height="18" fill="#84867c" opacity="0.65" transform="rotate(20 361 586)"/>
<rect x="373" y="1564" width="4" height="20" fill="#82867a" opacity="0.65" transform="rotate(-25 373 1564)"/>
<rect x="420" y="680" width="5" height="9" fill="#82867a" opacity="0.65" transform="rotate(-60 420 680)"/>
<rect x="868" y="788" width="7" height="14" fill="#84867c" opacity="0.65" transform="rotate(-25 868 788)"/>
<rect x="496" y="1499" width="4" height="20" fill="#82867a" opacity="0.65" transform="rotate(30 496 1499)"/>
<rect x="233" y="357" width="3" height="12" fill="#868678" opacity="0.65" transform="rotate(60 233 357)"/>
<rect x="269" y="1189" width="7" height="8" fill="#868678" opacity="0.65" transform="rotate(-25 269 1189)"/>
<rect x="532" y="1255" width="7" height="7" fill="#72805f" opacity="0.65" transform="rotate(-25 532 1255)"/>
<rect x="284" y="384" width="3" height="10" fill="#6f7d60" opacity="0.65" transform="rotate(-30 284 384)"/>
<rect x="878" y="1416" width="4" height="19" fill="#7f8873" opacity="0.65" transform="rotate(30 878 1416)"/>
<rect x="619" y="401" width="4" height="8" fill="#868678" opacity="0.65" transform="rotate(20 619 401)"/>
<rect x="637" y="1407" width="3" height="6" fill="#82867a" opacity="0.65" transform="rotate(-60 637 1407)"/>
<rect x="602" y="525" width="8" height="8" fill="#72805f" opacity="0.65" transform="rotate(30 602 525)"/>
<rect x="594" y="1068" width="3" height="16" fill="#868678" opacity="0.65" transform="rotate(-5 594 1068)"/>
<rect x="740" y="943" width="4" height="10" fill="#6f7d60" opacity="0.65" transform="rotate(-30 740 943)"/>
<rect x="256" y="385" width="4" height="19" fill="#868678" opacity="0.65" transform="rotate(-5 256 385)"/>
<rect x="450" y="1551" width="6" height="10" fill="#868678" opacity="0.65" transform="rotate(5 450 1551)"/>
<rect x="799" y="741" width="5" height="15" fill="#868678" opacity="0.65" transform="rotate(-5 799 741)"/>
<rect x="327" y="1032" width="5" height="14" fill="#6f7d60" opacity="0.65" transform="rotate(20 327 1032)"/>
<rect x="214" y="930" width="5" height="16" fill="#7f8873" opacity="0.65" transform="rotate(-25 214 930)"/>
<rect x="402" y="588" width="6" height="15" fill="#82867a" opacity="0.65" transform="rotate(-5 402 588)"/>
<rect x="736" y="919" width="5" height="10" fill="#72805f" opacity="0.65" transform="rotate(60 736 919)"/>
<rect x="374" y="337" width="6" height="6" fill="#6f7d60" opacity="0.65" transform="rotate(-60 374 337)"/>
<rect x="436" y="840" width="6" height="9" fill="#72805f" opacity="0.65" transform="rotate(30 436 840)"/>
<rect x="751" y="1166" width="6" height="8" fill="#82867a" opacity="0.65" transform="rotate(-60 751 1166)"/>
<rect x="801" y="651" width="6" height="14" fill="#7f8873" opacity="0.65" transform="rotate(-5 801 651)"/>
<rect x="528" y="944" width="4" height="13" fill="#7f8873" opacity="0.65" transform="rotate(-5 528 944)"/>
<rect x="202" y="721" width="4" height="16" fill="#868678" opacity="0.65" transform="rotate(5 202 721)"/>
<rect x="450" y="580" width="4" height="12" fill="#72805f" opacity="0.65" transform="rotate(-5 450 580)"/>
<rect x="618" y="1127" width="6" height="7" fill="#7f8873" opacity="0.65" transform="rotate(-30 618 1127)"/>
<rect x="621" y="300" width="4" height="20" fill="#868678" opacity="0.65" transform="rotate(20 621 300)"/>
<rect x="335" y="1382" width="8" height="21" fill="#84867c" opacity="0.65" transform="rotate(-60 335 1382)"/>
<rect x="524" y="1342" width="5" height="8" fill="#868678" opacity="0.65" transform="rotate(60 524 1342)"/>
<rect x="205" y="327" width="6" height="21" fill="#868678" opacity="0.65" transform="rotate(5 205 327)"/>
<rect x="813" y="383" width="6" height="9" fill="#72805f" opacity="0.65" transform="rotate(20 813 383)"/>
<rect x="829" y="1207" width="7" height="20" fill="#82867a" opacity="0.65" transform="rotate(20 829 1207)"/>
<rect x="738" y="343" width="7" height="15" fill="#72805f" opacity="0.65" transform="rotate(5 738 343)"/>
<rect x="892" y="677" width="8" height="19" fill="#868678" opacity="0.65" transform="rotate(20 892 677)"/>
<rect x="545" y="684" width="6" height="17" fill="#7f8873" opacity="0.65" transform="rotate(-60 545 684)"/>
<rect x="843" y="658" width="6" height="9" fill="#72805f" opacity="0.65" transform="rotate(5 843 658)"/>
<rect x="454" y="755" width="7" height="14" fill="#84867c" opacity="0.65" transform="rotate(-60 454 755)"/>
<rect x="813" y="1106" width="4" height="8" fill="#82867a" opacity="0.65" transform="rotate(60 813 1106)"/>
<rect x="234" y="1197" width="6" height="14" fill="#6f7d60" opacity="0.65" transform="rotate(30 234 1197)"/>
<rect x="565" y="489" width="6" height="8" fill="#72805f" opacity="0.65" transform="rotate(-60 565 489)"/>
<rect x="796" y="1013" width="6" height="17" fill="#7f8873" opacity="0.65" transform="rotate(20 796 1013)"/>
<rect x="469" y="991" width="3" height="12" fill="#84867c" opacity="0.65" transform="rotate(-60 469 991)"/>
<rect x="897" y="1475" width="6" height="9" fill="#82867a" opacity="0.65" transform="rotate(-60 897 1475)"/>
<rect x="507" y="395" width="4" height="22" fill="#6f7d60" opacity="0.65" transform="rotate(-60 507 395)"/>
<rect x="406" y="1345" width="7" height="20" fill="#82867a" opacity="0.65" transform="rotate(-60 406 1345)"/>
<rect x="208" y="742" width="6" height="18" fill="#868678" opacity="0.65" transform="rotate(-60 208 742)"/>
<rect x="543" y="982" width="7" height="7" fill="#72805f" opacity="0.65" transform="rotate(-25 543 982)"/>
<rect x="680" y="967" width="5" height="10" fill="#82867a" opacity="0.65" transform="rotate(-30 680 967)"/>
<rect x="439" y="1515" width="8" height="22" fill="#72805f" opacity="0.65" transform="rotate(30 439 1515)"/>
<rect x="273" y="729" width="3" height="14" fill="#7f8873" opacity="0.65" transform="rotate(30 273 729)"/>
<rect x="455" y="616" width="8" height="7" fill="#868678" opacity="0.65" transform="rotate(30 455 616)"/>
<rect x="248" y="1533" width="6" height="12" fill="#7f8873" opacity="0.65" transform="rotate(-60 248 1533)"/>
<rect x="626" y="957" width="7" height="20" fill="#72805f" opacity="0.65" transform="rotate(30 626 957)"/>
<rect x="206" y="1299" width="6" height="16" fill="#84867c" opacity="0.65" transform="rotate(5 206 1299)"/>
<rect x="253" y="1462" width="5" height="14" fill="#84867c" opacity="0.65" transform="rotate(30 253 1462)"/>
<rect x="604" y="522" width="5" height="14" fill="#868678" opacity="0.65" transform="rotate(20 604 522)"/>
<rect x="291" y="1418" width="5" height="21" fill="#82867a" opacity="0.65" transform="rotate(60 291 1418)"/>
<rect x="702" y="985" width="7" height="19" fill="#6f7d60" opacity="0.65" transform="rotate(20 702 985)"/>
<rect x="807" y="334" width="5" height="18" fill="#82867a" opacity="0.65" transform="rotate(-60 807 334)"/>
<rect x="537" y="972" width="3" height="13" fill="#6f7d60" opacity="0.65" transform="rotate(-25 537 972)"/>
<rect x="605" y="478" width="8" height="12" fill="#84867c" opacity="0.65" transform="rotate(30 605 478)"/>
<rect x="641" y="838" width="5" height="21" fill="#72805f" opacity="0.65" transform="rotate(5 641 838)"/>
<rect x="900" y="520" width="6" height="7" fill="#7f8873" opacity="0.65" transform="rotate(-5 900 520)"/>
<rect x="230" y="795" width="8" height="20" fill="#6f7d60" opacity="0.65" transform="rotate(-30 230 795)"/>
<rect x="884" y="988" width="7" height="14" fill="#84867c" opacity="0.65" transform="rotate(5 884 988)"/>
<rect x="505" y="809" width="5" height="14" fill="#72805f" opacity="0.65" transform="rotate(-30 505 809)"/>
<rect x="867" y="499" width="4" height="15" fill="#72805f" opacity="0.65" transform="rotate(30 867 499)"/>
<rect x="705" y="294" width="6" height="12" fill="#72805f" opacity="0.65" transform="rotate(-5 705 294)"/>
<rect x="350" y="970" width="4" height="20" fill="#7f8873" opacity="0.65" transform="rotate(-5 350 970)"/>
<rect x="645" y="689" width="4" height="15" fill="#72805f" opacity="0.65" transform="rotate(-5 645 689)"/>
<rect x="495" y="642" width="5" height="12" fill="#868678" opacity="0.65" transform="rotate(20 495 642)"/>
<rect x="820" y="1265" width="4" height="19" fill="#82867a" opacity="0.65" transform="rotate(20 820 1265)"/>
<rect x="524" y="1193" width="7" height="18" fill="#84867c" opacity="0.65" transform="rotate(-25 524 1193)"/>
<rect x="673" y="823" width="6" height="17" fill="#7f8873" opacity="0.65" transform="rotate(-25 673 823)"/>
<rect x="794" y="887" width="8" height="8" fill="#84867c" opacity="0.65" transform="rotate(-25 794 887)"/>
<rect x="480" y="325" width="8" height="11" fill="#868678" opacity="0.65" transform="rotate(-60 480 325)"/>
<rect x="215" y="1414" width="3" height="20" fill="#82867a" opacity="0.65" transform="rotate(60 215 1414)"/>
<rect x="874" y="1429" width="8" height="19" fill="#84867c" opacity="0.65" transform="rotate(20 874 1429)"/>
<rect x="334" y="750" width="4" height="10" fill="#72805f" opacity="0.65" transform="rotate(-5 334 750)"/>
<rect x="296" y="1030" width="6" height="14" fill="#82867a" opacity="0.65" transform="rotate(-25 296 1030)"/>
<rect x="397" y="823" width="6" height="18" fill="#868678" opacity="0.65" transform="rotate(-60 397 823)"/>
<rect x="229" y="341" width="7" height="8" fill="#72805f" opacity="0.65" transform="rotate(-30 229 341)"/>
<rect x="256" y="902" width="6" height="19" fill="#82867a" opacity="0.65" transform="rotate(-5 256 902)"/>
<rect x="330" y="655" width="7" height="10" fill="#6f7d60" opacity="0.65" transform="rotate(20 330 655)"/>
<rect x="222" y="352" width="7" height="14" fill="#84867c" opacity="0.65" transform="rotate(5 222 352)"/>
<rect x="424" y="1574" width="7" height="7" fill="#6f7d60" opacity="0.65" transform="rotate(-30 424 1574)"/>
<rect x="470" y="1205" width="7" height="7" fill="#82867a" opacity="0.65" transform="rotate(-5 470 1205)"/>
<rect x="851" y="313" width="6" height="15" fill="#82867a" opacity="0.65" transform="rotate(20 851 313)"/>
<rect x="892" y="927" width="5" height="19" fill="#82867a" opacity="0.65" transform="rotate(-25 892 927)"/>
<rect x="894" y="1138" width="6" height="6" fill="#7f8873" opacity="0.65" transform="rotate(-30 894 1138)"/>
<rect x="350" y="1527" width="3" height="8" fill="#84867c" opacity="0.65" transform="rotate(5 350 1527)"/>
<rect x="353" y="1194" width="4" height="17" fill="#868678" opacity="0.65" transform="rotate(-25 353 1194)"/>
<rect x="698" y="1533" width="4" height="17" fill="#7f8873" opacity="0.65" transform="rotate(60 698 1533)"/>
<rect x="826" y="1362" width="7" height="16" fill="#72805f" opacity="0.65" transform="rotate(5 826 1362)"/>
<rect x="836" y="1558" width="8" height="11" fill="#84867c" opacity="0.65" transform="rotate(5 836 1558)"/>
<rect x="788" y="1331" width="5" height="12" fill="#7f8873" opacity="0.65" transform="rotate(30 788 1331)"/>
<rect x="222" y="258" width="5" height="8" fill="#82867a" opacity="0.65" transform="rotate(-25 222 258)"/>
<rect x="226" y="1042" width="3" height="12" fill="#6f7d60" opacity="0.65" transform="rotate(-5 226 1042)"/>
<rect x="753" y="275" width="5" height="18" fill="#84867c" opacity="0.65" transform="rotate(-5 753 275)"/>
<rect x="523" y="800" width="6" height="8" fill="#6f7d60" opacity="0.65" transform="rotate(5 523 800)"/>
<rect x="850" y="1275" width="6" height="12" fill="#84867c" opacity="0.65" transform="rotate(-25 850 1275)"/>
<rect x="569" y="1266" width="6" height="16" fill="#72805f" opacity="0.65" transform="rotate(5 569 1266)"/>
<rect x="765" y="893" width="7" height="9" fill="#72805f" opacity="0.65" transform="rotate(30 765 893)"/>
<rect x="514" y="651" width="7" height="12" fill="#7f8873" opacity="0.65" transform="rotate(-5 514 651)"/>
<rect x="357" y="897" width="7" height="12" fill="#6f7d60" opacity="0.65" transform="rotate(5 357 897)"/>
<rect x="740" y="531" width="5" height="19" fill="#72805f" opacity="0.65" transform="rotate(20 740 531)"/>
<rect x="345" y="327" width="4" height="8" fill="#84867c" opacity="0.65" transform="rotate(20 345 327)"/>
<rect x="229" y="609" width="6" height="9" fill="#72805f" opacity="0.65" transform="rotate(30 229 609)"/>
<rect x="833" y="845" width="4" height="16" fill="#84867c" opacity="0.65" transform="rotate(-30 833 845)"/>
<rect x="654" y="361" width="6" height="11" fill="#6f7d60" opacity="0.65" transform="rotate(20 654 361)"/>
<rect x="837" y="1066" width="4" height="9" fill="#6f7d60" opacity="0.65" transform="rotate(20 837 1066)"/>
<rect x="244" y="807" width="4" height="13" fill="#868678" opacity="0.65" transform="rotate(-30 244 807)"/>
<rect x="735" y="618" width="6" height="12" fill="#7f8873" opacity="0.65" transform="rotate(-25 735 618)"/>
<rect x="571" y="1147" width="4" height="19" fill="#82867a" opacity="0.65" transform="rotate(-30 571 1147)"/>
<rect x="419" y="1395" width="8" height="12" fill="#868678" opacity="0.65" transform="rotate(-30 419 1395)"/>
<rect x="764" y="415" width="3" height="17" fill="#84867c" opacity="0.65" transform="rotate(20 764 415)"/>
<rect x="335" y="599" width="6" height="9" fill="#72805f" opacity="0.65" transform="rotate(-25 335 599)"/>
<rect x="554" y="417" width="5" height="8" fill="#868678" opacity="0.65" transform="rotate(-25 554 417)"/>
<rect x="320" y="1488" width="7" height="15" fill="#868678" opacity="0.65" transform="rotate(20 320 1488)"/>
<rect x="319" y="677" width="4" height="9" fill="#868678" opacity="0.65" transform="rotate(-30 319 677)"/>
<rect x="427" y="1284" width="6" height="19" fill="#84867c" opacity="0.65" transform="rotate(60 427 1284)"/>
<rect x="793" y="930" width="6" height="10" fill="#6f7d60" opacity="0.65" transform="rotate(-5 793 930)"/>
<rect x="615" y="1540" width="4" height="10" fill="#84867c" opacity="0.65" transform="rotate(20 615 1540)"/>
<rect x="642" y="982" width="7" height="11" fill="#7f8873" opacity="0.65" transform="rotate(5 642 982)"/>
<rect x="591" y="1292" width="8" height="8" fill="#868678" opacity="0.65" transform="rotate(-60 591 1292)"/>
<rect x="542" y="460" width="5" height="16" fill="#6f7d60" opacity="0.65" transform="rotate(-30 542 460)"/>
<rect x="715" y="606" width="6" height="6" fill="#6f7d60" opacity="0.65" transform="rotate(-25 715 606)"/>
<rect x="692" y="1547" width="5" height="18" fill="#868678" opacity="0.65" transform="rotate(5 692 1547)"/>
<rect x="251" y="1353" width="7" height="11" fill="#6f7d60" opacity="0.65" transform="rotate(-25 251 1353)"/>
<rect x="802" y="1439" width="3" height="19" fill="#82867a" opacity="0.65" transform="rotate(-30 802 1439)"/>
<rect x="761" y="1174" width="5" height="20" fill="#72805f" opacity="0.65" transform="rotate(20 761 1174)"/>
<rect x="714" y="1152" width="5" height="14" fill="#868678" opacity="0.65" transform="rotate(30 714 1152)"/>
<rect x="867" y="914" width="4" height="11" fill="#72805f" opacity="0.65" transform="rotate(-25 867 914)"/>
<rect x="557" y="1019" width="6" height="6" fill="#7f8873" opacity="0.65" transform="rotate(-60 557 1019)"/>
<rect x="879" y="520" width="5" height="7" fill="#72805f" opacity="0.65" transform="rotate(5 879 520)"/>
<rect x="777" y="285" width="7" height="19" fill="#82867a" opacity="0.65" transform="rotate(-60 777 285)"/>
<rect x="561" y="831" width="6" height="17" fill="#868678" opacity="0.65" transform="rotate(60 561 831)"/>
<rect x="677" y="390" width="3" height="10" fill="#84867c" opacity="0.65" transform="rotate(-25 677 390)"/>
<rect x="777" y="580" width="8" height="17" fill="#82867a" opacity="0.65" transform="rotate(60 777 580)"/>
<rect x="784" y="1467" width="7" height="7" fill="#84867c" opacity="0.65" transform="rotate(30 784 1467)"/>
<rect x="683" y="702" width="4" height="11" fill="#6f7d60" opacity="0.65" transform="rotate(5 683 702)"/>
<rect x="594" y="423" width="4" height="14" fill="#84867c" opacity="0.65" transform="rotate(-30 594 423)"/>
<rect x="282" y="1147" width="4" height="18" fill="#72805f" opacity="0.65" transform="rotate(60 282 1147)"/>
<rect x="726" y="1023" width="3" height="15" fill="#868678" opacity="0.65" transform="rotate(-60 726 1023)"/>
<rect x="405" y="1599" width="6" height="20" fill="#6f7d60" opacity="0.65" transform="rotate(-25 405 1599)"/>
<rect x="327" y="1587" width="7" height="14" fill="#84867c" opacity="0.65" transform="rotate(-60 327 1587)"/>
<rect x="619" y="1309" width="7" height="17" fill="#84867c" opacity="0.65" transform="rotate(-25 619 1309)"/>
<rect x="535" y="606" width="6" height="12" fill="#7f8873" opacity="0.65" transform="rotate(20 535 606)"/>
<rect x="577" y="1040" width="7" height="11" fill="#72805f" opacity="0.65" transform="rotate(20 577 1040)"/>
<rect x="646" y="973" width="3" height="10" fill="#6f7d60" opacity="0.65" transform="rotate(60 646 973)"/>
<rect x="212" y="1396" width="6" height="11" fill="#72805f" opacity="0.65" transform="rotate(-60 212 1396)"/>
<rect x="550" y="1388" width="4" height="22" fill="#868678" opacity="0.65" transform="rotate(-60 550 1388)"/>
<rect x="788" y="1008" width="7" height="19" fill="#868678" opacity="0.65" transform="rotate(60 788 1008)"/>
<rect x="846" y="427" width="6" height="20" fill="#868678" opacity="0.65" transform="rotate(-30 846 427)"/>
<rect x="618" y="910" width="4" height="16" fill="#84867c" opacity="0.65" transform="rotate(-5 618 910)"/>
<rect x="257" y="303" width="8" height="10" fill="#6f7d60" opacity="0.65" transform="rotate(-30 257 303)"/>
<rect x="609" y="817" width="7" height="18" fill="#72805f" opacity="0.65" transform="rotate(5 609 817)"/>
<rect x="362" y="888" width="4" height="20" fill="#6f7d60" opacity="0.65" transform="rotate(20 362 888)"/>
<rect x="243" y="1445" width="7" height="14" fill="#868678" opacity="0.65" transform="rotate(5 243 1445)"/>
<rect x="720" y="990" width="4" height="9" fill="#82867a" opacity="0.65" transform="rotate(5 720 990)"/>
<rect x="203" y="948" width="7" height="18" fill="#82867a" opacity="0.65" transform="rotate(-30 203 948)"/>
<rect x="522" y="933" width="6" height="20" fill="#868678" opacity="0.65" transform="rotate(-30 522 933)"/>
<rect x="749" y="1165" width="4" height="10" fill="#72805f" opacity="0.65" transform="rotate(-60 749 1165)"/>
<rect x="448" y="908" width="4" height="22" fill="#6f7d60" opacity="0.65" transform="rotate(-60 448 908)"/>
<rect x="460" y="1192" width="8" height="9" fill="#6f7d60" opacity="0.65" transform="rotate(-60 460 1192)"/>
<rect x="871" y="750" width="7" height="19" fill="#72805f" opacity="0.65" transform="rotate(20 871 750)"/>
<rect x="532" y="1057" width="5" height="12" fill="#6f7d60" opacity="0.65" transform="rotate(-5 532 1057)"/>
<rect x="826" y="1487" width="7" height="9" fill="#72805f" opacity="0.65" transform="rotate(20 826 1487)"/>
<rect x="205" y="513" width="5" height="9" fill="#7f8873" opacity="0.65" transform="rotate(5 205 513)"/>
<rect x="292" y="1128" width="5" height="10" fill="#6f7d60" opacity="0.65" transform="rotate(-30 292 1128)"/>
<rect x="430" y="272" width="7" height="18" fill="#72805f" opacity="0.65" transform="rotate(-60 430 272)"/>
<rect x="375" y="791" width="3" height="20" fill="#84867c" opacity="0.65" transform="rotate(30 375 791)"/>
<rect x="236" y="625" width="5" height="22" fill="#82867a" opacity="0.65" transform="rotate(-25 236 625)"/>
<rect x="739" y="550" width="7" height="22" fill="#82867a" opacity="0.65" transform="rotate(20 739 550)"/>
<rect x="375" y="341" width="7" height="18" fill="#82867a" opacity="0.65" transform="rotate(30 375 341)"/>
<rect x="796" y="292" width="8" height="7" fill="#82867a" opacity="0.65" transform="rotate(-25 796 292)"/>
<rect x="312" y="431" width="5" height="19" fill="#84867c" opacity="0.65" transform="rotate(-30 312 431)"/>
<rect x="581" y="1326" width="5" height="7" fill="#84867c" opacity="0.65" transform="rotate(20 581 1326)"/>
<path d="M200,0 L900,0 L900,222 L842,227 L783,235 L625,250 L512,262 L383,280 L300,322 L200,362 Z" fill="#646b6b" />
<path d="M200,0 L900,0 L900,8 L798,12 L754,29 L725,58 L690,70 L560,84 L500,94 L400,97 L300,99 L200,103 Z" fill="#5d737a" />
<path d="M200,98 L300,94 L400,92 L500,94 L560,84 L690,70 L725,58 L732,111 L754,137 L812,146 L868,122 L900,117 L900,222 L842,227 L783,235 L625,250 L512,262 L383,280 L300,322 L200,362 Z" fill="url(#dash)" />
<path d="M560,86 L690,72 L725,60 L731,114 L745,140 L718,170 L705,205 L695,240 L675,246 L672,210 L668,170 L660,130 L640,100 L600,88 Z" fill="#5d737a" />
<path d="M500,100 L560,86 L582,92 L560,130 L520,140 L505,125 Z" fill="#5d737a" />
<path d="M200,190 L240,195 L275,205 L300,225 L335,240 L380,232 L420,215 L455,190 L485,165 L505,135" fill="none" stroke="#5d737a" stroke-width="10" stroke-linejoin="round" stroke-linecap="round" />
<path d="M200,240 L222,262 L228,300 L250,318 L290,306 L340,288 L383,278" fill="none" stroke="#5d737a" stroke-width="9" stroke-linejoin="round" stroke-linecap="round" />
<path d="M300,225 L320,260 L360,270 L400,262 L450,250 L500,240 L540,225 L580,205 L620,190" fill="none" stroke="#5d737a" stroke-width="7" stroke-linejoin="round" stroke-linecap="round" />
<path d="M745,135 L780,165 L830,190 L870,208 L900,212" fill="none" stroke="#5d737a" stroke-width="12" stroke-linejoin="round" stroke-linecap="round" />
<path d="M690,236 L740,232 L800,230 L842,227" fill="none" stroke="#5d737a" stroke-width="8" stroke-linejoin="round" stroke-linecap="round" />
<path d="M640,190 L660,140 L665,110" fill="none" stroke="#5d737a" stroke-width="10" stroke-linejoin="round" stroke-linecap="round" />
<path d="M230,172 L270,180 L330,175 L360,160" fill="none" stroke="#5d737a" stroke-width="6" stroke-linejoin="round" stroke-linecap="round" />
<path d="M200,362 L300,322 L383,280 L512,262 L625,250 L783,235 L783,245 L625,252 L512,275 L400,307 L350,335 L250,407 L200,452 Z" fill="#75845f" />
<path d="M200,362 L300,322 L383,280 L512,262 L625,250 L783,235 L783,245 L625,252 L512,275 L400,307 L350,335 L250,407 L200,452 Z" fill="url(#dash)" />
<path d="M200,452 L250,407 L350,335 L400,307 L512,275 L625,250 L783,245" fill="none" stroke="#5c8a52" stroke-width="2.5" stroke-linejoin="round" stroke-linecap="round" />
<path d="M200,366 L300,326 L383,284 L512,265" fill="none" stroke="#5c8a52" stroke-width="1.2" stroke-linejoin="round" stroke-linecap="round" opacity="0.7"/>
<path d="M230,430 L250,415 L262,425 L245,440 Z" fill="none" stroke="#5c8a52" stroke-width="2"/>
<path d="M340,360 L365,345 L372,352 L350,367 Z" fill="none" stroke="#5c8a52" stroke-width="2"/>
<path d="M300,385 L325,370 L333,377 L310,392 Z" fill="none" stroke="#5c8a52" stroke-width="2"/>
<path d="M200,103 L300,99 L400,97 L492,96 L500,103 L492,111 L422,120 L395,132 L357,140 L332,152 L270,167 L200,162 Z" fill="#798563" />
<path d="M365,102 L500,97 L500,112 L420,122 L362,143 Z" fill="url(#dash)" />
<path d="M200,103 L300,99 L400,97 L492,96 L500,103 L492,111 L422,120 L395,132 L357,140 L332,152 L270,167 L200,162 Z" fill="none" stroke="#5c8a52" stroke-width="2.2"/>
<path d="M205,140 L232,133 L235,160 L210,162 Z" fill="#7a7b76" opacity="0.7"/>
<path d="M370,128 L420,118 L470,118 L505,125" fill="none" stroke="#5c8a52" stroke-width="2"/>
<path d="M588,87 L637,73 L655,82 L646,102 L626,117 L661,163 L664,175 L646,152 L620,125 L600,122 Z" fill="#988f78" stroke="#5c8a52" stroke-width="2.5"/>
<path d="M726,60 L745,35 L768,24 L863,22 L900,22 L900,95 L863,103 L823,110 L808,132 L753,147 L731,114 L724,82 Z" fill="#6f7a66" />
<path d="M735,84 L790,84 L863,77 L900,80 L900,95 L863,103 L823,110 L808,132 L753,147 L731,114 Z" fill="url(#dash)" />
<path d="M753,33 L768,24 L863,22 L900,22 L900,80 L863,77 L790,84 L753,84 L748,60 Z" fill="#7a8662" />
<path d="M735,42 L753,35 L753,55 L750,82 L753,101 L768,132 L740,125 L730,110 L728,73 Z" fill="#988f78" />
<path d="M790,62 L812,60 L814,72 L792,75 Z" fill="#7a7b76" opacity="0.7"/>
<path d="M726,60 L745,35 L768,24 L863,22 L900,22 L900,95 L863,103 L823,110 L808,132 L753,147 L731,114 L724,82 Z" fill="none" stroke="#5c8a52" stroke-width="2.5"/>
<path d="M753,84 L790,84 L863,77 L900,80" fill="none" stroke="#5c8a52" stroke-width="2.5"/>
<path d="M836,117 L900,110 L900,152 L840,150 Z" fill="none" stroke="#5c8a52" stroke-width="2"/>
<path d="M530,95 L573,88 L572,100 L535,146 L528,140 Z" fill="none" stroke="#5c8a52" stroke-width="2" opacity="0.8"/>
<path d="M783,233 L842,227 L900,222 L900,453 L835,455 L816,449 L805,434 L775,406 L771,369 L790,331 L784,294 L788,245 Z" fill="#75845f" />
<path d="M783,233 L842,227 L900,222 L900,453 L835,455 L816,449 L805,434 L775,406 L771,369 L790,331 L784,294 L788,245 Z" fill="url(#dash)" />
<path d="M786,240 L842,230 L900,226 L900,256 L860,254 L822,258 L814,300 L832,312 L870,318 L900,330 L900,346 L862,346 L842,352 L900,360 L900,372 L842,370 L830,392 L836,432 L818,444 L800,420 L792,390 L798,350 L792,331 L786,294 Z" fill="#5d737a" />
<path d="M800,362 L815,356 L822,398 L806,410 Z" fill="#75845f" />
<path d="M800,362 L815,356 L822,398 L806,410 Z" fill="url(#dash)" />
<path d="M845,330 L872,326 L882,341 L850,346 Z" fill="#75845f" />
<path d="M845,330 L872,326 L882,341 L850,346 Z" fill="url(#dash)" />
<path d="M795,300 L808,296 L810,325 L797,328 Z" fill="#75845f" />
<path d="M795,300 L808,296 L810,325 L797,328 Z" fill="url(#dash)" />
<path d="M783,233 L842,227 L900,222 L900,453 L835,455 L816,449 L805,434 L775,406 L771,369 L790,331 L784,294 L788,245 Z" fill="none" stroke="#5c8a52" stroke-width="2"/>
<path d="M200,700 L240,698 L300,702 L340,712 L350,745 L345,800 L300,810 L240,805 L200,800 Z" fill="#7e7f7a" opacity="0.8"/>
<path d="M527,420 L560,416 L588,422 L590,452 L582,468 L540,470 L525,455 Z" fill="#7e7f7a" opacity="0.8"/>
<path d="M667,905 L720,920 L760,950 L760,1000 L720,1016 L670,1010 L645,985 L650,935 Z" fill="#7e7f7a" opacity="0.8"/>
<path d="M365,1290 L420,1280 L470,1300 L500,1330 L500,1410 L450,1405 L400,1370 L370,1330 Z" fill="#7e7f7a" opacity="0.8"/>
<path d="M248,1300 L300,1292 L305,1340 L265,1345 L245,1330 Z" fill="#7e7f7a" opacity="0.8"/>
<path d="M527,1510 L580,1505 L600,1520 L598,1545 L540,1548 L527,1530 Z" fill="#7e7f7a" opacity="0.8"/>
<path d="M612,1195 L655,1197 L662,1235 L618,1240 Z" fill="#7e7f7a" opacity="0.8"/>
<path d="M762,540 L792,540 L795,575 L764,575 Z" fill="#7e7f7a" opacity="0.8"/>
<path d="M752,605 L795,605 L795,642 L752,645 Z" fill="#7e7f7a" opacity="0.8"/>
<path d="M525,748 L560,745 L565,775 L528,778 Z" fill="#7e7f7a" opacity="0.8"/>
<path d="M540,520 L572,518 L570,538 L540,540 Z" fill="#7e7f7a" opacity="0.8"/>
<path d="M290,990 L320,985 L330,1010 L300,1020 Z" fill="#7e7f7a" opacity="0.8"/>
<path d="M320,1110 L345,1100 L350,1135 L325,1138 Z" fill="#7e7f7a" opacity="0.8"/>
<path d="M225,1115 L255,1118 L250,1140 L228,1138 Z" fill="#7e7f7a" opacity="0.8"/>
<path d="M788,775 L824,778 L822,805 L790,802 Z" fill="#7e7f7a" opacity="0.8"/>
<path d="M660,1455 L690,1450 L692,1470 L662,1472 Z" fill="#7e7f7a" opacity="0.8"/>
<path d="M602,738 L632,732 L643,773 L635,802 L614,797 L597,767 Z" fill="#5d737a" />
<path d="M627,835 L640,820 L665,820 L672,840 L670,868 L645,874 L628,860 Z" fill="#5d737a" />
<path d="M447,550 L465,547 L470,560 L460,572 L449,570 Z" fill="#5d737a" />
<path d="M200,1445 L232,1445 L300,1443 L317,1452 L330,1470 L332,1500 L325,1520 L305,1530 L250,1533 L200,1532 Z" fill="#5d737a" />
<path d="M200,1110 L212,1115 L228,1140 L222,1170 L212,1190 L225,1205 L215,1215 L200,1218 Z" fill="#5d737a" />
<path d="M355,1340 L368,1338 L373,1372 L358,1375 Z" fill="#5d737a" />
<path d="M667,745 L685,748 L680,767 L668,765 Z" fill="#5d737a" />
<path d="M816,866 L834,865 L835,880 L818,880 Z" fill="#5d737a" />
<path d="M390,1160 L440,1150 L452,1200 L400,1215 Z" fill="#5d737a" />
<path d="M240,1130 L275,1150 L265,1185 L235,1175 Z" fill="#5d737a" />
<path d="M400,900 L440,896 L470,900 L490,925 L470,950 L430,955 L400,940 Z" fill="#5d737a" opacity="0.55"/>
<path d="M470,880 L500,875 L510,900 L495,915 L475,905 Z" fill="#5d737a" opacity="0.55"/>
<path d="M480,935 L500,945 L505,980 L485,982 Z" fill="#5d737a" opacity="0.55"/>
<path d="M385,910 L400,905 L405,935 L388,945 Z" fill="#5d737a" opacity="0.55"/>
<path d="M380,950 L392,902 L409,892 L434,894 L455,875 L485,861 L497,871 L517,883 L513,902 L517,933 L501,940 L513,958 L530,954 L532,975 L522,983 L482,987 L455,969 L413,968 L382,973 Z" fill="url(#dash)" opacity="0.6"/>
<path d="M342,1005 L370,996 L417,997 L420,1010 L395,1020 L370,1030 L345,1030 Z" fill="#5d737a" opacity="0.85"/>
<path d="M482,987 L528,971 L580,973 L580,978 L528,978 L490,990 Z" fill="#5d737a" />
<path d="M380,950 L392,902 L409,892 L434,894 L455,875 L485,861 L497,871 L517,883 L513,902 L517,933 L501,940 L513,958 L530,954 L532,975 L522,983 L482,987 L455,969 L413,968 L382,973 Z" fill="none" stroke="#5c8a52" stroke-width="2.5"/>
<path d="M336,1004 L351,975 L382,973 L386,992 L424,987 L442,1004 L407,1021 L382,1031 L345,1033 L334,1012 Z" fill="none" stroke="#5c8a52" stroke-width="2.5"/>
<path d="M409,892 L440,920 L470,945 L500,940" fill="none" stroke="#5c8a52" stroke-width="2"/>
<path d="M557,1092 L600,1100 L640,1092 L660,1110 L660,1170 L610,1172 L570,1140 Z" fill="#68786a" opacity="0.35"/>
<path d="M557,1092 L600,1100 L640,1092 L660,1110 L660,1170 L610,1172 L570,1140 Z" fill="url(#dash)" opacity="0.7"/>
<path d="M557,1092 L600,1100 L640,1092 L660,1110 L660,1170 L610,1172 L570,1140 Z" fill="none" stroke="#5c8a52" stroke-width="2.5"/>
<path d="M387,1150 L430,1140 L457,1160 L450,1215 L392,1220 Z" fill="#68786a" opacity="0.35"/>
<path d="M387,1150 L430,1140 L457,1160 L450,1215 L392,1220 Z" fill="url(#dash)" opacity="0.7"/>
<path d="M387,1150 L430,1140 L457,1160 L450,1215 L392,1220 Z" fill="none" stroke="#5c8a52" stroke-width="2.5"/>
<path d="M346,1401 L390,1405 L422,1440 L415,1471 L375,1465 L350,1440 Z" fill="#68786a" opacity="0.35"/>
<path d="M346,1401 L390,1405 L422,1440 L415,1471 L375,1465 L350,1440 Z" fill="url(#dash)" opacity="0.7"/>
<path d="M346,1401 L390,1405 L422,1440 L415,1471 L375,1465 L350,1440 Z" fill="none" stroke="#5c8a52" stroke-width="2.5"/>
<path d="M603,525 L661,525 L661,560 L640,575 L615,597 L603,580 Z" fill="#7a8a68" opacity="0.6" stroke="#5c8a52" stroke-width="2.4"/>
<path d="M527,600 L573,600 L573,625 L548,632 L527,615 Z" fill="#7a8a68" opacity="0.6" stroke="#5c8a52" stroke-width="2.4"/>
<path d="M340,657 L366,660 L380,667 L420,667 L426,705 L345,705 Z" fill="#7a8a68" opacity="0.6" stroke="#5c8a52" stroke-width="2.4"/>
<path d="M707,640 L760,645 L757,690 L710,690 Z" fill="#7a8a68" opacity="0.6" stroke="#5c8a52" stroke-width="2.4"/>
<path d="M757,647 L805,650 L805,692 L760,692 Z" fill="#7a8a68" opacity="0.6" stroke="#5c8a52" stroke-width="2.4"/>
<path d="M604,1430 L666,1385 L672,1393 L612,1438 Z" fill="#7a8a68" opacity="0.6" stroke="#5c8a52" stroke-width="2.4"/>
<path d="M742,1350 L762,1312 L797,1335 L780,1356 Z" fill="#7a8a68" opacity="0.6" stroke="#5c8a52" stroke-width="2.4"/>
<path d="M769,1076 L792,1072 L812,1104 L790,1106 Z" fill="#7a8a68" opacity="0.6" stroke="#5c8a52" stroke-width="2.4"/>
<path d="M853,1483 L900,1440 L900,1600 L860,1565 Z" fill="#7a8a68" opacity="0.6" stroke="#5c8a52" stroke-width="2.4"/>
<path d="M229,1130 L260,1150 L300,1200 L290,1240 L250,1260 L229,1240 Z" fill="#7a8a68" opacity="0.6" stroke="#5c8a52" stroke-width="2.4"/>
<path d="M275,707 L312,637 L335,540 L390,510 L450,475 L520,450 L650,445 L735,462 L785,465 L825,457" fill="none" stroke="#52798a" stroke-width="1.8" stroke-linejoin="round" stroke-linecap="round" />
<path d="M533,975 L575,972 L625,970" fill="none" stroke="#52798a" stroke-width="3" stroke-linejoin="round" stroke-linecap="round" />
<path d="M675,750 L725,697 L805,682 L840,655 L900,650" fill="none" stroke="#52798a" stroke-width="2" stroke-linejoin="round" stroke-linecap="round" />
<path d="M458,840 L500,810 L540,790 L600,770" fill="none" stroke="#52798a" stroke-width="2.5" stroke-linejoin="round" stroke-linecap="round" />
<path d="M440,832 L480,815 L510,800 L548,788" fill="none" stroke="#5d737a" stroke-width="5" stroke-linejoin="round" stroke-linecap="round" />
<path d="M200,1060 L300,1040 L400,1030 L480,1020 L600,1000" fill="none" stroke="#52798a" stroke-width="1.2" stroke-linejoin="round" stroke-linecap="round" />
<path d="M450,1447 L506,1406 L562,1391 L619,1410 L675,1372 L742,1350 L806,1320 L862,1267 L900,1245" fill="none" stroke="#52798a" stroke-width="1.5" stroke-linejoin="round" stroke-linecap="round" />
<path d="M555,1100 L600,1085 L700,1080 L760,1050 L800,1030" fill="none" stroke="#52798a" stroke-width="1.3" stroke-linejoin="round" stroke-linecap="round" />
<path d="M200,1400 L280,1395 L350,1360" fill="none" stroke="#52798a" stroke-width="1.2" stroke-linejoin="round" stroke-linecap="round" />
<path d="M325,1600 L340,1560 L375,1522 L390,1490 L425,1480 L462,1455 L500,1410" fill="none" stroke="#52798a" stroke-width="1.8" stroke-linejoin="round" stroke-linecap="round" />
<path d="M340,1430 L332,1462 L335,1505 L305,1535" fill="none" stroke="#696b66" stroke-width="1.3" stroke-linejoin="round" stroke-linecap="round" />
<path d="M450,375 L470,430 L500,470 L520,520 L560,600 L600,650" fill="none" stroke="#696b66" stroke-width="1.5" stroke-linejoin="round" stroke-linecap="round" />
<path d="M505,304 L515,360 L540,437" fill="none" stroke="#696b66" stroke-width="1.5" stroke-linejoin="round" stroke-linecap="round" />
<path d="M600,310 L610,360 L590,420" fill="none" stroke="#696b66" stroke-width="1.5" stroke-linejoin="round" stroke-linecap="round" />
<path d="M200,470 L260,480 L330,500 L400,520 L450,525" fill="none" stroke="#696b66" stroke-width="1.5" stroke-linejoin="round" stroke-linecap="round" />
<path d="M350,400 L380,450 L400,520 L410,560" fill="none" stroke="#696b66" stroke-width="1.5" stroke-linejoin="round" stroke-linecap="round" />
<path d="M200,650 L260,640 L330,630 L380,620" fill="none" stroke="#696b66" stroke-width="1.5" stroke-linejoin="round" stroke-linecap="round" />
<path d="M450,600 L520,610 L600,650 L700,690" fill="none" stroke="#696b66" stroke-width="1.5" stroke-linejoin="round" stroke-linecap="round" />
<path d="M540,520 L600,540 L700,560 L760,570 L850,560 L900,550" fill="none" stroke="#696b66" stroke-width="1.5" stroke-linejoin="round" stroke-linecap="round" />
<path d="M650,500 L700,510 L750,520" fill="none" stroke="#696b66" stroke-width="1.5" stroke-linejoin="round" stroke-linecap="round" />
<path d="M780,480 L830,470 L900,480" fill="none" stroke="#696b66" stroke-width="1.5" stroke-linejoin="round" stroke-linecap="round" />
<path d="M200,870 L260,880 L330,900" fill="none" stroke="#696b66" stroke-width="1.5" stroke-linejoin="round" stroke-linecap="round" />
<path d="M430,820 L520,830 L600,860 L680,880" fill="none" stroke="#696b66" stroke-width="1.5" stroke-linejoin="round" stroke-linecap="round" />
<path d="M480,1000 L520,1030 L560,1060 L600,1080 L700,1100 L800,1120 L900,1130" fill="none" stroke="#696b66" stroke-width="1.5" stroke-linejoin="round" stroke-linecap="round" />
<path d="M200,1000 L250,1040 L300,1080 L350,1120 L400,1150 L450,1180" fill="none" stroke="#696b66" stroke-width="1.5" stroke-linejoin="round" stroke-linecap="round" />
<path d="M200,1380 L260,1400 L320,1420 L380,1440 L420,1480" fill="none" stroke="#696b66" stroke-width="1.5" stroke-linejoin="round" stroke-linecap="round" />
<path d="M300,1200 L350,1260 L370,1280" fill="none" stroke="#696b66" stroke-width="1.5" stroke-linejoin="round" stroke-linecap="round" />
<path d="M430,1550 L500,1540 L527,1530" fill="none" stroke="#696b66" stroke-width="1.5" stroke-linejoin="round" stroke-linecap="round" />
<path d="M700,880 L750,890 L800,880 L860,870 L900,860" fill="none" stroke="#696b66" stroke-width="1.5" stroke-linejoin="round" stroke-linecap="round" />
<path d="M760,700 L800,720 L860,740 L900,750" fill="none" stroke="#696b66" stroke-width="1.5" stroke-linejoin="round" stroke-linecap="round" />
<path d="M200,560 L250,570 L290,580" fill="none" stroke="#696b66" stroke-width="1.5" stroke-linejoin="round" stroke-linecap="round" />
<path d="M520,300 L540,360 L560,400" fill="none" stroke="#696b66" stroke-width="1.5" stroke-linejoin="round" stroke-linecap="round" />
<path d="M620,310 L650,380 L680,420" fill="none" stroke="#696b66" stroke-width="1.5" stroke-linejoin="round" stroke-linecap="round" />
<path d="M700,460 L720,520 L740,560" fill="none" stroke="#696b66" stroke-width="1.5" stroke-linejoin="round" stroke-linecap="round" />
<path d="M480,600 L470,660 L480,700" fill="none" stroke="#696b66" stroke-width="1.5" stroke-linejoin="round" stroke-linecap="round" />
<path d="M600,700 L640,720 L700,740" fill="none" stroke="#696b66" stroke-width="1.5" stroke-linejoin="round" stroke-linecap="round" />
<path d="M400,760 L450,780 L520,790" fill="none" stroke="#696b66" stroke-width="1.5" stroke-linejoin="round" stroke-linecap="round" />
<path d="M600,800 L640,820 L700,830 L760,850 L820,870" fill="none" stroke="#696b66" stroke-width="1.5" stroke-linejoin="round" stroke-linecap="round" />
<path d="M450,1100 L500,1120 L560,1140" fill="none" stroke="#696b66" stroke-width="1.5" stroke-linejoin="round" stroke-linecap="round" />
<path d="M220,1260 L260,1240 L300,1230" fill="none" stroke="#696b66" stroke-width="1.5" stroke-linejoin="round" stroke-linecap="round" />
<path d="M450,1312 L525,1309 L637,1312 L750,1290 L844,1260 L900,1245" fill="none" stroke="#696b66" stroke-width="1.5" stroke-linejoin="round" stroke-linecap="round" />
<path d="M450,1114 L562,1106 L637,1087 L694,1080 L787,1057" fill="none" stroke="#696b66" stroke-width="1.5" stroke-linejoin="round" stroke-linecap="round" />
<path d="M555,1267 L600,1286 L675,1275" fill="none" stroke="#696b66" stroke-width="1.5" stroke-linejoin="round" stroke-linecap="round" />
<path d="M660,1050 L671,1106 L675,1215" fill="none" stroke="#696b66" stroke-width="1.5" stroke-linejoin="round" stroke-linecap="round" />
<path d="M870,1080 L900,1132" fill="none" stroke="#696b66" stroke-width="1.5" stroke-linejoin="round" stroke-linecap="round" />
<path d="M769,1174 L825,1170 L862,1174" fill="none" stroke="#696b66" stroke-width="1.5" stroke-linejoin="round" stroke-linecap="round" />
<path d="M731,1219 L787,1207 L825,1222" fill="none" stroke="#696b66" stroke-width="1.5" stroke-linejoin="round" stroke-linecap="round" />
<path d="M551,1342 L637,1357" fill="none" stroke="#696b66" stroke-width="1.5" stroke-linejoin="round" stroke-linecap="round" />
<path d="M637,1481 L675,1462 L750,1485 L844,1477 L900,1462" fill="none" stroke="#696b66" stroke-width="1.5" stroke-linejoin="round" stroke-linecap="round" />
<path d="M600,1286 L640,1320 L680,1330" fill="none" stroke="#696b66" stroke-width="1.5" stroke-linejoin="round" stroke-linecap="round" />
<path d="M790,1100 L800,1160 L780,1219" fill="none" stroke="#696b66" stroke-width="1.5" stroke-linejoin="round" stroke-linecap="round" />
<path d="M470,1250 L520,1230 L555,1267" fill="none" stroke="#696b66" stroke-width="1.5" stroke-linejoin="round" stroke-linecap="round" />
<path d="M222,784 L240,830 L287,975 L310,1050 L360,1230 L440,1325 L500,1425 L536,1485 L600,1560 L619,1600" fill="none" stroke="#4a4c4a" stroke-width="1.4" stroke-linejoin="round" stroke-linecap="round" />
<path d="M222,784 L320,745 L415,725 L450,707 L570,650 L615,627 L700,617 L740,612 L900,611" fill="none" stroke="#4a4c4a" stroke-width="1.4" stroke-linejoin="round" stroke-linecap="round" />
<path d="M740,1600 L800,1555 L900,1436" fill="none" stroke="#4a4c4a" stroke-width="1.8" stroke-linejoin="round" stroke-linecap="round" />
<path d="M900,612 L890,625 L885,665 L877,683 L867,733 L843,753 L830,783 L813,833 L817,900 L857,953 L900,960" fill="none" stroke="#5d5d64" stroke-width="2.2" stroke-linejoin="round" stroke-linecap="round" />
<path d="M200,83 L400,60 L550,39 L713,26 L900,14" fill="none" stroke="#75645f" stroke-width="1.3" stroke-linejoin="round" stroke-linecap="round" stroke-dasharray="3,1.5"/>
<path d="M500,96 L550,85 L754,34 L830,15" fill="none" stroke="#5c8a52" stroke-width="1.4" stroke-linejoin="round" stroke-linecap="round" opacity="0.8"/>
<path d="M305,397 L258,467 L217,554 L200,583" fill="none" stroke="#aa7a52" stroke-width="2" stroke-linejoin="round" stroke-linecap="round" />
<path d="M200,605 L220,625 L232,662 L237,720 L262,715 L307,706 L350,706 L380,705 L450,704 L515,697 L608,692 L678,683 L737,668 L747,625" fill="none" stroke="#aa7a52" stroke-width="2" stroke-linejoin="round" stroke-linecap="round" />
<path d="M382,582 L405,605 L407,650 L417,680 L425,697" fill="none" stroke="#aa7a52" stroke-width="2" stroke-linejoin="round" stroke-linecap="round" />
<path d="M307,706 L317,735 L324,763 L330,800" fill="none" stroke="#aa7a52" stroke-width="2" stroke-linejoin="round" stroke-linecap="round" />
<path d="M237,720 L231,735 L232,763 L240,774 L261,780 L288,774 L312,768 L324,763" fill="none" stroke="#aa7a52" stroke-width="2" stroke-linejoin="round" stroke-linecap="round" />
<path d="M291,774 L300,810" fill="none" stroke="#aa7a52" stroke-width="2" stroke-linejoin="round" stroke-linecap="round" />
<path d="M261,780 L258,810" fill="none" stroke="#aa7a52" stroke-width="2" stroke-linejoin="round" stroke-linecap="round" />
<path d="M398,315 L480,297 L503,303 L608,309 L643,350 L667,362" fill="none" stroke="#aa7a52" stroke-width="2" stroke-linejoin="round" stroke-linecap="round" />
<path d="M398,315 L404,338 L445,397 L509,432 L538,443" fill="none" stroke="#aa7a52" stroke-width="2" stroke-linejoin="round" stroke-linecap="round" />
<path d="M305,397 L398,315" fill="none" stroke="#aa7a52" stroke-width="2" stroke-linejoin="round" stroke-linecap="round" />
<path d="M667,362 L684,385 L713,432 L760,452 L786,464 L790,480 L775,492 L750,505 L744,520 L742,600 L747,625 L755,640 L785,645 L797,630 L800,600 L825,602 L860,580 L900,579" fill="none" stroke="#aa7a52" stroke-width="2" stroke-linejoin="round" stroke-linecap="round" />
<path d="M585,477 L540,477 L480,502 L425,547 L382,582" fill="none" stroke="#aa7a52" stroke-width="2" stroke-linejoin="round" stroke-linecap="round" />
<path d="M747,625 L725,637 L682,682 L650,685 L600,700" fill="none" stroke="#aa7a52" stroke-width="2" stroke-linejoin="round" stroke-linecap="round" />
<path d="M680,682 L695,725 L730,767 L733,777 L730,833 L713,890 L673,910 L670,933 L680,1017" fill="none" stroke="#aa7a52" stroke-width="2" stroke-linejoin="round" stroke-linecap="round" />
<path d="M785,645 L800,650 L813,683 L823,717 L825,760" fill="none" stroke="#aa7a52" stroke-width="2" stroke-linejoin="round" stroke-linecap="round" />
<path d="M760,983 L776,1050 L825,1114 L889,1189 L900,1234" fill="none" stroke="#aa7a52" stroke-width="2" stroke-linejoin="round" stroke-linecap="round" />
<path d="M506,1399 L562,1380 L619,1365 L690,1312 L772,1260 L799,1242 L825,1230 L859,1196 L892,1192 L900,1190" fill="none" stroke="#aa7a52" stroke-width="2" stroke-linejoin="round" stroke-linecap="round" />
<path d="M570,1181 L611,1211 L630,1234 L664,1249 L690,1260 L699,1273 L712,1294 L720,1339 L750,1391 L772,1436 L780,1455 L769,1485 L772,1519 L799,1575 L810,1600" fill="none" stroke="#aa7a52" stroke-width="2" stroke-linejoin="round" stroke-linecap="round" />
<path d="M585,1511 L637,1481 L690,1432 L742,1395 L806,1350 L862,1305 L900,1301" fill="none" stroke="#aa7a52" stroke-width="2" stroke-linejoin="round" stroke-linecap="round" />
<path d="M525,1519 L555,1511 L559,1455" fill="none" stroke="#aa7a52" stroke-width="2" stroke-linejoin="round" stroke-linecap="round" />
<path d="M450,1590 L500,1570 L530,1550" fill="none" stroke="#aa7a52" stroke-width="2" stroke-linejoin="round" stroke-linecap="round" />
<path d="M200,1000 L260,990 L285,975" fill="none" stroke="#aa7a52" stroke-width="2" stroke-linejoin="round" stroke-linecap="round" />
<path d="M487,842 L487,830 L530,800" fill="none" stroke="#aa7a52" stroke-width="2" stroke-linejoin="round" stroke-linecap="round" />
<path d="M842,227 L783,233 L780,277 L754,295 L719,321 L681,350 L667,362 L637,402 L591,426 L585,477 L582,500 L585,560 L575,625 L550,657 L517,690 L510,733 L527,773 L537,797 L567,827 L587,867 L590,880" fill="none" stroke="#7a4a40" stroke-width="3" stroke-linejoin="round" stroke-linecap="round" />
<path d="M842,227 L783,233 L780,277 L754,295 L719,321 L681,350 L667,362 L637,402 L591,426 L585,477 L582,500 L585,560 L575,625 L550,657 L517,690 L510,733 L527,773 L537,797 L567,827 L587,867 L590,880" fill="none" stroke="#a85a4e" stroke-width="2.2" stroke-linejoin="round" stroke-linecap="round" />
<path d="M200,850 L252,841 L317,826 L392,820 L457,841 L492,844 L550,870 L602,882 L667,899 L708,922 L748,978" fill="none" stroke="#7a4a40" stroke-width="3" stroke-linejoin="round" stroke-linecap="round" />
<path d="M200,850 L252,841 L317,826 L392,820 L457,841 L492,844 L550,870 L602,882 L667,899 L708,922 L748,978" fill="none" stroke="#a85a4e" stroke-width="2.2" stroke-linejoin="round" stroke-linecap="round" />
<path d="M249,851 L264,899 L287,969 L310,1050 L330,1107 L340,1150 L362,1182 L370,1212 L387,1247 L425,1285 L433,1293 L462,1325 L486,1360 L503,1401 L550,1442 L573,1489 L591,1529 L608,1600" fill="none" stroke="#6a3a40" stroke-width="4.2" stroke-linejoin="round" stroke-linecap="round" />
<path d="M200,1292 L225,1325 L265,1360 L290,1335 L312,1332 L362,1320 L407,1310 L433,1293 L486,1273 L538,1249 L562,1208 L597,1144 L635,1083 L672,1022 L696,998 L748,981 L783,955 L830,917 L900,882" fill="none" stroke="#6a3a40" stroke-width="4.2" stroke-linejoin="round" stroke-linecap="round" />
<path d="M264,1360 L245,1395 L229,1436 L220,1480 L205,1520 L200,1530" fill="none" stroke="#6a3a40" stroke-width="4.2" stroke-linejoin="round" stroke-linecap="round" />
<path d="M200,1285 L215,1316" fill="none" stroke="#6a3a40" stroke-width="4.2" stroke-linejoin="round" stroke-linecap="round" />
<path d="M249,851 L264,899 L287,969 L310,1050 L330,1107 L340,1150 L362,1182 L370,1212 L387,1247 L425,1285 L433,1293 L462,1325 L486,1360 L503,1401 L550,1442 L573,1489 L591,1529 L608,1600" fill="none" stroke="#a34f5c" stroke-width="2.8" stroke-linejoin="round" stroke-linecap="round" />
<path d="M200,1292 L225,1325 L265,1360 L290,1335 L312,1332 L362,1320 L407,1310 L433,1293 L486,1273 L538,1249 L562,1208 L597,1144 L635,1083 L672,1022 L696,998 L748,981 L783,955 L830,917 L900,882" fill="none" stroke="#a34f5c" stroke-width="2.8" stroke-linejoin="round" stroke-linecap="round" />
<path d="M264,1360 L245,1395 L229,1436 L220,1480 L205,1520 L200,1530" fill="none" stroke="#a34f5c" stroke-width="2.8" stroke-linejoin="round" stroke-linecap="round" />
<path d="M200,1285 L215,1316" fill="none" stroke="#a34f5c" stroke-width="2.8" stroke-linejoin="round" stroke-linecap="round" />
<circle cx="433" cy="1293" r="7" fill="none" stroke="#a34f5c" stroke-width="3"/>
<circle cx="264" cy="1360" r="5" fill="none" stroke="#a34f5c" stroke-width="2.5"/>
<circle cx="748" cy="979" r="5" fill="none" stroke="#a34f5c" stroke-width="2.5"/>
</svg><svg style="position:absolute;left:0;top:0" width="700" height="1600" viewBox="200 0 700 1600" font-family="Liberation Sans, sans-serif"><text x="412" y="214" font-size="11" fill="#2f4f80" text-anchor="middle" font-weight="normal" stroke="#8a9490" stroke-opacity="0.35" stroke-width="2" paint-order="stroke" font-style="italic">Amelanderwad</text>
<text x="552" y="206" font-size="11" fill="#2f4f80" text-anchor="middle" font-weight="normal" stroke="#8a9490" stroke-opacity="0.35" stroke-width="2" paint-order="stroke" font-style="italic">Wierumerwad</text>
<text x="485" y="243" font-size="9" fill="#2f4f80" text-anchor="middle" font-weight="normal" stroke="#8a9490" stroke-opacity="0.35" stroke-width="2" paint-order="stroke" font-style="italic">Heideveld</text>
<text x="630" y="159" font-size="9" fill="#2f4f80" text-anchor="middle" font-weight="normal" stroke="#8a9490" stroke-opacity="0.35" stroke-width="2" paint-order="stroke" font-style="italic">Engelsmanplaat</text>
<text x="762" y="226" font-size="9" fill="#2f4f80" text-anchor="middle" font-weight="normal" stroke="#8a9490" stroke-opacity="0.35" stroke-width="2" paint-order="stroke" font-style="italic">Eilanderbult</text>
<text x="257" y="269" font-size="9" fill="#2f4f80" text-anchor="middle" font-weight="normal" stroke="#8a9490" stroke-opacity="0.35" stroke-width="2" paint-order="stroke" font-style="italic">Piet Scheve</text>
<text x="257" y="281" font-size="9" fill="#2f4f80" text-anchor="middle" font-weight="normal" stroke="#8a9490" stroke-opacity="0.35" stroke-width="2" paint-order="stroke" font-style="italic">plaat</text>
<text x="478" y="122" font-size="10" fill="#2b5e30" text-anchor="middle" font-weight="normal" stroke="#8a9490" stroke-opacity="0.35" stroke-width="2" paint-order="stroke" font-style="italic">De Hôn</text>
<text x="222" y="369" font-size="11" fill="#2b5e30" text-anchor="middle" font-weight="normal" stroke="#8a9490" stroke-opacity="0.35" stroke-width="2" paint-order="stroke" font-style="italic">Noord-</text>
<text x="222" y="383" font-size="11" fill="#2b5e30" text-anchor="middle" font-weight="normal" stroke="#8a9490" stroke-opacity="0.35" stroke-width="2" paint-order="stroke" font-style="italic">Fryslân</text>
<text x="222" y="397" font-size="11" fill="#2b5e30" text-anchor="middle" font-weight="normal" stroke="#8a9490" stroke-opacity="0.35" stroke-width="2" paint-order="stroke" font-style="italic">Bûtendyks</text>
<text x="810" y="324" font-size="9" fill="#2f4f80" text-anchor="middle" font-weight="normal" stroke="#8a9490" stroke-opacity="0.35" stroke-width="2" paint-order="stroke" font-style="italic">Lauwersmeer</text>
<text x="845" y="347" font-size="11" fill="#2b5e30" text-anchor="middle" font-weight="normal" stroke="#8a9490" stroke-opacity="0.35" stroke-width="2" paint-order="stroke" font-style="italic">Lauwersmeer</text>
<text x="441" y="945" font-size="11" fill="#2b5e30" text-anchor="middle" font-weight="normal" stroke="#8a9490" stroke-opacity="0.35" stroke-width="2" paint-order="stroke" font-style="italic">De Alde</text>
<text x="441" y="960" font-size="11" fill="#2b5e30" text-anchor="middle" font-weight="normal" stroke="#8a9490" stroke-opacity="0.35" stroke-width="2" paint-order="stroke" font-style="italic">Feanen</text>
<text x="273" y="1493" font-size="9" fill="#2f4f80" text-anchor="middle" font-weight="normal" stroke="#8a9490" stroke-opacity="0.35" stroke-width="2" paint-order="stroke" font-style="italic">Tsjûkemar</text>
<text x="890" y="1508" font-size="9" fill="#2b5e30" text-anchor="middle" font-weight="normal" stroke="#8a9490" stroke-opacity="0.35" stroke-width="2" paint-order="stroke" font-style="italic">Drents-</text>
<text x="888" y="1520" font-size="9" fill="#2b5e30" text-anchor="middle" font-weight="normal" stroke="#8a9490" stroke-opacity="0.35" stroke-width="2" paint-order="stroke" font-style="italic">Friese Wold</text>
<text x="888" y="1532" font-size="9" fill="#2b5e30" text-anchor="middle" font-weight="normal" stroke="#8a9490" stroke-opacity="0.35" stroke-width="2" paint-order="stroke" font-style="italic">Leggelderveld</text>
<text x="895" y="1470" font-size="10" fill="#2b5e30" text-anchor="middle" font-weight="normal" stroke="#8a9490" stroke-opacity="0.35" stroke-width="2" paint-order="stroke" font-style="italic">Fri</text>
<text x="215" y="1160" font-size="9" fill="#2b5e30" text-anchor="middle" font-weight="normal" stroke="#8a9490" stroke-opacity="0.35" stroke-width="2" paint-order="stroke" font-style="italic">ergebied</text>
<text x="214" y="752" font-size="14.5" fill="#2a2a2a" text-anchor="start" font-weight="normal" stroke="#8a9490" stroke-opacity="0.35" stroke-width="2" paint-order="stroke" >Leeuwarden</text>
<text x="215" y="705" font-size="9" fill="#2f4f80" text-anchor="middle" font-weight="normal" stroke="#8a9490" stroke-opacity="0.35" stroke-width="2" paint-order="stroke" font-style="italic">Vliegbasis</text>
<text x="215" y="718" font-size="9" fill="#2f4f80" text-anchor="middle" font-weight="normal" stroke="#8a9490" stroke-opacity="0.35" stroke-width="2" paint-order="stroke" font-style="italic">Leeuwarden</text>
<text x="556" y="450" font-size="11.5" fill="#2a2a2a" text-anchor="middle" font-weight="normal" stroke="#8a9490" stroke-opacity="0.35" stroke-width="2" paint-order="stroke" >Dokkum</text>
<text x="773" y="558" font-size="11.5" fill="#2a2a2a" text-anchor="middle" font-weight="normal" stroke="#8a9490" stroke-opacity="0.35" stroke-width="2" paint-order="stroke" >Kollum</text>
<text x="214" y="605" font-size="11.5" fill="#2a2a2a" text-anchor="middle" font-weight="normal" stroke="#8a9490" stroke-opacity="0.35" stroke-width="2" paint-order="stroke" >Stiens</text>
<text x="767" y="621" font-size="11.5" fill="#2a2a2a" text-anchor="middle" font-weight="normal" stroke="#8a9490" stroke-opacity="0.35" stroke-width="2" paint-order="stroke" >Buitenpost</text>
<text x="538" y="764" font-size="11.5" fill="#2a2a2a" text-anchor="middle" font-weight="normal" stroke="#8a9490" stroke-opacity="0.35" stroke-width="2" paint-order="stroke" >Burgum</text>
<text x="695" y="973" font-size="11.5" fill="#2a2a2a" text-anchor="middle" font-weight="normal" stroke="#8a9490" stroke-opacity="0.35" stroke-width="2" paint-order="stroke" >Drachten</text>
<text x="650" y="1225" font-size="11.5" fill="#2a2a2a" text-anchor="middle" font-weight="normal" stroke="#8a9490" stroke-opacity="0.35" stroke-width="2" paint-order="stroke" >Gorredijk</text>
<text x="269" y="1325" font-size="11.5" fill="#2a2a2a" text-anchor="middle" font-weight="normal" stroke="#8a9490" stroke-opacity="0.35" stroke-width="2" paint-order="stroke" >Joure</text>
<text x="450" y="1342" font-size="11.5" fill="#2a2a2a" text-anchor="middle" font-weight="normal" stroke="#8a9490" stroke-opacity="0.35" stroke-width="2" paint-order="stroke" >Heerenveen</text>
<text x="560" y="1537" font-size="11.5" fill="#2a2a2a" text-anchor="middle" font-weight="normal" stroke="#8a9490" stroke-opacity="0.35" stroke-width="2" paint-order="stroke" >Wolvega</text>
<g transform="translate(560,104) rotate(-15)"><text font-size="9" fill="#6a5a58" font-style="italic" text-anchor="middle">Fryslân</text></g>
<g transform="translate(880,725) rotate(-62)"><text font-size="9" fill="#3a3a3a" font-style="italic" text-anchor="middle">Groningen</text></g>
<g transform="translate(822,792) rotate(-75)"><text font-size="9" fill="#3a3a3a" font-style="italic" text-anchor="middle">Fryslân</text></g>
<rect x="753.0" y="276.0" width="34" height="16" rx="2" fill="#8a7068" stroke="#9d7f74" stroke-width="1"/>
<text x="770" y="288.0" font-size="11" fill="#2a2a2a" text-anchor="middle">N361</text>
<rect x="650.0" y="349.5" width="34" height="27" rx="2" fill="#8a7068" stroke="#9d7f74" stroke-width="1"/>
<text x="667" y="361.5" font-size="11" fill="#2a2a2a" text-anchor="middle">N358</text>
<text x="667" y="372.5" font-size="11" fill="#2a2a2a" text-anchor="middle">N361</text>
<rect x="301.0" y="389.0" width="34" height="16" rx="2" fill="#8a7068" stroke="#9d7f74" stroke-width="1"/>
<text x="318" y="401.0" font-size="11" fill="#2a2a2a" text-anchor="middle">N357</text>
<rect x="558.0" y="627.0" width="34" height="16" rx="2" fill="#8a7068" stroke="#9d7f74" stroke-width="1"/>
<text x="575" y="639.0" font-size="11" fill="#2a2a2a" text-anchor="middle">N356</text>
<rect x="376.0" y="697.0" width="34" height="16" rx="2" fill="#8a7068" stroke="#9d7f74" stroke-width="1"/>
<text x="393" y="709.0" font-size="11" fill="#2a2a2a" text-anchor="middle">N355</text>
<rect x="808.0" y="744.0" width="34" height="16" rx="2" fill="#8a7068" stroke="#9d7f74" stroke-width="1"/>
<text x="825" y="756.0" font-size="11" fill="#2a2a2a" text-anchor="middle">N358</text>
<rect x="717.0" y="769.0" width="34" height="16" rx="2" fill="#8a7068" stroke="#9d7f74" stroke-width="1"/>
<text x="734" y="781.0" font-size="11" fill="#2a2a2a" text-anchor="middle">N369</text>
<rect x="383.0" y="816.0" width="34" height="16" rx="2" fill="#8a7068" stroke="#9d7f74" stroke-width="1"/>
<text x="400" y="828.0" font-size="11" fill="#2a2a2a" text-anchor="middle">N31</text>
<rect x="752.0" y="1021.0" width="34" height="16" rx="2" fill="#8a7068" stroke="#9d7f74" stroke-width="1"/>
<text x="769" y="1033.0" font-size="11" fill="#2a2a2a" text-anchor="middle">N381</text>
<rect x="683.0" y="1265.0" width="34" height="16" rx="2" fill="#8a7068" stroke="#9d7f74" stroke-width="1"/>
<text x="700" y="1277.0" font-size="11" fill="#2a2a2a" text-anchor="middle">N392</text>
<rect x="783.0" y="1234.0" width="34" height="16" rx="2" fill="#8a7068" stroke="#9d7f74" stroke-width="1"/>
<text x="800" y="1246.0" font-size="11" fill="#2a2a2a" text-anchor="middle">N380</text>
<rect x="857.0" y="1293.0" width="34" height="16" rx="2" fill="#8a7068" stroke="#9d7f74" stroke-width="1"/>
<text x="874" y="1305.0" font-size="11" fill="#2a2a2a" text-anchor="middle">N351</text>
<rect x="594.0" y="1578.0" width="34" height="16" rx="2" fill="#8a7068" stroke="#9d7f74" stroke-width="1"/>
<text x="611" y="1590.0" font-size="11" fill="#2a2a2a" text-anchor="middle">A32</text>
<text x="253" y="852" font-size="10" fill="#6a1f2c" text-anchor="middle" font-weight="normal" stroke="#8a9490" stroke-opacity="0.35" stroke-width="2" paint-order="stroke" font-style="italic">25</text>
<text x="267" y="826" font-size="10" fill="#6a1f2c" text-anchor="middle" font-weight="normal" stroke="#8a9490" stroke-opacity="0.35" stroke-width="2" paint-order="stroke" font-style="italic">25</text>
<text x="310" y="827" font-size="10" fill="#6a1f2c" text-anchor="middle" font-weight="normal" stroke="#8a9490" stroke-opacity="0.35" stroke-width="2" paint-order="stroke" font-style="italic">26</text>
<text x="322" y="820" font-size="10" fill="#6a1f2c" text-anchor="middle" font-weight="normal" stroke="#8a9490" stroke-opacity="0.35" stroke-width="2" paint-order="stroke" font-style="italic">26</text>
<text x="255" y="866" font-size="10" fill="#6a1f2c" text-anchor="middle" font-weight="normal" stroke="#8a9490" stroke-opacity="0.35" stroke-width="2" paint-order="stroke" font-style="italic">17</text>
<text x="258" y="880" font-size="10" fill="#6a1f2c" text-anchor="middle" font-weight="normal" stroke="#8a9490" stroke-opacity="0.35" stroke-width="2" paint-order="stroke" font-style="italic">16</text>
<text x="262" y="895" font-size="10" fill="#6a1f2c" text-anchor="middle" font-weight="normal" stroke="#8a9490" stroke-opacity="0.35" stroke-width="2" paint-order="stroke" font-style="italic">16</text>
<text x="281" y="952" font-size="10" fill="#6a1f2c" text-anchor="middle" font-weight="normal" stroke="#8a9490" stroke-opacity="0.35" stroke-width="2" paint-order="stroke" font-style="italic">15</text>
<text x="287" y="975" font-size="10" fill="#6a1f2c" text-anchor="middle" font-weight="normal" stroke="#8a9490" stroke-opacity="0.35" stroke-width="2" paint-order="stroke" font-style="italic">15</text>
<text x="295" y="1005" font-size="10" fill="#6a1f2c" text-anchor="middle" font-weight="normal" stroke="#8a9490" stroke-opacity="0.35" stroke-width="2" paint-order="stroke" font-style="italic">14</text>
<text x="300" y="1028" font-size="10" fill="#6a1f2c" text-anchor="middle" font-weight="normal" stroke="#8a9490" stroke-opacity="0.35" stroke-width="2" paint-order="stroke" font-style="italic">14</text>
<text x="331" y="1110" font-size="10" fill="#6a1f2c" text-anchor="middle" font-weight="normal" stroke="#8a9490" stroke-opacity="0.35" stroke-width="2" paint-order="stroke" font-style="italic">3</text>
<text x="335" y="1128" font-size="10" fill="#6a1f2c" text-anchor="middle" font-weight="normal" stroke="#8a9490" stroke-opacity="0.35" stroke-width="2" paint-order="stroke" font-style="italic">13</text>
<text x="478" y="843" font-size="10" fill="#6a1f2c" text-anchor="middle" font-weight="normal" stroke="#8a9490" stroke-opacity="0.35" stroke-width="2" paint-order="stroke" font-style="italic">27</text>
<text x="578" y="884" font-size="10" fill="#6a1f2c" text-anchor="middle" font-weight="normal" stroke="#8a9490" stroke-opacity="0.35" stroke-width="2" paint-order="stroke" font-style="italic">28</text>
<text x="606" y="884" font-size="10" fill="#6a1f2c" text-anchor="middle" font-weight="normal" stroke="#8a9490" stroke-opacity="0.35" stroke-width="2" paint-order="stroke" font-style="italic">28</text>
<text x="671" y="904" font-size="10" fill="#6a1f2c" text-anchor="middle" font-weight="normal" stroke="#8a9490" stroke-opacity="0.35" stroke-width="2" paint-order="stroke" font-style="italic">29</text>
<text x="693" y="917" font-size="10" fill="#6a1f2c" text-anchor="middle" font-weight="normal" stroke="#8a9490" stroke-opacity="0.35" stroke-width="2" paint-order="stroke" font-style="italic">29</text>
<text x="741" y="966" font-size="10" fill="#6a1f2c" text-anchor="middle" font-weight="normal" stroke="#8a9490" stroke-opacity="0.35" stroke-width="2" paint-order="stroke" font-style="italic">30</text>
<text x="760" y="977" font-size="10" fill="#6a1f2c" text-anchor="middle" font-weight="normal" stroke="#8a9490" stroke-opacity="0.35" stroke-width="2" paint-order="stroke" font-style="italic">30a</text>
<text x="835" y="916" font-size="10" fill="#6a1f2c" text-anchor="middle" font-weight="normal" stroke="#8a9490" stroke-opacity="0.35" stroke-width="2" paint-order="stroke" font-style="italic">31</text>
<text x="668" y="1008" font-size="10" fill="#6a1f2c" text-anchor="middle" font-weight="normal" stroke="#8a9490" stroke-opacity="0.35" stroke-width="2" paint-order="stroke" font-style="italic">29</text>
<text x="690" y="1014" font-size="10" fill="#6a1f2c" text-anchor="middle" font-weight="normal" stroke="#8a9490" stroke-opacity="0.35" stroke-width="2" paint-order="stroke" font-style="italic">29</text>
<text x="634" y="1085" font-size="10" fill="#6a1f2c" text-anchor="middle" font-weight="normal" stroke="#8a9490" stroke-opacity="0.35" stroke-width="2" paint-order="stroke" font-style="italic">28</text>
<text x="571" y="1186" font-size="10" fill="#6a1f2c" text-anchor="middle" font-weight="normal" stroke="#8a9490" stroke-opacity="0.35" stroke-width="2" paint-order="stroke" font-style="italic">27</text>
<text x="214" y="1320" font-size="10" fill="#6a1f2c" text-anchor="middle" font-weight="normal" stroke="#8a9490" stroke-opacity="0.35" stroke-width="2" paint-order="stroke" font-style="italic">23</text>
<text x="285" y="1334" font-size="10" fill="#6a1f2c" text-anchor="middle" font-weight="normal" stroke="#8a9490" stroke-opacity="0.35" stroke-width="2" paint-order="stroke" font-style="italic">24</text>
<text x="249" y="1348" font-size="10" fill="#6a1f2c" text-anchor="middle" font-weight="normal" stroke="#8a9490" stroke-opacity="0.35" stroke-width="2" paint-order="stroke" font-style="italic">24</text>
<text x="456" y="1312" font-size="10" fill="#6a1f2c" text-anchor="middle" font-weight="normal" stroke="#8a9490" stroke-opacity="0.35" stroke-width="2" paint-order="stroke" font-style="italic">12</text>
<text x="456" y="1328" font-size="10" fill="#6a1f2c" text-anchor="middle" font-weight="normal" stroke="#8a9490" stroke-opacity="0.35" stroke-width="2" paint-order="stroke" font-style="italic">12</text>
<text x="475" y="1362" font-size="10" fill="#6a1f2c" text-anchor="middle" font-weight="normal" stroke="#8a9490" stroke-opacity="0.35" stroke-width="2" paint-order="stroke" font-style="italic">11</text>
<text x="498" y="1390" font-size="10" fill="#6a1f2c" text-anchor="middle" font-weight="normal" stroke="#8a9490" stroke-opacity="0.35" stroke-width="2" paint-order="stroke" font-style="italic">10</text>
<text x="503" y="1414" font-size="10" fill="#6a1f2c" text-anchor="middle" font-weight="normal" stroke="#8a9490" stroke-opacity="0.35" stroke-width="2" paint-order="stroke" font-style="italic">10</text>
<text x="549" y="1450" font-size="10" fill="#6a1f2c" text-anchor="middle" font-weight="normal" stroke="#8a9490" stroke-opacity="0.35" stroke-width="2" paint-order="stroke" font-style="italic">9</text>
<text x="562" y="1464" font-size="10" fill="#6a1f2c" text-anchor="middle" font-weight="normal" stroke="#8a9490" stroke-opacity="0.35" stroke-width="2" paint-order="stroke" font-style="italic">9</text>
<text x="594" y="1525" font-size="10" fill="#6a1f2c" text-anchor="middle" font-weight="normal" stroke="#8a9490" stroke-opacity="0.35" stroke-width="2" paint-order="stroke" font-style="italic">8</text>
<text x="594" y="1538" font-size="10" fill="#6a1f2c" text-anchor="middle" font-weight="normal" stroke="#8a9490" stroke-opacity="0.35" stroke-width="2" paint-order="stroke" font-style="italic">8</text>
<text x="487" y="1277" font-size="10" fill="#6a1f2c" text-anchor="middle" font-weight="normal" stroke="#8a9490" stroke-opacity="0.35" stroke-width="2" paint-order="stroke" font-style="italic">26a</text>
<text x="229" y="1438" font-size="10" fill="#6a1f2c" text-anchor="middle" font-weight="normal" stroke="#8a9490" stroke-opacity="0.35" stroke-width="2" paint-order="stroke" font-style="italic">19</text>
<text x="229" y="1449" font-size="10" fill="#6a1f2c" text-anchor="middle" font-weight="normal" stroke="#8a9490" stroke-opacity="0.35" stroke-width="2" paint-order="stroke" font-style="italic">19</text>
<text x="362" y="1326" font-size="10" fill="#6a1f2c" text-anchor="middle" font-weight="normal" stroke="#8a9490" stroke-opacity="0.35" stroke-width="2" paint-order="stroke" font-style="italic">25</text>
<text x="411" y="1310" font-size="10" fill="#6a1f2c" text-anchor="middle" font-weight="normal" stroke="#8a9490" stroke-opacity="0.35" stroke-width="2" paint-order="stroke" font-style="italic">26</text></svg><div style="position:absolute;width:27px;height:27px;background:#005a6e;color:#fff;font:bold 16px/27px 'Liberation Sans',sans-serif;text-align:center;border-radius:2px;left:506px;top:5px">U</div>
<div style="position:absolute;width:27px;height:27px;background:#005a6e;color:#fff;font:bold 16px/27px 'Liberation Sans',sans-serif;text-align:center;border-radius:2px;left:541px;top:5px">H</div>
<div style="position:absolute;width:27px;height:27px;background:#005a6e;color:#fff;font:bold 16px/27px 'Liberation Sans',sans-serif;text-align:center;border-radius:2px;left:576px;top:5px">T</div>
<div style="position:absolute;width:27px;height:27px;background:#005a6e;color:#fff;font:bold 16px/27px 'Liberation Sans',sans-serif;text-align:center;border-radius:2px;left:668px;top:119px">L</div>
<div style="position:absolute;width:27px;height:27px;background:#005a6e;color:#fff;font:bold 16px/27px 'Liberation Sans',sans-serif;text-align:center;border-radius:2px;left:668px;top:150px">O</div>
<div style="position:absolute;width:27px;height:27px;background:#005a6e;color:#fff;font:bold 16px/27px 'Liberation Sans',sans-serif;text-align:center;border-radius:2px;left:668px;top:181px">K</div>
<div style="position:absolute;width:27px;height:27px;background:#005a6e;color:#fff;font:bold 16px/27px 'Liberation Sans',sans-serif;text-align:center;border-radius:2px;left:668px;top:221px">V</div>
<div style="position:absolute;width:27px;height:27px;background:#005a6e;color:#fff;font:bold 16px/27px 'Liberation Sans',sans-serif;text-align:center;border-radius:2px;left:668px;top:252px">M</div>
<div style="position:absolute;width:27px;height:27px;background:#005a6e;color:#fff;font:bold 16px/27px 'Liberation Sans',sans-serif;text-align:center;border-radius:2px;left:668px;top:292px">P</div>
<div style="position:absolute;width:27px;height:27px;background:#005a6e;color:#fff;font:bold 16px/27px 'Liberation Sans',sans-serif;text-align:center;border-radius:2px;left:668px;top:323px">I</div>
<div style="position:absolute;width:27px;height:27px;background:#005a6e;color:#fff;font:bold 16px/27px 'Liberation Sans',sans-serif;text-align:center;border-radius:2px;left:668px;top:363px">R</div>
<div style="position:absolute;width:27px;height:27px;background:#005a6e;color:#fff;font:bold 16px/27px 'Liberation Sans',sans-serif;text-align:center;border-radius:2px;left:668px;top:393px">F</div>
<div style="position:absolute;left:668px;top:85px;width:27px;height:27px;background:#005a6e;border-radius:2px"></div>
<svg style="position:absolute;left:668px;top:85px" width="27" height="27" viewBox="0 0 27 27"><path d="M13.5,4.5 l1.6,0 0.6,2.4 2,0.9 2.1,-1.3 1.2,1.2 -1.3,2.1 0.9,2 2.4,0.6 0,1.6 -2.4,0.6 -0.9,2 1.3,2.1 -1.2,1.2 -2.1,-1.3 -2,0.9 -0.6,2.4 -1.6,0 -1.6,0 -0.6,-2.4 -2,-0.9 -2.1,1.3 -1.2,-1.2 1.3,-2.1 -0.9,-2 -2.4,-0.6 0,-1.6 2.4,-0.6 0.9,-2 -1.3,-2.1 1.2,-1.2 2.1,1.3 2,-0.9 0.6,-2.4 Z" fill="none" stroke="#fff" stroke-width="1" stroke-linejoin="round"/><circle cx="13.5" cy="13.5" r="3" fill="none" stroke="#fff" stroke-width="1"/></svg>
<div style="position:absolute;left:625px;top:4px;width:30px;height:30px;background:#f2f2f2;border-radius:3px"></div>
<svg style="position:absolute;left:625px;top:4px" width="30" height="30"><path d="M15,11 L25,19 L15,27 L5,19 Z" fill="#1d4a6a"/><path d="M15,8 L25,16.5 L15,25 L5,16.5 Z" fill="#f2f2f2"/><path d="M15,6 L25,14.5 L15,23 L5,14.5 Z" fill="#32a8e8"/></svg>
<div style="position:absolute;left:665px;top:3px;width:32px;height:38px;background:rgba(190,190,190,0.45)"></div>
<div style="position:absolute;left:668px;top:7px;width:26px;height:30px;background:#4d7dba;border-radius:3px"></div>
<svg style="position:absolute;left:668px;top:4px" width="26" height="36"><path d="M5.5,7 L16.5,18 L6.5,29" fill="none" stroke="#e8e8e8" stroke-width="3.2" stroke-linecap="round" stroke-linejoin="round"/></svg>
<div style="position:absolute;left:665px;top:43px;width:32px;height:38px;background:rgba(190,190,190,0.45)"></div>
<div style="position:absolute;left:668px;top:47px;width:26px;height:30px;background:#4d7dba;border-radius:3px"></div>
<svg style="position:absolute;left:668px;top:44px" width="26" height="36"><path d="M21.5,7 L10,18 L21,29" fill="none" stroke="#e8e8e8" stroke-width="3.2" stroke-linecap="round" stroke-linejoin="round"/></svg>
<svg style="position:absolute;left:0;top:0" width="700" height="1600" viewBox="200 0 700 1600">
<circle cx="230" cy="171" r="5.6" fill="#c0272d" stroke="#333" stroke-width="0.6"/>
<circle cx="228" cy="174" r="5.6" fill="#c0272d" stroke="#333" stroke-width="0.6"/>
<circle cx="229" cy="179" r="5.6" fill="#2a2ae0" stroke="#333" stroke-width="0.6"/>
<circle cx="210" cy="190" r="5.6" fill="#1ea0dc" stroke="#333" stroke-width="0.6"/>
<circle cx="269" cy="208" r="5.6" fill="#c0272d" stroke="#333" stroke-width="0.6"/>
<circle cx="203" cy="244" r="5.6" fill="#f010e0" stroke="#333" stroke-width="0.6"/>
<circle cx="381" cy="273" r="5.6" fill="#c0272d" stroke="#333" stroke-width="0.6"/>
<circle cx="481" cy="143" r="5.6" fill="#e010c0" stroke="#333" stroke-width="0.6"/>
<circle cx="770" cy="367" r="5.6" fill="#d010b0" stroke="#333" stroke-width="0.6"/>
<circle cx="786" cy="464" r="5.6" fill="#1ea0dc" stroke="#333" stroke-width="0.6"/>
<circle cx="861" cy="657" r="5.6" fill="#f010e0" stroke="#333" stroke-width="0.6"/>
<circle cx="862" cy="661" r="5.6" fill="#c0272d" stroke="#333" stroke-width="0.6"/>
<circle cx="871" cy="658" r="5.6" fill="#20e070" stroke="#333" stroke-width="0.6"/>
<circle cx="717" cy="705" r="5.6" fill="#20e070" stroke="#333" stroke-width="0.6"/>
<circle cx="705" cy="719" r="5.6" fill="#1ea0dc" stroke="#333" stroke-width="0.6"/>
<circle cx="686" cy="740" r="5.6" fill="#20e070" stroke="#333" stroke-width="0.6"/>
<circle cx="664" cy="746" r="5.6" fill="#20e070" stroke="#333" stroke-width="0.6"/>
<circle cx="651" cy="750" r="5.6" fill="#20e070" stroke="#333" stroke-width="0.6"/>
<circle cx="643" cy="748" r="5.6" fill="#20e070" stroke="#333" stroke-width="0.6"/>
<circle cx="648" cy="750" r="5.6" fill="#20e070" stroke="#333" stroke-width="0.6"/>
<circle cx="556" cy="445" r="5.6" fill="#f010e0" stroke="#333" stroke-width="0.6"/>
<circle cx="560" cy="445" r="5.6" fill="#1ea0dc" stroke="#333" stroke-width="0.6"/>
<circle cx="600" cy="695" r="5.6" fill="#f010e0" stroke="#333" stroke-width="0.6"/>
<circle cx="542" cy="783" r="5.6" fill="#c0272d" stroke="#333" stroke-width="0.6"/>
<circle cx="548" cy="787" r="5.6" fill="#20e070" stroke="#333" stroke-width="0.6"/>
<circle cx="458" cy="840" r="5.6" fill="#1ea0dc" stroke="#333" stroke-width="0.6"/>
<circle cx="204" cy="767" r="5.6" fill="#c0272d" stroke="#333" stroke-width="0.6"/>
<circle cx="219" cy="762" r="5.6" fill="#1ea0dc" stroke="#333" stroke-width="0.6"/>
<circle cx="215" cy="773" r="5.6" fill="#20e070" stroke="#333" stroke-width="0.6"/>
<circle cx="222" cy="784" r="5.6" fill="#1ea0dc" stroke="#333" stroke-width="0.6"/>
<circle cx="225" cy="755" r="5.6" fill="#20e070" stroke="#333" stroke-width="0.6"/>
<circle cx="235" cy="755" r="5.6" fill="#f010e0" stroke="#333" stroke-width="0.6"/>
<circle cx="239" cy="755" r="5.6" fill="#1ea0dc" stroke="#333" stroke-width="0.6"/>
<circle cx="247" cy="750" r="5.6" fill="#2a2ae0" stroke="#333" stroke-width="0.6"/>
<circle cx="252" cy="753" r="5.6" fill="#1ea0dc" stroke="#333" stroke-width="0.6"/>
<circle cx="260" cy="754" r="5.6" fill="#f010e0" stroke="#333" stroke-width="0.6"/>
<circle cx="270" cy="745" r="5.6" fill="#2a2ae0" stroke="#333" stroke-width="0.6"/>
<circle cx="271" cy="741" r="5.6" fill="#f010e0" stroke="#333" stroke-width="0.6"/>
<circle cx="276" cy="751" r="5.6" fill="#f010e0" stroke="#333" stroke-width="0.6"/>
<circle cx="285" cy="750" r="5.6" fill="#20e070" stroke="#333" stroke-width="0.6"/>
<circle cx="289" cy="750" r="5.6" fill="#f010e0" stroke="#333" stroke-width="0.6"/>
<circle cx="299" cy="747" r="5.6" fill="#20e070" stroke="#333" stroke-width="0.6"/>
<circle cx="307" cy="755" r="5.6" fill="#f010e0" stroke="#333" stroke-width="0.6"/>
<circle cx="312" cy="750" r="5.6" fill="#f010e0" stroke="#333" stroke-width="0.6"/>
<circle cx="317" cy="764" r="5.6" fill="#2a2ae0" stroke="#333" stroke-width="0.6"/>
<circle cx="320" cy="772" r="5.6" fill="#20e070" stroke="#333" stroke-width="0.6"/>
<circle cx="319" cy="789" r="5.6" fill="#f010e0" stroke="#333" stroke-width="0.6"/>
<circle cx="316" cy="799" r="5.6" fill="#c0272d" stroke="#333" stroke-width="0.6"/>
<circle cx="344" cy="767" r="5.6" fill="#f010e0" stroke="#333" stroke-width="0.6"/>
<circle cx="350" cy="767" r="5.6" fill="#c0272d" stroke="#333" stroke-width="0.6"/>
<circle cx="387" cy="867" r="5.6" fill="#f010e0" stroke="#333" stroke-width="0.6"/>
<circle cx="394" cy="869" r="5.6" fill="#f010e0" stroke="#333" stroke-width="0.6"/>
<circle cx="417" cy="871" r="5.6" fill="#f010e0" stroke="#333" stroke-width="0.6"/>
<circle cx="420" cy="875" r="5.6" fill="#f010e0" stroke="#333" stroke-width="0.6"/>
<circle cx="427" cy="889" r="5.6" fill="#20e070" stroke="#333" stroke-width="0.6"/>
<circle cx="322" cy="959" r="5.6" fill="#f010e0" stroke="#333" stroke-width="0.6"/>
<circle cx="307" cy="987" r="5.6" fill="#2a2ae0" stroke="#333" stroke-width="0.6"/>
<circle cx="300" cy="992" r="5.6" fill="#f010e0" stroke="#333" stroke-width="0.6"/>
<circle cx="306" cy="992" r="5.6" fill="#f010e0" stroke="#333" stroke-width="0.6"/>
<circle cx="322" cy="994" r="5.6" fill="#f010e0" stroke="#333" stroke-width="0.6"/>
<circle cx="327" cy="990" r="5.6" fill="#f010e0" stroke="#333" stroke-width="0.6"/>
<circle cx="321" cy="1000" r="5.6" fill="#f010e0" stroke="#333" stroke-width="0.6"/>
<circle cx="312" cy="1005" r="5.6" fill="#2a2ae0" stroke="#333" stroke-width="0.6"/>
<circle cx="306" cy="1006" r="5.6" fill="#f010e0" stroke="#333" stroke-width="0.6"/>
<circle cx="339" cy="994" r="5.6" fill="#f010e0" stroke="#333" stroke-width="0.6"/>
<circle cx="339" cy="989" r="5.6" fill="#2a2ae0" stroke="#333" stroke-width="0.6"/>
<circle cx="479" cy="997" r="5.6" fill="#f010e0" stroke="#333" stroke-width="0.6"/>
<circle cx="269" cy="1063" r="5.6" fill="#f010e0" stroke="#333" stroke-width="0.6"/>
<circle cx="249" cy="1098" r="5.6" fill="#c0272d" stroke="#333" stroke-width="0.6"/>
<circle cx="234" cy="1115" r="5.6" fill="#20e070" stroke="#333" stroke-width="0.6"/>
<circle cx="237" cy="1124" r="5.6" fill="#f010e0" stroke="#333" stroke-width="0.6"/>
<circle cx="229" cy="1130" r="5.6" fill="#f010e0" stroke="#333" stroke-width="0.6"/>
<circle cx="246" cy="1131" r="5.6" fill="#f010e0" stroke="#333" stroke-width="0.6"/>
<circle cx="326" cy="1104" r="5.6" fill="#2a2ae0" stroke="#333" stroke-width="0.6"/>
<circle cx="296" cy="1119" r="5.6" fill="#2a2ae0" stroke="#333" stroke-width="0.6"/>
<circle cx="301" cy="1115" r="5.6" fill="#f010e0" stroke="#333" stroke-width="0.6"/>
<circle cx="319" cy="1124" r="5.6" fill="#f010e0" stroke="#333" stroke-width="0.6"/>
<circle cx="322" cy="1132" r="5.6" fill="#1ea0dc" stroke="#333" stroke-width="0.6"/>
<circle cx="635" cy="954" r="5.6" fill="#f010e0" stroke="#333" stroke-width="0.6"/>
<circle cx="637" cy="960" r="5.6" fill="#20e070" stroke="#333" stroke-width="0.6"/>
<circle cx="639" cy="966" r="5.6" fill="#20e070" stroke="#333" stroke-width="0.6"/>
<circle cx="652" cy="970" r="5.6" fill="#2a2ae0" stroke="#333" stroke-width="0.6"/>
<circle cx="651" cy="971" r="5.6" fill="#c0272d" stroke="#333" stroke-width="0.6"/>
<circle cx="665" cy="970" r="5.6" fill="#2a2ae0" stroke="#333" stroke-width="0.6"/>
<circle cx="662" cy="970" r="5.6" fill="#20e070" stroke="#333" stroke-width="0.6"/>
<circle cx="624" cy="982" r="5.6" fill="#f010e0" stroke="#333" stroke-width="0.6"/>
<circle cx="626" cy="990" r="5.6" fill="#f010e0" stroke="#333" stroke-width="0.6"/>
<circle cx="200" cy="1246" r="5.6" fill="#f010e0" stroke="#333" stroke-width="0.6"/>
<circle cx="369" cy="1222" r="5.6" fill="#f010e0" stroke="#333" stroke-width="0.6"/>
<circle cx="362" cy="1237" r="5.6" fill="#1ea0dc" stroke="#333" stroke-width="0.6"/>
<circle cx="382" cy="1259" r="5.6" fill="#1ea0dc" stroke="#333" stroke-width="0.6"/>
<circle cx="402" cy="1280" r="5.6" fill="#c0272d" stroke="#333" stroke-width="0.6"/>
<circle cx="394" cy="1279" r="5.6" fill="#f010e0" stroke="#333" stroke-width="0.6"/>
<circle cx="400" cy="1288" r="5.6" fill="#1ea0dc" stroke="#333" stroke-width="0.6"/>
<circle cx="404" cy="1299" r="5.6" fill="#20e070" stroke="#333" stroke-width="0.6"/>
<circle cx="414" cy="1297" r="5.6" fill="#f010e0" stroke="#333" stroke-width="0.6"/>
<circle cx="407" cy="1303" r="5.6" fill="#f010e0" stroke="#333" stroke-width="0.6"/>
<circle cx="437" cy="1327" r="5.6" fill="#f010e0" stroke="#333" stroke-width="0.6"/>
<circle cx="247" cy="1298" r="5.6" fill="#2a2ae0" stroke="#333" stroke-width="0.6"/>
<circle cx="236" cy="1307" r="5.6" fill="#f010e0" stroke="#333" stroke-width="0.6"/>
<circle cx="343" cy="1567" r="5.6" fill="#f010e0" stroke="#333" stroke-width="0.6"/>
<circle cx="845" cy="238" r="5.6" fill="#2a2ae0" stroke="#333" stroke-width="0.6"/>
<circle cx="852" cy="236" r="5.6" fill="#f0d020" stroke="#333" stroke-width="0.6"/>
<circle cx="849" cy="243" r="5.6" fill="#1ea0dc" stroke="#333" stroke-width="0.6"/>
<circle cx="856" cy="241" r="5.6" fill="#1ea0dc" stroke="#333" stroke-width="0.6"/>
<circle cx="862" cy="240" r="5.6" fill="#c0272d" stroke="#333" stroke-width="0.6"/>
<circle cx="855" cy="248" r="5.6" fill="#f010e0" stroke="#333" stroke-width="0.6"/>
<circle cx="848" cy="246" r="5.6" fill="#c0272d" stroke="#333" stroke-width="0.6"/>
<path d="M266,9 L280,4 L276,17 Z" fill="#d010b0"/>
<path d="M782,66 L790,74 L782,82 L774,74 Z" fill="#2a2ae0"/>
<circle cx="450" cy="800" r="6.5" fill="#222" stroke="#fff" stroke-width="1.6"/>
</svg><div style="position:absolute;left:0;top:1539px;width:615px;height:12px;background:linear-gradient(to right,#d4c21a 0px,#d4c21a 107px,#22bb44 136px,#22bb44 232px,#10a6dd 298px,#14a8e0 394px,#2a2ae8 450px,#2a2ae8 472px,#b010e0 550px,#e010c0 615px);border-top:1px solid #222;border-bottom:1px solid #222;box-sizing:border-box"></div>
<div style="position:absolute;left:32px;top:1539px;width:1px;height:12px;background:#111"></div>
<div style="position:absolute;left:84px;top:1539px;width:1px;height:12px;background:#111"></div>
<div style="position:absolute;left:136px;top:1539px;width:1px;height:12px;background:#111"></div>
<div style="position:absolute;left:187px;top:1539px;width:1px;height:12px;background:#111"></div>
<div style="position:absolute;left:298px;top:1539px;width:1px;height:12px;background:#111"></div>
<div style="position:absolute;left:450px;top:1539px;width:1px;height:12px;background:#111"></div>
<div style="position:absolute;left:614px;top:1539px;width:1px;height:12px;background:#111"></div>
<div style="position:absolute;left:2px;top:1553px;width:60px;text-align:center;font-size:9.5px;line-height:12px;color:#1e1e1e">4 000</div>
<div style="position:absolute;left:54px;top:1553px;width:60px;text-align:center;font-size:9.5px;line-height:12px;color:#1e1e1e">6 000</div>
<div style="position:absolute;left:106px;top:1553px;width:60px;text-align:center;font-size:9.5px;line-height:12px;color:#1e1e1e">8 000</div>
<div style="position:absolute;left:157px;top:1553px;width:60px;text-align:center;font-size:9.5px;line-height:12px;color:#1e1e1e">10 000</div>
<div style="position:absolute;left:268px;top:1553px;width:60px;text-align:center;font-size:9.5px;line-height:12px;color:#1e1e1e">20 000</div>
<div style="position:absolute;left:420px;top:1553px;width:60px;text-align:center;font-size:9.5px;line-height:12px;color:#1e1e1e">30 000</div>
<div style="position:absolute;left:568px;top:1553px;width:60px;text-align:center;font-size:9.5px;line-height:12px;color:#1e1e1e">40 000+</div>
<svg style="position:absolute;left:635px;top:1515px" width="28" height="58"><circle cx="13" cy="14" r="12.5" fill="#1b3a5e"/><path d="M5.5,14 H20.5 M13,6.5 V21.5" stroke="#fff" stroke-width="3"/><circle cx="13" cy="43" r="12.5" fill="#1b3a5e"/><path d="M5.5,43 H20.5" stroke="#fff" stroke-width="3"/></svg>
<div style="position:absolute;left:8px;top:1574px;width:88px;height:18px;background:rgba(235,235,235,0.85);border-radius:3px"></div>
<div style="position:absolute;left:11px;top:1576px;width:81px;height:11px;border:1px solid #444;border-top:none;font-size:11px;line-height:11px;text-align:center;color:#222">2 NM</div>
<div style="position:absolute;left:499px;top:1584px;width:201px;height:16px;background:rgba(210,210,210,0.75);border-top-left-radius:3px"></div>
<div style="position:absolute;left:505px;top:1584px;font-size:12.5px;line-height:16px;color:#333;white-space:nowrap">© <span style="color:#555">OpenStreetMap</span> contributors.</div></div>
<div id="rp">
<div style="position:absolute;left:0;top:5px;width:30px;height:30px;background:#2b4a7c;border-radius:2px;z-index:2"></div>
<svg style="position:absolute;left:0;top:5px;z-index:3" width="30" height="30"><path d="M5,15 L12,8 L12,22 Z M25,15 L18,8 L18,22 Z" fill="#f0f0f0"/><rect x="14" y="7" width="2" height="16" fill="#2b4a7c"/></svg>
<div class="b" style="left:25.5px;top:12px;color:#bdbdbd;transform:scaleX(1.21)"><u>tar1090</u> (3.14.1791) decoder: <u>readsb</u></div>
<div class="b" style="left:11px;top:50px;transform:scaleX(1.18)">Total Aircraft: <span style="font-weight:normal;color:#cfcfcf">1</span></div>
<div class="b" style="left:152px;top:42px;transform:scaleX(1.18)">Messages:</div>
<div class="n" style="left:152px;top:56px;letter-spacing:0.6px">124.5/sec</div>
<div class="b" style="left:11px;top:76px;transform:scaleX(1.18)">With Position: <span style="font-weight:normal;color:#cfcfcf">0</span></div>
<div class="b" style="left:11px;top:95px;transform:scaleX(1.18)">Stats available</div>
<div class="b" style="left:11px;top:110px;color:#2020f0;transform:scaleX(1.18)"><u>here</u></div>
<div style="position:absolute;left:9px;top:135px;width:282px;height:34px;background:#262626"></div>
<div class="tab" style="left:11px;width:70px;background:#3e7594">Search</div>
<div class="tab" style="left:84px;width:65px;background:#2f2f2f">Filters</div>
<div class="tab" style="left:151px;width:83px;background:#2f2f2f">Columns</div>
<div class="b" style="left:14px;top:183px;transform:scaleX(1.18)">Search:</div>
<div style="position:absolute;left:14px;top:198px;width:107px;height:20px;background:#222"></div>
<div class="btn" style="left:127px;top:199px;width:60px">Search</div>
<div class="btn" style="left:15px;top:220px;width:98px">Clear Search</div>
<div class="b" style="left:14px;top:241px;transform:scaleX(1.18)">Jump to Airport or Latitude,</div>
<div class="b" style="left:14px;top:255px;transform:scaleX(1.18)">Longitude:</div>
<div style="position:absolute;left:14px;top:270px;width:107px;height:20px;background:#222"></div>
<div class="btn" style="left:127px;top:271px;width:48px">Jump</div>
<div class="btn" style="left:180px;top:271px;width:49px">Clear</div>
<div class="th" style="left:7px;width:20px"></div>
<div class="th" style="left:29px;width:62px">Callsign</div>
<div class="th" style="left:93px;width:42px">Route</div>
<div class="th" style="left:137px;width:35px">Type</div>
<div class="th" style="left:174px;width:53px">Squawk</div>
<div class="th" style="left:229px;width:48px">Alt. (ft)</div>
<div class="th" style="left:279px;width:21px;text-align:left;overflow:hidden">&nbsp;Spd</div>
<div style="position:absolute;left:7px;top:335px;width:293px;height:16px;background:#2a2a2a"></div>
<div style="position:absolute;left:8px;top:337px;width:18px;height:12px;background:linear-gradient(#c8102e 0 33%,#f4f4f4 33% 66%,#21468b 66%)"></div>
<div class="n" style="left:30px;top:335px;letter-spacing:0px;color:#c8c8c8"><u>GJW29LO</u></div>
<div class="n" style="left:138px;top:335px;letter-spacing:0.5px;color:#c8c8c8">A332</div>
<div class="n" style="left:236px;top:335px;letter-spacing:0.5px;color:#c8c8c8">41000</div>
<div class="bd" style="left:7px;top:365px;width:50px;background:#2b5473">ADS-B</div>
<div class="bd" style="left:61px;top:365px;width:93px;background:#2c653b">UAT / ADS-R</div>
<div class="bd" style="left:158px;top:365px;width:44px;background:#615240">MLAT</div>
<div class="bd" style="left:206px;top:365px;width:43px;background:#662b31">TIS-B</div>
<div class="bd" style="left:7px;top:388px;width:59px;background:#244a7e">Mode-S</div>
<div class="bd" style="left:70px;top:388px;width:28px;background:transparent">AIS</div>
<div class="bd" style="left:103px;top:388px;width:51px;background:#2c653b">ADS-C</div>
<div style="position:absolute;left:0;top:413px;width:300px;height:16px;background:#f1f1f1"></div>
<div style="position:absolute;left:15px;top:416px;width:184px;height:11px;background:#c1c1c1"></div>
<svg style="position:absolute;left:0;top:413px" width="300" height="16"><path d="M6,8 L10,4 L10,12 Z" fill="#a3a3a3"/><path d="M294,8 L290,4 L290,12 Z" fill="#505050"/></svg>
</div>
</body></html>
